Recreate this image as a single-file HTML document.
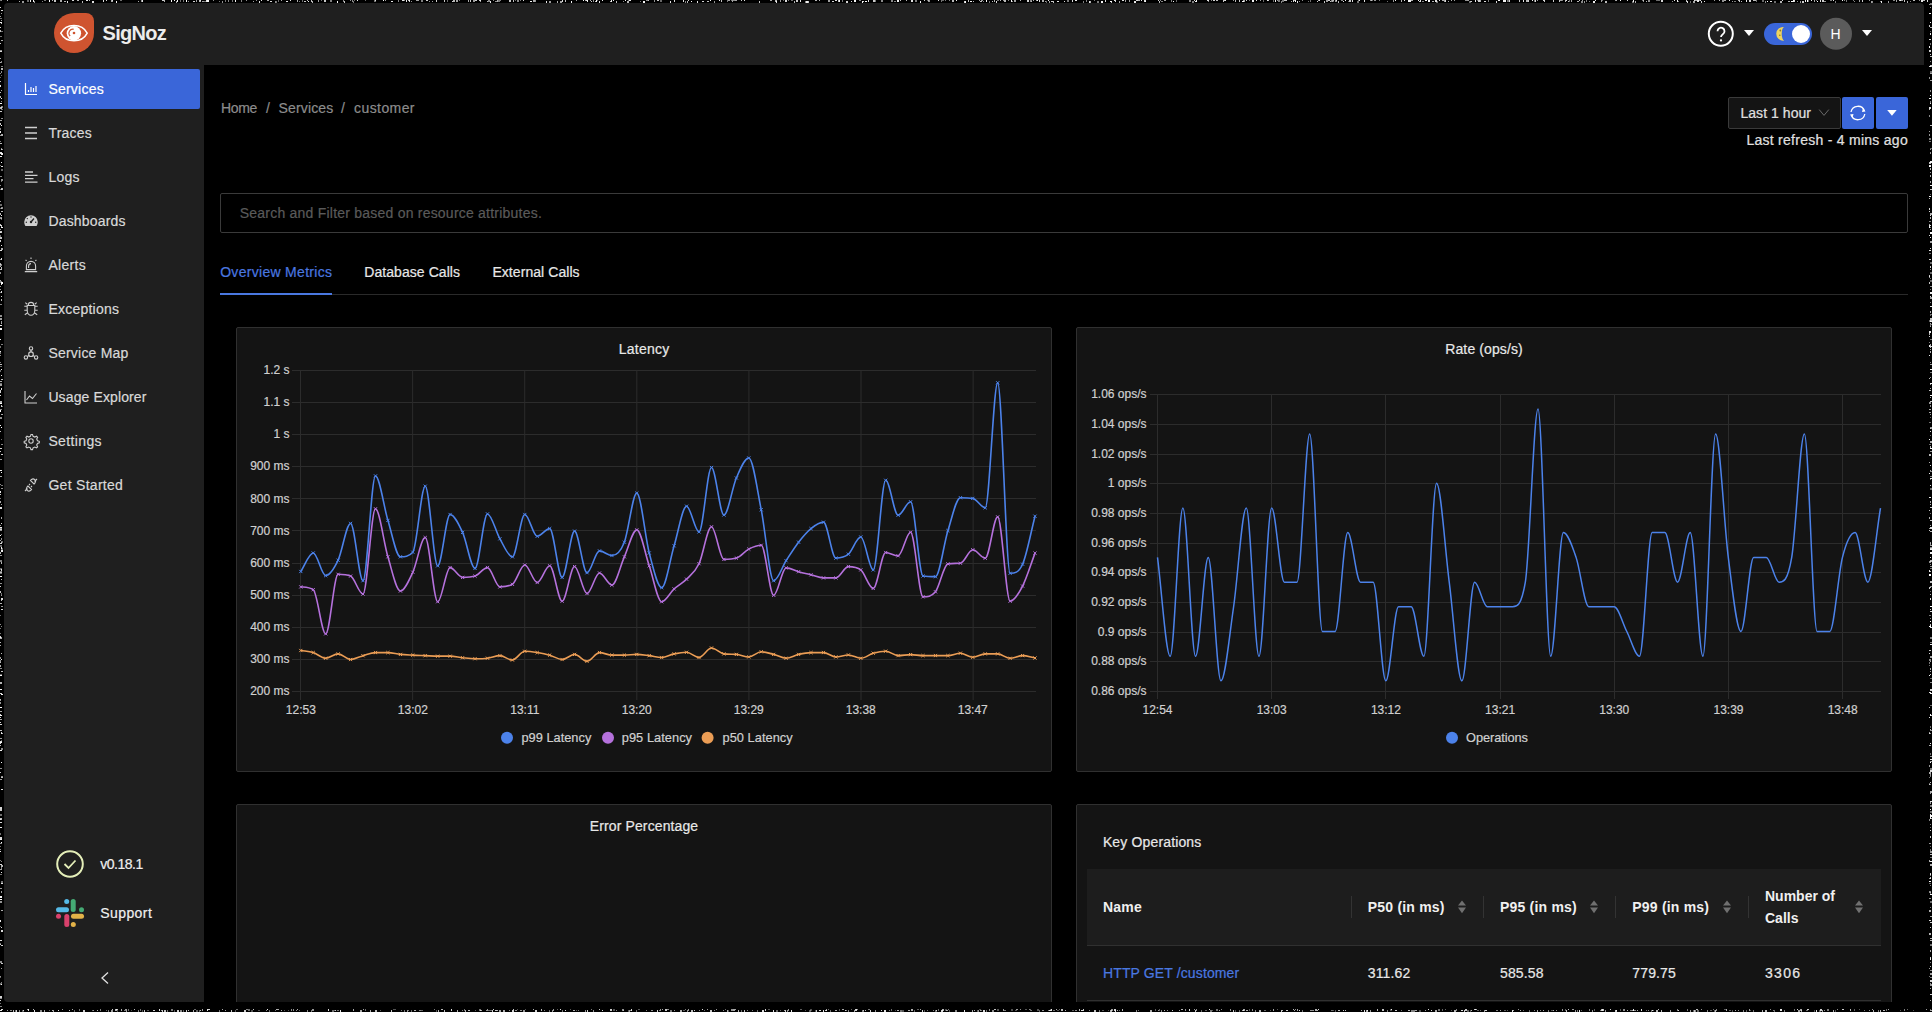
<!DOCTYPE html>
<html><head><meta charset="utf-8">
<style>
html,body{margin:0;padding:0;background:#000;width:1932px;height:1012px;overflow:hidden}
body{font-family:"Liberation Sans",sans-serif;position:relative}
.win{position:absolute;left:0;top:0;width:1932px;height:1012px;clip-path:inset(3px 8px 10px 4px round 4px);background:#000}
.a{position:absolute;box-sizing:border-box}
.t{position:absolute;white-space:nowrap;line-height:1;font-family:"Liberation Sans",sans-serif}
svg.full{position:absolute;left:0;top:0}
</style></head><body>
<div class="win">
  <!-- header -->
  <div class="a" style="left:0;top:0;width:1932px;height:65px;background:#1f1f1f"></div>
  <!-- sidebar -->
  <div class="a" style="left:0;top:65px;width:204px;height:947px;background:#1f1f1f"></div>
  <!-- services highlight -->
  <div class="a" style="left:8px;top:69px;width:192px;height:40px;background:#3a66d9;border-radius:2px"></div>

  <!-- logo -->
  <div class="a" style="left:54px;top:13px;width:40px;height:40px;background:#cf5430;border-radius:50% 20% 50% 50%"></div>
  <svg class="full" width="1932" height="1012">
    <path d="M60.8,33.2 C66,23 82,23 87.2,33.2 C82,43.4 66,43.4 60.8,33.2 z" fill="none" stroke="#fff" stroke-width="1.5"/>
    <circle cx="73.9" cy="33.3" r="7.2" fill="#fff"/>
    <path d="M70.2,36 A4,4 0 0 1 73.8,29.2" fill="none" stroke="#cf5430" stroke-width="1.1"/>
    <circle cx="74" cy="33" r="1.3" fill="#cf5430"/>
  </svg>

  <!-- search box -->
  <div class="a" style="left:220px;top:193px;width:1688px;height:40px;border:1px solid #3a3a3a;border-radius:2px;background:#000"></div>
  <!-- tabs -->
  <div class="a" style="left:220px;top:294px;width:1688px;height:1px;background:#2a2a2a"></div>
  <div class="a" style="left:220px;top:293px;width:112px;height:2px;background:#4a78e0"></div>

  <!-- date picker -->
  <div class="a" style="left:1728px;top:97px;width:113px;height:32px;border:1px solid #3a3a3a;border-radius:2px;background:#141414"></div>
  <div class="a" style="left:1842px;top:97px;width:32px;height:32px;background:#3a66d9;border-radius:2px"></div>
  <div class="a" style="left:1876px;top:97px;width:32px;height:32px;background:#3a66d9;border-radius:2px"></div>

  <!-- panels -->
  <div class="a" style="left:236px;top:327px;width:816px;height:445px;background:#141414;border:1px solid #303030;border-radius:2px"></div>
  <div class="a" style="left:1076px;top:327px;width:816px;height:445px;background:#141414;border:1px solid #303030;border-radius:2px"></div>
  <div class="a" style="left:236px;top:804px;width:816px;height:300px;background:#141414;border:1px solid #303030;border-radius:2px"></div>
  <div class="a" style="left:1076px;top:804px;width:816px;height:300px;background:#141414;border:1px solid #303030;border-radius:2px"></div>
  <!-- table header -->
  <div class="a" style="left:1087px;top:869px;width:794px;height:77px;background:#1d1d1d;border-bottom:1px solid #303030"></div>
  <div class="a" style="left:1351px;top:896px;width:1px;height:22px;background:#333"></div>
  <div class="a" style="left:1483px;top:896px;width:1px;height:22px;background:#333"></div>
  <div class="a" style="left:1615px;top:896px;width:1px;height:22px;background:#333"></div>
  <div class="a" style="left:1748px;top:896px;width:1px;height:22px;background:#333"></div>
  <div class="a" style="left:1087px;top:1000px;width:794px;height:1px;background:#303030"></div>

  <svg class="full" width="1932" height="1012">
<line x1="292" y1="370.5" x2="1036" y2="370.5" stroke="#2c2c2c" stroke-width="1"/>
<line x1="292" y1="402.5" x2="1036" y2="402.5" stroke="#2c2c2c" stroke-width="1"/>
<line x1="292" y1="434.5" x2="1036" y2="434.5" stroke="#2c2c2c" stroke-width="1"/>
<line x1="292" y1="466.5" x2="1036" y2="466.5" stroke="#2c2c2c" stroke-width="1"/>
<line x1="292" y1="498.5" x2="1036" y2="498.5" stroke="#2c2c2c" stroke-width="1"/>
<line x1="292" y1="530.5" x2="1036" y2="530.5" stroke="#2c2c2c" stroke-width="1"/>
<line x1="292" y1="563.5" x2="1036" y2="563.5" stroke="#2c2c2c" stroke-width="1"/>
<line x1="292" y1="595.5" x2="1036" y2="595.5" stroke="#2c2c2c" stroke-width="1"/>
<line x1="292" y1="627.5" x2="1036" y2="627.5" stroke="#2c2c2c" stroke-width="1"/>
<line x1="292" y1="659.5" x2="1036" y2="659.5" stroke="#2c2c2c" stroke-width="1"/>
<line x1="292" y1="691.5" x2="1036" y2="691.5" stroke="#2c2c2c" stroke-width="1"/>
<line x1="300.50" y1="370.0" x2="300.50" y2="700" stroke="#2c2c2c" stroke-width="1"/>
<line x1="412.60" y1="370.0" x2="412.60" y2="700" stroke="#2c2c2c" stroke-width="1"/>
<line x1="524.70" y1="370.0" x2="524.70" y2="700" stroke="#2c2c2c" stroke-width="1"/>
<line x1="636.80" y1="370.0" x2="636.80" y2="700" stroke="#2c2c2c" stroke-width="1"/>
<line x1="748.90" y1="370.0" x2="748.90" y2="700" stroke="#2c2c2c" stroke-width="1"/>
<line x1="861.00" y1="370.0" x2="861.00" y2="700" stroke="#2c2c2c" stroke-width="1"/>
<line x1="973.10" y1="370.0" x2="973.10" y2="700" stroke="#2c2c2c" stroke-width="1"/>
<line x1="1150" y1="394.5" x2="1881" y2="394.5" stroke="#2c2c2c" stroke-width="1"/>
<line x1="1150" y1="424.5" x2="1881" y2="424.5" stroke="#2c2c2c" stroke-width="1"/>
<line x1="1150" y1="454.5" x2="1881" y2="454.5" stroke="#2c2c2c" stroke-width="1"/>
<line x1="1150" y1="483.5" x2="1881" y2="483.5" stroke="#2c2c2c" stroke-width="1"/>
<line x1="1150" y1="513.5" x2="1881" y2="513.5" stroke="#2c2c2c" stroke-width="1"/>
<line x1="1150" y1="543.5" x2="1881" y2="543.5" stroke="#2c2c2c" stroke-width="1"/>
<line x1="1150" y1="572.5" x2="1881" y2="572.5" stroke="#2c2c2c" stroke-width="1"/>
<line x1="1150" y1="602.5" x2="1881" y2="602.5" stroke="#2c2c2c" stroke-width="1"/>
<line x1="1150" y1="632.5" x2="1881" y2="632.5" stroke="#2c2c2c" stroke-width="1"/>
<line x1="1150" y1="661.5" x2="1881" y2="661.5" stroke="#2c2c2c" stroke-width="1"/>
<line x1="1150" y1="691.5" x2="1881" y2="691.5" stroke="#2c2c2c" stroke-width="1"/>
<line x1="1157.5" y1="394.3" x2="1157.5" y2="699" stroke="#2c2c2c" stroke-width="1"/>
<line x1="1271.5" y1="394.3" x2="1271.5" y2="699" stroke="#2c2c2c" stroke-width="1"/>
<line x1="1385.5" y1="394.3" x2="1385.5" y2="699" stroke="#2c2c2c" stroke-width="1"/>
<line x1="1500.5" y1="394.3" x2="1500.5" y2="699" stroke="#2c2c2c" stroke-width="1"/>
<line x1="1614.5" y1="394.3" x2="1614.5" y2="699" stroke="#2c2c2c" stroke-width="1"/>
<line x1="1728.5" y1="394.3" x2="1728.5" y2="699" stroke="#2c2c2c" stroke-width="1"/>
<line x1="1842.5" y1="394.3" x2="1842.5" y2="699" stroke="#2c2c2c" stroke-width="1"/>
<path d="M300.80,650.53C304.95,651.21 309.10,651.30 313.24,652.58C317.39,653.86 321.54,658.23 325.69,658.23C329.84,658.23 333.99,653.86 338.13,653.86C342.28,653.86 346.43,659.51 350.58,659.51C354.73,659.51 358.87,656.82 363.02,655.66C367.17,654.51 371.32,652.58 375.47,652.58C379.61,652.58 383.76,652.58 387.91,652.58C392.06,652.58 396.21,653.95 400.36,654.38C404.50,654.81 408.65,654.93 412.80,655.15C416.95,655.36 421.10,655.49 425.24,655.66C429.39,655.83 433.54,656.17 437.69,656.17C441.84,656.17 445.99,656.17 450.13,656.17C454.28,656.17 458.43,657.29 462.58,657.72C466.73,658.14 470.87,658.74 475.02,658.74C479.17,658.74 483.32,658.74 487.47,658.23C491.61,657.72 495.76,655.66 499.91,655.66C504.06,655.66 508.21,660.03 512.36,660.03C516.50,660.03 520.65,651.30 524.80,651.30C528.95,651.30 533.10,651.94 537.24,652.58C541.39,653.22 545.54,653.99 549.69,655.15C553.84,656.30 557.99,659.51 562.13,659.51C566.28,659.51 570.43,654.38 574.58,654.38C578.73,654.38 582.87,661.31 587.02,661.31C591.17,661.31 595.32,652.58 599.47,652.58C603.61,652.58 607.76,655.15 611.91,655.15C616.06,655.15 620.21,655.15 624.36,655.15C628.50,655.15 632.65,654.38 636.80,654.38C640.95,654.38 645.10,655.15 649.24,655.66C653.39,656.17 657.54,657.46 661.69,657.46C665.84,657.46 669.99,654.72 674.13,653.86C678.28,653.01 682.43,652.32 686.58,652.32C690.73,652.32 694.87,657.46 699.02,657.46C703.17,657.46 707.32,647.96 711.47,647.96C715.61,647.96 719.76,653.40 723.91,653.86C728.06,654.33 732.21,654.16 736.36,654.38C740.50,654.60 744.65,656.94 748.80,656.94C752.95,656.94 757.10,651.81 761.24,651.81C765.39,651.81 769.54,653.31 773.69,654.38C777.84,655.45 781.99,658.23 786.13,658.23C790.28,658.23 794.43,655.32 798.58,654.38C802.73,653.44 806.87,652.58 811.02,652.58C815.17,652.58 819.32,652.58 823.47,652.58C827.61,652.58 831.76,656.94 835.91,656.94C840.06,656.94 844.21,654.93 848.36,654.93C852.50,654.93 856.65,658.29 860.80,658.29C864.95,658.29 869.10,654.42 873.24,653.25C877.39,652.07 881.54,651.23 885.69,651.23C889.84,651.23 893.99,655.60 898.13,655.60C902.28,655.60 906.43,654.59 910.58,654.59C914.73,654.59 918.87,655.60 923.02,655.60C927.17,655.60 931.32,655.60 935.47,655.60C939.61,655.60 943.76,655.60 947.91,655.60C952.06,655.60 956.21,653.25 960.36,653.25C964.50,653.25 968.65,657.28 972.80,657.28C976.95,657.28 981.10,653.92 985.24,653.92C989.39,653.92 993.54,653.92 997.69,653.92C1001.84,653.92 1005.99,658.29 1010.13,658.29C1014.28,658.29 1018.43,655.60 1022.58,655.60C1026.73,655.60 1030.87,657.17 1035.02,657.95" fill="none" stroke="#eb9d55" stroke-width="1.6"/>
<path d="M299.2,652.1l3.2,-3.2M299.2,648.9l3.2,3.2M311.6,654.2l3.2,-3.2M311.6,651.0l3.2,3.2M324.1,659.8l3.2,-3.2M324.1,656.6l3.2,3.2M336.5,655.5l3.2,-3.2M336.5,652.3l3.2,3.2M349.0,661.1l3.2,-3.2M349.0,657.9l3.2,3.2M361.4,657.3l3.2,-3.2M361.4,654.1l3.2,3.2M373.9,654.2l3.2,-3.2M373.9,651.0l3.2,3.2M386.3,654.2l3.2,-3.2M386.3,651.0l3.2,3.2M398.8,656.0l3.2,-3.2M398.8,652.8l3.2,3.2M411.2,656.7l3.2,-3.2M411.2,653.5l3.2,3.2M423.6,657.3l3.2,-3.2M423.6,654.1l3.2,3.2M436.1,657.8l3.2,-3.2M436.1,654.6l3.2,3.2M448.5,657.8l3.2,-3.2M448.5,654.6l3.2,3.2M461.0,659.3l3.2,-3.2M461.0,656.1l3.2,3.2M473.4,660.3l3.2,-3.2M473.4,657.1l3.2,3.2M485.9,659.8l3.2,-3.2M485.9,656.6l3.2,3.2M498.3,657.3l3.2,-3.2M498.3,654.1l3.2,3.2M510.8,661.6l3.2,-3.2M510.8,658.4l3.2,3.2M523.2,652.9l3.2,-3.2M523.2,649.7l3.2,3.2M535.6,654.2l3.2,-3.2M535.6,651.0l3.2,3.2M548.1,656.7l3.2,-3.2M548.1,653.5l3.2,3.2M560.5,661.1l3.2,-3.2M560.5,657.9l3.2,3.2M573.0,656.0l3.2,-3.2M573.0,652.8l3.2,3.2M585.4,662.9l3.2,-3.2M585.4,659.7l3.2,3.2M597.9,654.2l3.2,-3.2M597.9,651.0l3.2,3.2M610.3,656.7l3.2,-3.2M610.3,653.5l3.2,3.2M622.8,656.7l3.2,-3.2M622.8,653.5l3.2,3.2M635.2,656.0l3.2,-3.2M635.2,652.8l3.2,3.2M647.6,657.3l3.2,-3.2M647.6,654.1l3.2,3.2M660.1,659.1l3.2,-3.2M660.1,655.9l3.2,3.2M672.5,655.5l3.2,-3.2M672.5,652.3l3.2,3.2M685.0,653.9l3.2,-3.2M685.0,650.7l3.2,3.2M697.4,659.1l3.2,-3.2M697.4,655.9l3.2,3.2M709.9,649.6l3.2,-3.2M709.9,646.4l3.2,3.2M722.3,655.5l3.2,-3.2M722.3,652.3l3.2,3.2M734.8,656.0l3.2,-3.2M734.8,652.8l3.2,3.2M747.2,658.5l3.2,-3.2M747.2,655.3l3.2,3.2M759.6,653.4l3.2,-3.2M759.6,650.2l3.2,3.2M772.1,656.0l3.2,-3.2M772.1,652.8l3.2,3.2M784.5,659.8l3.2,-3.2M784.5,656.6l3.2,3.2M797.0,656.0l3.2,-3.2M797.0,652.8l3.2,3.2M809.4,654.2l3.2,-3.2M809.4,651.0l3.2,3.2M821.9,654.2l3.2,-3.2M821.9,651.0l3.2,3.2M834.3,658.5l3.2,-3.2M834.3,655.3l3.2,3.2M846.8,656.5l3.2,-3.2M846.8,653.3l3.2,3.2M859.2,659.9l3.2,-3.2M859.2,656.7l3.2,3.2M871.6,654.8l3.2,-3.2M871.6,651.6l3.2,3.2M884.1,652.8l3.2,-3.2M884.1,649.6l3.2,3.2M896.5,657.2l3.2,-3.2M896.5,654.0l3.2,3.2M909.0,656.2l3.2,-3.2M909.0,653.0l3.2,3.2M921.4,657.2l3.2,-3.2M921.4,654.0l3.2,3.2M933.9,657.2l3.2,-3.2M933.9,654.0l3.2,3.2M946.3,657.2l3.2,-3.2M946.3,654.0l3.2,3.2M958.8,654.8l3.2,-3.2M958.8,651.6l3.2,3.2M971.2,658.9l3.2,-3.2M971.2,655.7l3.2,3.2M983.6,655.5l3.2,-3.2M983.6,652.3l3.2,3.2M996.1,655.5l3.2,-3.2M996.1,652.3l3.2,3.2M1008.5,659.9l3.2,-3.2M1008.5,656.7l3.2,3.2M1021.0,657.2l3.2,-3.2M1021.0,654.0l3.2,3.2M1033.4,659.6l3.2,-3.2M1033.4,656.4l3.2,3.2" fill="none" stroke="#eb9d55" stroke-width="1"/>
<path d="M300.80,586.85C304.95,587.19 309.10,586.88 313.24,589.68C317.39,592.48 321.54,633.84 325.69,633.84C329.84,633.84 333.99,574.27 338.13,574.27C342.28,574.27 346.43,574.27 350.58,576.07C354.73,577.87 358.87,594.04 363.02,594.04C367.17,594.04 371.32,508.81 375.47,508.81C379.61,508.81 383.76,543.12 387.91,556.82C392.06,570.51 396.21,590.96 400.36,590.96C404.50,590.96 408.65,581.12 412.80,572.22C416.95,563.32 421.10,537.56 425.24,537.56C429.39,537.56 433.54,601.75 437.69,601.75C441.84,601.75 445.99,567.60 450.13,567.60C454.28,567.60 458.43,577.36 462.58,577.36C466.73,577.36 470.87,577.36 475.02,576.07C479.17,574.79 483.32,567.60 487.47,567.60C491.61,567.60 495.76,586.85 499.91,586.85C504.06,586.85 508.21,586.85 512.36,584.29C516.50,581.72 520.65,565.03 524.80,565.03C528.95,565.03 533.10,582.49 537.24,582.49C541.39,582.49 545.54,565.80 549.69,565.80C553.84,565.80 557.99,601.23 562.13,601.23C566.28,601.23 570.43,566.57 574.58,566.57C578.73,566.57 582.87,593.53 587.02,593.53C591.17,593.53 595.32,572.99 599.47,572.99C603.61,572.99 607.76,585.06 611.91,585.06C616.06,585.06 620.21,566.02 624.36,556.82C628.50,547.62 632.65,529.86 636.80,529.86C640.95,529.86 645.10,553.82 649.24,565.80C653.39,577.78 657.54,601.75 661.69,601.75C665.84,601.75 669.99,592.67 674.13,588.91C678.28,585.14 682.43,583.35 686.58,579.15C690.73,574.96 694.87,572.48 699.02,563.75C703.17,555.02 707.32,526.78 711.47,526.78C715.61,526.78 719.76,559.38 723.91,559.38C728.06,559.38 732.21,559.38 736.36,558.10C740.50,556.82 744.65,551.25 748.80,549.11C752.95,546.97 757.10,545.26 761.24,545.26C765.39,545.26 769.54,595.33 773.69,595.33C777.84,595.33 781.99,567.86 786.13,567.86C790.28,567.86 794.43,570.55 798.58,571.71C802.73,572.86 806.87,573.76 811.02,574.79C815.17,575.82 819.32,577.87 823.47,577.87C827.61,577.87 831.76,577.87 835.91,577.87C840.06,577.87 844.21,566.58 848.36,566.58C852.50,566.58 856.65,566.58 860.80,569.94C864.95,573.30 869.10,588.42 873.24,588.42C877.39,588.42 881.54,552.48 885.69,552.48C889.84,552.48 893.99,555.83 898.13,555.83C902.28,555.83 906.43,532.32 910.58,532.32C914.73,532.32 918.87,596.82 923.02,596.82C927.17,596.82 931.32,596.82 935.47,591.78C939.61,586.74 943.76,564.50 947.91,563.90C952.06,563.29 956.21,563.52 960.36,563.22C964.50,562.93 968.65,549.79 972.80,549.79C976.95,549.79 981.10,558.19 985.24,558.19C989.39,558.19 993.54,516.87 997.69,516.87C1001.84,516.87 1005.99,601.18 1010.13,601.18C1014.28,601.18 1018.43,594.07 1022.58,586.07C1026.73,578.06 1030.87,564.12 1035.02,553.15" fill="none" stroke="#b571dc" stroke-width="1.6"/>
<path d="M299.2,588.5l3.2,-3.2M299.2,585.3l3.2,3.2M311.6,591.3l3.2,-3.2M311.6,588.1l3.2,3.2M324.1,635.4l3.2,-3.2M324.1,632.2l3.2,3.2M336.5,575.9l3.2,-3.2M336.5,572.7l3.2,3.2M349.0,577.7l3.2,-3.2M349.0,574.5l3.2,3.2M361.4,595.6l3.2,-3.2M361.4,592.4l3.2,3.2M373.9,510.4l3.2,-3.2M373.9,507.2l3.2,3.2M386.3,558.4l3.2,-3.2M386.3,555.2l3.2,3.2M398.8,592.6l3.2,-3.2M398.8,589.4l3.2,3.2M411.2,573.8l3.2,-3.2M411.2,570.6l3.2,3.2M423.6,539.2l3.2,-3.2M423.6,536.0l3.2,3.2M436.1,603.3l3.2,-3.2M436.1,600.1l3.2,3.2M448.5,569.2l3.2,-3.2M448.5,566.0l3.2,3.2M461.0,579.0l3.2,-3.2M461.0,575.8l3.2,3.2M473.4,577.7l3.2,-3.2M473.4,574.5l3.2,3.2M485.9,569.2l3.2,-3.2M485.9,566.0l3.2,3.2M498.3,588.5l3.2,-3.2M498.3,585.3l3.2,3.2M510.8,585.9l3.2,-3.2M510.8,582.7l3.2,3.2M523.2,566.6l3.2,-3.2M523.2,563.4l3.2,3.2M535.6,584.1l3.2,-3.2M535.6,580.9l3.2,3.2M548.1,567.4l3.2,-3.2M548.1,564.2l3.2,3.2M560.5,602.8l3.2,-3.2M560.5,599.6l3.2,3.2M573.0,568.2l3.2,-3.2M573.0,565.0l3.2,3.2M585.4,595.1l3.2,-3.2M585.4,591.9l3.2,3.2M597.9,574.6l3.2,-3.2M597.9,571.4l3.2,3.2M610.3,586.7l3.2,-3.2M610.3,583.5l3.2,3.2M622.8,558.4l3.2,-3.2M622.8,555.2l3.2,3.2M635.2,531.5l3.2,-3.2M635.2,528.3l3.2,3.2M647.6,567.4l3.2,-3.2M647.6,564.2l3.2,3.2M660.1,603.3l3.2,-3.2M660.1,600.1l3.2,3.2M672.5,590.5l3.2,-3.2M672.5,587.3l3.2,3.2M685.0,580.8l3.2,-3.2M685.0,577.6l3.2,3.2M697.4,565.3l3.2,-3.2M697.4,562.1l3.2,3.2M709.9,528.4l3.2,-3.2M709.9,525.2l3.2,3.2M722.3,561.0l3.2,-3.2M722.3,557.8l3.2,3.2M734.8,559.7l3.2,-3.2M734.8,556.5l3.2,3.2M747.2,550.7l3.2,-3.2M747.2,547.5l3.2,3.2M759.6,546.9l3.2,-3.2M759.6,543.7l3.2,3.2M772.1,596.9l3.2,-3.2M772.1,593.7l3.2,3.2M784.5,569.5l3.2,-3.2M784.5,566.3l3.2,3.2M797.0,573.3l3.2,-3.2M797.0,570.1l3.2,3.2M809.4,576.4l3.2,-3.2M809.4,573.2l3.2,3.2M821.9,579.5l3.2,-3.2M821.9,576.3l3.2,3.2M834.3,579.5l3.2,-3.2M834.3,576.3l3.2,3.2M846.8,568.2l3.2,-3.2M846.8,565.0l3.2,3.2M859.2,571.5l3.2,-3.2M859.2,568.3l3.2,3.2M871.6,590.0l3.2,-3.2M871.6,586.8l3.2,3.2M884.1,554.1l3.2,-3.2M884.1,550.9l3.2,3.2M896.5,557.4l3.2,-3.2M896.5,554.2l3.2,3.2M909.0,533.9l3.2,-3.2M909.0,530.7l3.2,3.2M921.4,598.4l3.2,-3.2M921.4,595.2l3.2,3.2M933.9,593.4l3.2,-3.2M933.9,590.2l3.2,3.2M946.3,565.5l3.2,-3.2M946.3,562.3l3.2,3.2M958.8,564.8l3.2,-3.2M958.8,561.6l3.2,3.2M971.2,551.4l3.2,-3.2M971.2,548.2l3.2,3.2M983.6,559.8l3.2,-3.2M983.6,556.6l3.2,3.2M996.1,518.5l3.2,-3.2M996.1,515.3l3.2,3.2M1008.5,602.8l3.2,-3.2M1008.5,599.6l3.2,3.2M1021.0,587.7l3.2,-3.2M1021.0,584.5l3.2,3.2M1033.4,554.7l3.2,-3.2M1033.4,551.5l3.2,3.2" fill="none" stroke="#b571dc" stroke-width="1"/>
<path d="M300.80,571.45C304.95,565.29 309.10,552.97 313.24,552.97C317.39,552.97 321.54,575.56 325.69,575.56C329.84,575.56 333.99,568.84 338.13,560.15C342.28,551.47 346.43,523.44 350.58,523.44C354.73,523.44 358.87,580.69 363.02,580.69C367.17,580.69 371.32,475.94 375.47,475.94C379.61,475.94 383.76,506.88 387.91,520.36C392.06,533.84 396.21,556.82 400.36,556.82C404.50,556.82 408.65,556.82 412.80,552.20C416.95,547.57 421.10,486.21 425.24,486.21C429.39,486.21 433.54,565.80 437.69,565.80C441.84,565.80 445.99,514.45 450.13,514.45C454.28,514.45 458.43,523.44 462.58,532.43C466.73,541.41 470.87,568.37 475.02,568.37C479.17,568.37 483.32,513.94 487.47,513.94C491.61,513.94 495.76,531.70 499.91,538.84C504.06,545.99 508.21,556.82 512.36,556.82C516.50,556.82 520.65,514.45 524.80,514.45C528.95,514.45 533.10,536.28 537.24,536.28C541.39,536.28 545.54,528.58 549.69,528.58C553.84,528.58 557.99,577.36 562.13,577.36C566.28,577.36 570.43,531.14 574.58,531.14C578.73,531.14 582.87,572.73 587.02,572.73C591.17,572.73 595.32,550.91 599.47,550.91C603.61,550.91 607.76,555.53 611.91,555.53C616.06,555.53 620.21,552.58 624.36,542.18C628.50,531.78 632.65,493.15 636.80,493.15C640.95,493.15 645.10,537.22 649.24,552.97C653.39,568.71 657.54,587.63 661.69,587.63C665.84,587.63 669.99,559.34 674.13,545.78C678.28,532.21 682.43,506.24 686.58,506.24C690.73,506.24 694.87,531.91 699.02,531.91C703.17,531.91 707.32,467.47 711.47,467.47C715.61,467.47 719.76,514.97 723.91,514.97C728.06,514.97 732.21,487.50 736.36,478.00C740.50,468.50 744.65,457.97 748.80,457.97C752.95,457.97 757.10,489.38 761.24,509.83C765.39,530.29 769.54,580.69 773.69,580.69C777.84,580.69 781.99,567.09 786.13,560.67C790.28,554.25 794.43,547.53 798.58,542.18C802.73,536.83 806.87,531.91 811.02,528.58C815.17,525.24 819.32,522.16 823.47,522.16C827.61,522.16 831.76,558.10 835.91,558.10C840.06,558.10 844.21,557.67 848.36,554.16C852.50,550.64 856.65,537.02 860.80,537.02C864.95,537.02 869.10,569.94 873.24,569.94C877.39,569.94 881.54,480.26 885.69,480.26C889.84,480.26 893.99,515.19 898.13,515.19C902.28,515.19 906.43,501.75 910.58,501.75C914.73,501.75 918.87,575.32 923.02,575.99C927.17,576.66 931.32,576.66 935.47,576.66C939.61,576.66 943.76,543.80 947.91,530.64C952.06,517.49 956.21,497.72 960.36,497.72C964.50,497.72 968.65,497.72 972.80,498.39C976.95,499.07 981.10,507.80 985.24,507.80C989.39,507.80 993.54,382.84 997.69,382.84C1001.84,382.84 1005.99,573.30 1010.13,573.30C1014.28,573.30 1018.43,573.30 1022.58,564.23C1026.73,555.16 1030.87,532.21 1035.02,516.20" fill="none" stroke="#4c82ea" stroke-width="1.6"/>
<path d="M299.2,573.1l3.2,-3.2M299.2,569.9l3.2,3.2M311.6,554.6l3.2,-3.2M311.6,551.4l3.2,3.2M324.1,577.2l3.2,-3.2M324.1,574.0l3.2,3.2M336.5,561.8l3.2,-3.2M336.5,558.6l3.2,3.2M349.0,525.0l3.2,-3.2M349.0,521.8l3.2,3.2M361.4,582.3l3.2,-3.2M361.4,579.1l3.2,3.2M373.9,477.5l3.2,-3.2M373.9,474.3l3.2,3.2M386.3,522.0l3.2,-3.2M386.3,518.8l3.2,3.2M398.8,558.4l3.2,-3.2M398.8,555.2l3.2,3.2M411.2,553.8l3.2,-3.2M411.2,550.6l3.2,3.2M423.6,487.8l3.2,-3.2M423.6,484.6l3.2,3.2M436.1,567.4l3.2,-3.2M436.1,564.2l3.2,3.2M448.5,516.1l3.2,-3.2M448.5,512.9l3.2,3.2M461.0,534.0l3.2,-3.2M461.0,530.8l3.2,3.2M473.4,570.0l3.2,-3.2M473.4,566.8l3.2,3.2M485.9,515.5l3.2,-3.2M485.9,512.3l3.2,3.2M498.3,540.4l3.2,-3.2M498.3,537.2l3.2,3.2M510.8,558.4l3.2,-3.2M510.8,555.2l3.2,3.2M523.2,516.1l3.2,-3.2M523.2,512.9l3.2,3.2M535.6,537.9l3.2,-3.2M535.6,534.7l3.2,3.2M548.1,530.2l3.2,-3.2M548.1,527.0l3.2,3.2M560.5,579.0l3.2,-3.2M560.5,575.8l3.2,3.2M573.0,532.7l3.2,-3.2M573.0,529.5l3.2,3.2M585.4,574.3l3.2,-3.2M585.4,571.1l3.2,3.2M597.9,552.5l3.2,-3.2M597.9,549.3l3.2,3.2M610.3,557.1l3.2,-3.2M610.3,553.9l3.2,3.2M622.8,543.8l3.2,-3.2M622.8,540.6l3.2,3.2M635.2,494.7l3.2,-3.2M635.2,491.5l3.2,3.2M647.6,554.6l3.2,-3.2M647.6,551.4l3.2,3.2M660.1,589.2l3.2,-3.2M660.1,586.0l3.2,3.2M672.5,547.4l3.2,-3.2M672.5,544.2l3.2,3.2M685.0,507.8l3.2,-3.2M685.0,504.6l3.2,3.2M697.4,533.5l3.2,-3.2M697.4,530.3l3.2,3.2M709.9,469.1l3.2,-3.2M709.9,465.9l3.2,3.2M722.3,516.6l3.2,-3.2M722.3,513.4l3.2,3.2M734.8,479.6l3.2,-3.2M734.8,476.4l3.2,3.2M747.2,459.6l3.2,-3.2M747.2,456.4l3.2,3.2M759.6,511.4l3.2,-3.2M759.6,508.2l3.2,3.2M772.1,582.3l3.2,-3.2M772.1,579.1l3.2,3.2M784.5,562.3l3.2,-3.2M784.5,559.1l3.2,3.2M797.0,543.8l3.2,-3.2M797.0,540.6l3.2,3.2M809.4,530.2l3.2,-3.2M809.4,527.0l3.2,3.2M821.9,523.8l3.2,-3.2M821.9,520.6l3.2,3.2M834.3,559.7l3.2,-3.2M834.3,556.5l3.2,3.2M846.8,555.8l3.2,-3.2M846.8,552.6l3.2,3.2M859.2,538.6l3.2,-3.2M859.2,535.4l3.2,3.2M871.6,571.5l3.2,-3.2M871.6,568.3l3.2,3.2M884.1,481.9l3.2,-3.2M884.1,478.7l3.2,3.2M896.5,516.8l3.2,-3.2M896.5,513.6l3.2,3.2M909.0,503.4l3.2,-3.2M909.0,500.2l3.2,3.2M921.4,577.6l3.2,-3.2M921.4,574.4l3.2,3.2M933.9,578.3l3.2,-3.2M933.9,575.1l3.2,3.2M946.3,532.2l3.2,-3.2M946.3,529.0l3.2,3.2M958.8,499.3l3.2,-3.2M958.8,496.1l3.2,3.2M971.2,500.0l3.2,-3.2M971.2,496.8l3.2,3.2M983.6,509.4l3.2,-3.2M983.6,506.2l3.2,3.2M996.1,384.4l3.2,-3.2M996.1,381.2l3.2,3.2M1008.5,574.9l3.2,-3.2M1008.5,571.7l3.2,3.2M1021.0,565.8l3.2,-3.2M1021.0,562.6l3.2,3.2M1033.4,517.8l3.2,-3.2M1033.4,514.6l3.2,3.2" fill="none" stroke="#4c82ea" stroke-width="1"/>
<path d="M1157.50,557.38C1161.73,590.34 1165.96,656.26 1170.18,656.26C1174.41,656.26 1178.64,508.01 1182.87,508.01C1187.10,508.01 1191.32,656.26 1195.55,656.26C1199.78,656.26 1204.01,557.38 1208.24,557.38C1212.46,557.38 1216.69,680.87 1220.92,680.87C1225.15,680.87 1229.38,635.55 1233.61,606.74C1237.83,577.93 1242.06,508.01 1246.29,508.01C1250.52,508.01 1254.75,656.26 1258.97,656.26C1263.20,656.26 1267.43,508.01 1271.66,508.01C1275.89,508.01 1280.11,582.13 1284.34,582.13C1288.57,582.13 1292.80,582.13 1297.03,582.13C1301.25,582.13 1305.48,433.88 1309.71,433.88C1313.94,433.88 1318.17,631.50 1322.39,631.50C1326.62,631.50 1330.85,631.50 1335.08,631.50C1339.31,631.50 1343.54,532.62 1347.76,532.62C1351.99,532.62 1356.22,582.13 1360.45,582.13C1364.68,582.13 1368.90,582.13 1373.13,582.13C1377.36,582.13 1381.59,680.87 1385.82,680.87C1390.04,680.87 1394.27,606.74 1398.50,606.74C1402.73,606.74 1406.96,606.74 1411.18,606.74C1415.41,606.74 1419.64,656.26 1423.87,656.26C1428.10,656.26 1432.32,483.25 1436.55,483.25C1440.78,483.25 1445.01,549.20 1449.24,582.13C1453.46,615.07 1457.69,680.87 1461.92,680.87C1466.15,680.87 1470.38,582.13 1474.61,582.13C1478.83,582.13 1483.06,606.74 1487.29,606.74C1491.52,606.74 1495.75,606.74 1499.97,606.74C1504.20,606.74 1508.43,606.74 1512.66,606.74C1516.89,606.74 1521.11,606.74 1525.34,582.13C1529.57,557.52 1533.80,409.12 1538.03,409.12C1542.25,409.12 1546.48,656.26 1550.71,656.26C1554.94,656.26 1559.17,532.62 1563.39,532.62C1567.62,532.62 1571.85,545.02 1576.08,557.38C1580.31,569.73 1584.54,606.74 1588.76,606.74C1592.99,606.74 1597.22,606.74 1601.45,606.74C1605.68,606.74 1609.90,606.74 1614.13,606.74C1618.36,606.74 1622.59,623.25 1626.82,631.50C1631.04,639.75 1635.27,656.26 1639.50,656.26C1643.73,656.26 1647.96,532.62 1652.18,532.62C1656.41,532.62 1660.64,532.62 1664.87,532.62C1669.10,532.62 1673.32,582.13 1677.55,582.13C1681.78,582.13 1686.01,532.62 1690.24,532.62C1694.46,532.62 1698.69,656.26 1702.92,656.26C1707.15,656.26 1711.38,433.88 1715.61,433.88C1719.83,433.88 1724.06,524.44 1728.29,557.38C1732.52,590.31 1736.75,631.50 1740.97,631.50C1745.20,631.50 1749.43,557.38 1753.66,557.38C1757.89,557.38 1762.11,557.38 1766.34,557.38C1770.57,557.38 1774.80,582.13 1779.03,582.13C1783.25,582.13 1787.48,582.08 1791.71,557.38C1795.94,532.67 1800.17,433.88 1804.39,433.88C1808.62,433.88 1812.85,631.50 1817.08,631.50C1821.31,631.50 1825.54,631.50 1829.76,631.50C1833.99,631.50 1838.22,573.86 1842.45,557.38C1846.68,540.89 1850.90,532.62 1855.13,532.62C1859.36,532.62 1863.59,582.13 1867.82,582.13C1872.04,582.13 1876.27,532.72 1880.50,508.01" fill="none" stroke="#4c82ea" stroke-width="1.5"/>
<circle cx="507" cy="737.8" r="6" fill="#4c82ea"/>
<circle cx="608" cy="737.8" r="6" fill="#b571dc"/>
<circle cx="707.6" cy="737.8" r="6" fill="#eb9d55"/>
<circle cx="1452" cy="737.8" r="6" fill="#4c82ea"/>
  </svg>
<div class="t" style="left:263.48px;top:364.14px;font-size:12px;color:#d0d0d0;font-weight:400;letter-spacing:0.000px;-webkit-text-stroke:0.2px #d0d0d0;">1.2 s</div>
<div class="t" style="left:263.48px;top:396.24px;font-size:12px;color:#d0d0d0;font-weight:400;letter-spacing:0.000px;-webkit-text-stroke:0.2px #d0d0d0;">1.1 s</div>
<div class="t" style="left:273.49px;top:428.34px;font-size:12px;color:#d0d0d0;font-weight:400;letter-spacing:0.000px;-webkit-text-stroke:0.2px #d0d0d0;">1 s</div>
<div class="t" style="left:250.15px;top:460.44px;font-size:12px;color:#d0d0d0;font-weight:400;letter-spacing:0.000px;-webkit-text-stroke:0.2px #d0d0d0;">900 ms</div>
<div class="t" style="left:250.15px;top:492.54px;font-size:12px;color:#d0d0d0;font-weight:400;letter-spacing:0.000px;-webkit-text-stroke:0.2px #d0d0d0;">800 ms</div>
<div class="t" style="left:250.15px;top:524.64px;font-size:12px;color:#d0d0d0;font-weight:400;letter-spacing:0.000px;-webkit-text-stroke:0.2px #d0d0d0;">700 ms</div>
<div class="t" style="left:250.15px;top:556.74px;font-size:12px;color:#d0d0d0;font-weight:400;letter-spacing:0.000px;-webkit-text-stroke:0.2px #d0d0d0;">600 ms</div>
<div class="t" style="left:250.15px;top:588.84px;font-size:12px;color:#d0d0d0;font-weight:400;letter-spacing:0.000px;-webkit-text-stroke:0.2px #d0d0d0;">500 ms</div>
<div class="t" style="left:250.15px;top:620.94px;font-size:12px;color:#d0d0d0;font-weight:400;letter-spacing:0.000px;-webkit-text-stroke:0.2px #d0d0d0;">400 ms</div>
<div class="t" style="left:250.15px;top:653.04px;font-size:12px;color:#d0d0d0;font-weight:400;letter-spacing:0.000px;-webkit-text-stroke:0.2px #d0d0d0;">300 ms</div>
<div class="t" style="left:250.15px;top:685.14px;font-size:12px;color:#d0d0d0;font-weight:400;letter-spacing:0.000px;-webkit-text-stroke:0.2px #d0d0d0;">200 ms</div>
<div class="t" style="left:285.79px;top:703.84px;font-size:12px;color:#d0d0d0;font-weight:400;letter-spacing:0.000px;-webkit-text-stroke:0.2px #d0d0d0;">12:53</div>
<div class="t" style="left:397.79px;top:703.84px;font-size:12px;color:#d0d0d0;font-weight:400;letter-spacing:0.000px;-webkit-text-stroke:0.2px #d0d0d0;">13:02</div>
<div class="t" style="left:510.23px;top:703.84px;font-size:12px;color:#d0d0d0;font-weight:400;letter-spacing:0.000px;-webkit-text-stroke:0.2px #d0d0d0;">13:11</div>
<div class="t" style="left:621.78px;top:703.84px;font-size:12px;color:#d0d0d0;font-weight:400;letter-spacing:0.000px;-webkit-text-stroke:0.2px #d0d0d0;">13:20</div>
<div class="t" style="left:733.78px;top:703.84px;font-size:12px;color:#d0d0d0;font-weight:400;letter-spacing:0.000px;-webkit-text-stroke:0.2px #d0d0d0;">13:29</div>
<div class="t" style="left:845.78px;top:703.84px;font-size:12px;color:#d0d0d0;font-weight:400;letter-spacing:0.000px;-webkit-text-stroke:0.2px #d0d0d0;">13:38</div>
<div class="t" style="left:957.78px;top:703.84px;font-size:12px;color:#d0d0d0;font-weight:400;letter-spacing:0.000px;-webkit-text-stroke:0.2px #d0d0d0;">13:47</div>
<div class="t" style="left:1091.13px;top:388.44px;font-size:12px;color:#d0d0d0;font-weight:400;letter-spacing:0.000px;-webkit-text-stroke:0.2px #d0d0d0;">1.06 ops/s</div>
<div class="t" style="left:1091.13px;top:418.09px;font-size:12px;color:#d0d0d0;font-weight:400;letter-spacing:0.000px;-webkit-text-stroke:0.2px #d0d0d0;">1.04 ops/s</div>
<div class="t" style="left:1091.13px;top:447.74px;font-size:12px;color:#d0d0d0;font-weight:400;letter-spacing:0.000px;-webkit-text-stroke:0.2px #d0d0d0;">1.02 ops/s</div>
<div class="t" style="left:1107.81px;top:477.39px;font-size:12px;color:#d0d0d0;font-weight:400;letter-spacing:0.000px;-webkit-text-stroke:0.2px #d0d0d0;">1 ops/s</div>
<div class="t" style="left:1091.13px;top:507.04px;font-size:12px;color:#d0d0d0;font-weight:400;letter-spacing:0.000px;-webkit-text-stroke:0.2px #d0d0d0;">0.98 ops/s</div>
<div class="t" style="left:1091.13px;top:536.69px;font-size:12px;color:#d0d0d0;font-weight:400;letter-spacing:0.000px;-webkit-text-stroke:0.2px #d0d0d0;">0.96 ops/s</div>
<div class="t" style="left:1091.13px;top:566.34px;font-size:12px;color:#d0d0d0;font-weight:400;letter-spacing:0.000px;-webkit-text-stroke:0.2px #d0d0d0;">0.94 ops/s</div>
<div class="t" style="left:1091.13px;top:595.99px;font-size:12px;color:#d0d0d0;font-weight:400;letter-spacing:0.000px;-webkit-text-stroke:0.2px #d0d0d0;">0.92 ops/s</div>
<div class="t" style="left:1097.80px;top:625.64px;font-size:12px;color:#d0d0d0;font-weight:400;letter-spacing:0.000px;-webkit-text-stroke:0.2px #d0d0d0;">0.9 ops/s</div>
<div class="t" style="left:1091.13px;top:655.29px;font-size:12px;color:#d0d0d0;font-weight:400;letter-spacing:0.000px;-webkit-text-stroke:0.2px #d0d0d0;">0.88 ops/s</div>
<div class="t" style="left:1091.13px;top:684.94px;font-size:12px;color:#d0d0d0;font-weight:400;letter-spacing:0.000px;-webkit-text-stroke:0.2px #d0d0d0;">0.86 ops/s</div>
<div class="t" style="left:1142.48px;top:703.84px;font-size:12px;color:#d0d0d0;font-weight:400;letter-spacing:0.000px;-webkit-text-stroke:0.2px #d0d0d0;">12:54</div>
<div class="t" style="left:1256.68px;top:703.84px;font-size:12px;color:#d0d0d0;font-weight:400;letter-spacing:0.000px;-webkit-text-stroke:0.2px #d0d0d0;">13:03</div>
<div class="t" style="left:1370.88px;top:703.84px;font-size:12px;color:#d0d0d0;font-weight:400;letter-spacing:0.000px;-webkit-text-stroke:0.2px #d0d0d0;">13:12</div>
<div class="t" style="left:1485.09px;top:703.84px;font-size:12px;color:#d0d0d0;font-weight:400;letter-spacing:0.000px;-webkit-text-stroke:0.2px #d0d0d0;">13:21</div>
<div class="t" style="left:1599.28px;top:703.84px;font-size:12px;color:#d0d0d0;font-weight:400;letter-spacing:0.000px;-webkit-text-stroke:0.2px #d0d0d0;">13:30</div>
<div class="t" style="left:1713.48px;top:703.84px;font-size:12px;color:#d0d0d0;font-weight:400;letter-spacing:0.000px;-webkit-text-stroke:0.2px #d0d0d0;">13:39</div>
<div class="t" style="left:1827.69px;top:703.84px;font-size:12px;color:#d0d0d0;font-weight:400;letter-spacing:0.000px;-webkit-text-stroke:0.2px #d0d0d0;">13:48</div>
<div class="t" style="left:521.50px;top:731.55px;font-size:12.8px;color:#d0d0d0;font-weight:400;letter-spacing:0.005px;-webkit-text-stroke:0.2px #d0d0d0;">p99 Latency</div>
<div class="t" style="left:621.80px;top:731.55px;font-size:12.8px;color:#d0d0d0;font-weight:400;letter-spacing:0.045px;-webkit-text-stroke:0.2px #d0d0d0;">p95 Latency</div>
<div class="t" style="left:722.50px;top:731.55px;font-size:12.8px;color:#d0d0d0;font-weight:400;letter-spacing:0.045px;-webkit-text-stroke:0.2px #d0d0d0;">p50 Latency</div>
<div class="t" style="left:102.50px;top:22.98px;font-size:20px;color:#ececec;font-weight:700;letter-spacing:-0.695px;">SigNoz</div>
<div class="t" style="left:48.40px;top:82.36px;font-size:14px;color:#ffffff;font-weight:400;letter-spacing:0.231px;-webkit-text-stroke:0.2px #ffffff;">Services</div>
<div class="t" style="left:48.40px;top:126.36px;font-size:14px;color:#d9d9d9;font-weight:400;letter-spacing:0.206px;-webkit-text-stroke:0.2px #d9d9d9;">Traces</div>
<div class="t" style="left:48.40px;top:170.36px;font-size:14px;color:#d9d9d9;font-weight:400;letter-spacing:0.280px;-webkit-text-stroke:0.2px #d9d9d9;">Logs</div>
<div class="t" style="left:48.40px;top:214.36px;font-size:14px;color:#d9d9d9;font-weight:400;letter-spacing:0.179px;-webkit-text-stroke:0.2px #d9d9d9;">Dashboards</div>
<div class="t" style="left:48.40px;top:258.36px;font-size:14px;color:#d9d9d9;font-weight:400;letter-spacing:0.322px;-webkit-text-stroke:0.2px #d9d9d9;">Alerts</div>
<div class="t" style="left:48.40px;top:302.36px;font-size:14px;color:#d9d9d9;font-weight:400;letter-spacing:0.235px;-webkit-text-stroke:0.2px #d9d9d9;">Exceptions</div>
<div class="t" style="left:48.40px;top:346.36px;font-size:14px;color:#d9d9d9;font-weight:400;letter-spacing:0.219px;-webkit-text-stroke:0.2px #d9d9d9;">Service Map</div>
<div class="t" style="left:48.40px;top:390.36px;font-size:14px;color:#d9d9d9;font-weight:400;letter-spacing:0.116px;-webkit-text-stroke:0.2px #d9d9d9;">Usage Explorer</div>
<div class="t" style="left:48.40px;top:434.36px;font-size:14px;color:#d9d9d9;font-weight:400;letter-spacing:0.373px;-webkit-text-stroke:0.2px #d9d9d9;">Settings</div>
<div class="t" style="left:48.40px;top:478.36px;font-size:14px;color:#d9d9d9;font-weight:400;letter-spacing:0.291px;-webkit-text-stroke:0.2px #d9d9d9;">Get Started</div>
<div class="t" style="left:100.20px;top:857.16px;font-size:14px;color:#f0f0f0;font-weight:400;letter-spacing:-0.471px;-webkit-text-stroke:0.2px #f0f0f0;">v0.18.1</div>
<div class="t" style="left:100.20px;top:906.16px;font-size:14px;color:#f0f0f0;font-weight:400;letter-spacing:0.427px;-webkit-text-stroke:0.2px #f0f0f0;">Support</div>
<div class="t" style="left:221.00px;top:101.16px;font-size:14px;color:#8c8c8c;font-weight:400;letter-spacing:-0.315px;-webkit-text-stroke:0.2px #8c8c8c;">Home</div>
<div class="t" style="left:266.00px;top:101.16px;font-size:14px;color:#8c8c8c;font-weight:400;letter-spacing:0.000px;-webkit-text-stroke:0.2px #8c8c8c;">/</div>
<div class="t" style="left:278.60px;top:101.16px;font-size:14px;color:#8c8c8c;font-weight:400;letter-spacing:0.145px;-webkit-text-stroke:0.2px #8c8c8c;">Services</div>
<div class="t" style="left:341.00px;top:101.16px;font-size:14px;color:#8c8c8c;font-weight:400;letter-spacing:0.000px;-webkit-text-stroke:0.2px #8c8c8c;">/</div>
<div class="t" style="left:354.10px;top:101.16px;font-size:14px;color:#8c8c8c;font-weight:400;letter-spacing:0.404px;-webkit-text-stroke:0.2px #8c8c8c;">customer</div>
<div class="t" style="left:1740.40px;top:106.16px;font-size:14px;color:#e0e0e0;font-weight:400;letter-spacing:0.055px;-webkit-text-stroke:0.2px #e0e0e0;">Last 1 hour</div>
<div class="t" style="left:1746.40px;top:133.16px;font-size:14px;color:#e0e0e0;font-weight:400;letter-spacing:0.269px;-webkit-text-stroke:0.2px #e0e0e0;">Last refresh - 4 mins ago</div>
<div class="t" style="left:239.80px;top:206.16px;font-size:14px;color:#5a5a5a;font-weight:400;letter-spacing:0.221px;-webkit-text-stroke:0.2px #5a5a5a;">Search and Filter based on resource attributes.</div>
<div class="t" style="left:220.20px;top:265.16px;font-size:14px;color:#4a78e0;font-weight:400;letter-spacing:0.297px;-webkit-text-stroke:0.2px #4a78e0;">Overview Metrics</div>
<div class="t" style="left:364.30px;top:265.16px;font-size:14px;color:#e8e8e8;font-weight:400;letter-spacing:0.058px;-webkit-text-stroke:0.2px #e8e8e8;">Database Calls</div>
<div class="t" style="left:492.40px;top:265.16px;font-size:14px;color:#e8e8e8;font-weight:400;letter-spacing:0.064px;-webkit-text-stroke:0.2px #e8e8e8;">External Calls</div>
<div class="t" style="left:618.75px;top:342.16px;font-size:14px;color:#e8e8e8;font-weight:400;letter-spacing:0.244px;-webkit-text-stroke:0.2px #e8e8e8;">Latency</div>
<div class="t" style="left:1445.25px;top:342.16px;font-size:14px;color:#e8e8e8;font-weight:400;letter-spacing:0.114px;-webkit-text-stroke:0.2px #e8e8e8;">Rate (ops/s)</div>
<div class="t" style="left:589.85px;top:819.16px;font-size:14px;color:#e8e8e8;font-weight:400;letter-spacing:0.113px;-webkit-text-stroke:0.2px #e8e8e8;">Error Percentage</div>
<div class="t" style="left:1466.00px;top:731.55px;font-size:12.8px;color:#d0d0d0;font-weight:400;letter-spacing:-0.068px;-webkit-text-stroke:0.2px #d0d0d0;">Operations</div>
<div class="t" style="left:1102.90px;top:835.16px;font-size:14px;color:#e8e8e8;font-weight:400;letter-spacing:0.146px;-webkit-text-stroke:0.2px #e8e8e8;">Key Operations</div>
<div class="t" style="left:1102.90px;top:900.16px;font-size:14px;color:#f0f0f0;font-weight:700;letter-spacing:0.290px;">Name</div>
<div class="t" style="left:1367.80px;top:900.16px;font-size:14px;color:#f0f0f0;font-weight:700;letter-spacing:0.201px;">P50 (in ms)</div>
<div class="t" style="left:1500.00px;top:900.16px;font-size:14px;color:#f0f0f0;font-weight:700;letter-spacing:0.201px;">P95 (in ms)</div>
<div class="t" style="left:1632.30px;top:900.16px;font-size:14px;color:#f0f0f0;font-weight:700;letter-spacing:0.201px;">P99 (in ms)</div>
<div class="t" style="left:1765.00px;top:889.16px;font-size:14px;color:#f0f0f0;font-weight:700;letter-spacing:0.000px;">Number of</div>
<div class="t" style="left:1765.00px;top:911.16px;font-size:14px;color:#f0f0f0;font-weight:700;letter-spacing:0.000px;">Calls</div>
<div class="t" style="left:1103.00px;top:965.96px;font-size:14px;color:#4a78e0;font-weight:400;letter-spacing:0.125px;-webkit-text-stroke:0.2px #4a78e0;">HTTP GET /customer</div>
<div class="t" style="left:1367.80px;top:965.96px;font-size:14px;color:#e8e8e8;font-weight:400;letter-spacing:0.144px;-webkit-text-stroke:0.2px #e8e8e8;">311.62</div>
<div class="t" style="left:1500.00px;top:965.96px;font-size:14px;color:#e8e8e8;font-weight:400;letter-spacing:0.136px;-webkit-text-stroke:0.2px #e8e8e8;">585.58</div>
<div class="t" style="left:1632.30px;top:965.96px;font-size:14px;color:#e8e8e8;font-weight:400;letter-spacing:0.136px;-webkit-text-stroke:0.2px #e8e8e8;">779.75</div>
<div class="t" style="left:1765.00px;top:965.96px;font-size:14px;color:#e8e8e8;font-weight:400;letter-spacing:1.285px;-webkit-text-stroke:0.2px #e8e8e8;">3306</div>

  <!-- header right icons -->
  <svg class="full" width="1932" height="1012">
    <circle cx="1720.8" cy="33.7" r="12" fill="none" stroke="#fff" stroke-width="2"/>
    <path d="M1717.5,31.2 a3.5,3.5 0 1 1 5.3,3 c-1,0.7 -1.8,1.3 -1.8,2.9" fill="none" stroke="#fff" stroke-width="1.8"/>
    <circle cx="1721" cy="40.4" r="1.15" fill="#fff"/>
    <path d="M1744,30 h10 l-5,6 z" fill="#fff"/>
    <rect x="1764" y="23" width="48" height="22" rx="11" fill="#3a66d9"/>
    <circle cx="1801" cy="34" r="9" fill="#fff"/>
    <path d="M1784.3,27 A6.9,6.9 0 1 0 1784.3,40.6 A2.6,6.8 0 0 1 1784.3,27 z" fill="#efd45e"/><circle cx="1780.3" cy="30.5" r="0.9" fill="#8a7a30"/><circle cx="1779.8" cy="35.2" r="0.8" fill="#8a7a30"/>
    <circle cx="1836" cy="33.7" r="16" fill="#5b5b5b"/>
    <path d="M1862,30 h10 l-5,6 z" fill="#fff"/>
    <!-- refresh icon -->
    <path d="M1864.5,111 A7,7 0 0 0 1851,112" fill="none" stroke="#fff" stroke-width="1.3"/>
    <path d="M1851.3,115 A7,7 0 0 0 1864.8,114" fill="none" stroke="#fff" stroke-width="1.3"/>
    <path d="M1863,108 l2.5,3.5 l-3.5,0.5 z" fill="#fff"/>
    <path d="M1852.5,118 l-2.5,-3.5 l3.5,-0.5 z" fill="#fff"/>
    <path d="M1887.2,110 h9.5 l-4.75,5.8 z" fill="#fff"/>
    <!-- date chevron -->
    <path d="M1819.2,109.6 l4.8,5.8 l4.8,-5.8" fill="none" stroke="#6a6a6a" stroke-width="1"/>
  </svg>
  <div class="t" style="left:1830.5px;top:26.8px;font-size:14px;color:#fff">H</div>

  <!-- sidebar icons -->
  <svg class="full" width="1932" height="1012">
    <g stroke="#fff" fill="none" stroke-width="1.2">
      <path d="M25.5,83 V94.5 H37"/>
      <path d="M28.5,92 v-2 M31,92 v-5 M33.5,92 v-4 M36,92 v-6"/>
    </g>
    <g stroke="#cfcfcf" fill="none" stroke-width="1.3">
      <path d="M25,127.5 h12 M25,133 h12 M25,138.5 h12"/>
      <path d="M25,172 h8 M25,175.4 h12.5 M25,178.7 h8.5 M25,182.2 h12.5"/>
    </g>
    <g fill="#cfcfcf">
      <path d="M24.2,222 a6.8,6.8 0 1 1 13.6,0 a6.8,6.8 0 0 1 -1.2,3.9 h-11.2 a6.8,6.8 0 0 1 -1.2,-3.9z"/>
    </g>
    <g stroke="#1f1f1f" fill="none" stroke-width="1.2">
      <path d="M31,222 l3,-3.5"/>
    </g>
    <g fill="#1f1f1f">
      <circle cx="31" cy="217" r="0.7"/><circle cx="27.3" cy="218.6" r="0.7"/><circle cx="26.3" cy="222.3" r="0.7"/><circle cx="35.7" cy="222.3" r="0.7"/><circle cx="31" cy="222" r="1.2"/>
    </g>
    <g stroke="#cfcfcf" fill="none" stroke-width="1.1">
      <path d="M26.4,269.6 v-3.6 a4.6,4.6 0 0 1 9.2,0 v3.6 z M24.8,271.6 h12.4 M31,257.6 v1.4 M25.6,259.8 l1,1 M36.4,259.8 l-1,1 M28.6,268 v-2 a2.4,2.4 0 0 1 2.4,-2.4"/>
      <path d="M28.3,305.3 a2.7,2.9 0 0 1 5.4,0 M27.2,305.5 h7.6 v4.8 a3.8,5 0 0 1 -7.6,0 z M24.3,306.2 h2.9 M34.8,306.2 h2.9 M24.3,310.2 h2.9 M34.8,310.2 h2.9 M24.8,314.8 l2.5,-1.8 M37.2,314.8 l-2.5,-1.8 M25.3,302.6 l2,1.6 M36.7,302.6 l-2,1.6"/>
      <circle cx="31" cy="348.4" r="1.7"/>
      <circle cx="25.9" cy="357.4" r="1.7"/>
      <circle cx="36.1" cy="357.4" r="1.7"/>
      <circle cx="31" cy="354.2" r="2.3"/>
      <path d="M31,350.1 v1.8 M29.2,355.6 l-1.9,1 M32.8,355.6 l1.9,1"/>
      <path d="M25,391 v12 h12 M26.5,400 l3,-4 l3,2.5 l4,-5"/>
      <circle cx="31" cy="441" r="2.2"/>
      <path d="M31,434.5 l1.5,0 l0.6,1.8 l1.7,0.8 l1.7,-0.9 l1.1,1.1 l-0.9,1.7 l0.8,1.7 l1.8,0.6 v1.5 l-1.8,0.6 l-0.8,1.7 l0.9,1.7 l-1.1,1.1 l-1.7,-0.9 l-1.7,0.8 l-0.6,1.8 h-1.5 l-0.6,-1.8 l-1.7,-0.8 l-1.7,0.9 l-1.1,-1.1 l0.9,-1.7 l-0.8,-1.7 l-1.8,-0.6 v-1.5 l1.8,-0.6 l0.8,-1.7 l-0.9,-1.7 l1.1,-1.1 l1.7,0.9 l1.7,-0.8 z"/>
      <path d="M25,491 l2.5,-2.5 M37,479 l-2.5,2.5 M28,486 l-1,1 a2.5,2.5 0 0 0 3.5,3.5 l1,-1 z M34,484 l1,-1 a2.5,2.5 0 0 0 -3.5,-3.5 l-1,1 z M30,484 l-1,1 M32,486 l-1,1"/>
    </g>
    <!-- version check -->
    <circle cx="70" cy="864" r="12.8" fill="none" stroke="#e3edb8" stroke-width="2"/>
    <path d="M64.5,864 l4,4 l7,-7.5" fill="none" stroke="#e3edb8" stroke-width="1.8"/>
    <!-- slack -->
    <g stroke-linecap="round" stroke-width="5" transform="translate(70,913)">
      <path d="M-11.5,-3.2 H-3.5" stroke="#55b9e6"/>
      <path d="M-3.3,-11.5 v0.01" stroke="#55b9e6"/>
      <path d="M3.2,-11.5 V-3.5" stroke="#45aa74"/>
      <path d="M11.5,-3.3 h0.01" stroke="#45aa74"/>
      <path d="M11.5,3.2 H3.5" stroke="#e3b248"/>
      <path d="M3.3,11.5 v0.01" stroke="#e3b248"/>
      <path d="M-3.2,11.5 V3.5" stroke="#d9416c"/>
      <path d="M-11.5,3.3 h0.01" stroke="#d9416c"/>
    </g>
    <!-- collapse chevron -->
    <path d="M108,972.5 l-6,5.5 l6,5.5" fill="none" stroke="#e0e0e0" stroke-width="1.3"/>
    <!-- sort icons -->
    <g fill="#707070"><path d="M1458,905.6 l4,-5 l4,5 z M1458,907.6 l4,5.6 l4,-5.6 z"/><path d="M1590,905.6 l4,-5 l4,5 z M1590,907.6 l4,5.6 l4,-5.6 z"/><path d="M1723,905.6 l4,-5 l4,5 z M1723,907.6 l4,5.6 l4,-5.6 z"/><path d="M1855,905.6 l4,-5 l4,5 z M1855,907.6 l4,5.6 l4,-5.6 z"/></g>
  </svg>
</div>
<svg class="full" width="1932" height="1012"><rect x="0" y="0" width="1" height="1" fill="#fff" fill-opacity="0.44"/><rect x="0" y="1010" width="2" height="1" fill="#fff" fill-opacity="0.85"/><rect x="1" y="0" width="1" height="1" fill="#fff" fill-opacity="0.54"/><rect x="1" y="1009" width="2" height="1" fill="#fff" fill-opacity="0.87"/><rect x="7" y="0" width="1" height="1" fill="#fff" fill-opacity="0.73"/><rect x="7" y="1010" width="1" height="1" fill="#fff" fill-opacity="0.64"/><rect x="10" y="1010" width="2" height="1" fill="#fff" fill-opacity="0.52"/><rect x="13" y="1010" width="1" height="2" fill="#fff" fill-opacity="0.71"/><rect x="15" y="1010" width="1" height="2" fill="#fff" fill-opacity="0.45"/><rect x="16" y="1010" width="1" height="2" fill="#fff" fill-opacity="0.83"/><rect x="19" y="1" width="1" height="1" fill="#fff" fill-opacity="0.71"/><rect x="19" y="1010" width="1" height="2" fill="#fff" fill-opacity="0.55"/><rect x="22" y="1" width="2" height="2" fill="#fff" fill-opacity="0.60"/><rect x="22" y="1010" width="2" height="2" fill="#fff" fill-opacity="0.34"/><rect x="23" y="1010" width="1" height="1" fill="#fff" fill-opacity="0.74"/><rect x="27" y="0" width="2" height="2" fill="#fff" fill-opacity="0.41"/><rect x="27" y="1009" width="2" height="1" fill="#fff" fill-opacity="0.60"/><rect x="28" y="1009" width="1" height="2" fill="#fff" fill-opacity="0.85"/><rect x="30" y="0" width="1" height="2" fill="#fff" fill-opacity="0.93"/><rect x="33" y="0" width="1" height="2" fill="#fff" fill-opacity="0.97"/><rect x="33" y="1009" width="1" height="1" fill="#fff" fill-opacity="0.70"/><rect x="34" y="1" width="1" height="2" fill="#fff" fill-opacity="0.57"/><rect x="34" y="1010" width="1" height="2" fill="#fff" fill-opacity="0.87"/><rect x="40" y="1010" width="2" height="2" fill="#fff" fill-opacity="0.54"/><rect x="42" y="1" width="1" height="1" fill="#fff" fill-opacity="0.51"/><rect x="44" y="0" width="2" height="1" fill="#fff" fill-opacity="0.46"/><rect x="44" y="1010" width="1" height="2" fill="#fff" fill-opacity="0.67"/><rect x="49" y="0" width="1" height="2" fill="#fff" fill-opacity="1.00"/><rect x="49" y="1010" width="1" height="1" fill="#fff" fill-opacity="0.39"/><rect x="52" y="0" width="1" height="1" fill="#fff" fill-opacity="0.71"/><rect x="52" y="1010" width="1" height="1" fill="#fff" fill-opacity="0.71"/><rect x="53" y="1010" width="1" height="2" fill="#fff" fill-opacity="0.61"/><rect x="54" y="0" width="2" height="2" fill="#fff" fill-opacity="0.78"/><rect x="58" y="1010" width="1" height="1" fill="#fff" fill-opacity="0.89"/><rect x="60" y="0" width="2" height="2" fill="#fff" fill-opacity="0.67"/><rect x="62" y="1009" width="1" height="1" fill="#fff" fill-opacity="0.58"/><rect x="64" y="1" width="2" height="1" fill="#fff" fill-opacity="0.69"/><rect x="67" y="1" width="1" height="2" fill="#fff" fill-opacity="0.87"/><rect x="69" y="1010" width="1" height="1" fill="#fff" fill-opacity="0.78"/><rect x="72" y="0" width="2" height="1" fill="#fff" fill-opacity="0.83"/><rect x="72" y="1009" width="1" height="1" fill="#fff" fill-opacity="0.65"/><rect x="74" y="1010" width="1" height="2" fill="#fff" fill-opacity="0.39"/><rect x="77" y="0" width="2" height="1" fill="#fff" fill-opacity="0.72"/><rect x="79" y="1009" width="1" height="2" fill="#fff" fill-opacity="0.43"/><rect x="82" y="1" width="1" height="2" fill="#fff" fill-opacity="0.73"/><rect x="83" y="1010" width="2" height="2" fill="#fff" fill-opacity="0.80"/><rect x="86" y="0" width="2" height="1" fill="#fff" fill-opacity="0.92"/><rect x="89" y="0" width="1" height="1" fill="#fff" fill-opacity="0.68"/><rect x="92" y="1" width="2" height="2" fill="#fff" fill-opacity="0.87"/><rect x="92" y="1010" width="1" height="1" fill="#fff" fill-opacity="0.41"/><rect x="93" y="1010" width="1" height="1" fill="#fff" fill-opacity="0.57"/><rect x="97" y="1010" width="1" height="1" fill="#fff" fill-opacity="0.72"/><rect x="100" y="1009" width="1" height="2" fill="#fff" fill-opacity="0.49"/><rect x="103" y="0" width="1" height="2" fill="#fff" fill-opacity="0.87"/><rect x="106" y="0" width="1" height="1" fill="#fff" fill-opacity="0.85"/><rect x="106" y="1010" width="1" height="1" fill="#fff" fill-opacity="0.40"/><rect x="108" y="1010" width="1" height="2" fill="#fff" fill-opacity="0.49"/><rect x="111" y="0" width="2" height="2" fill="#fff" fill-opacity="0.66"/><rect x="111" y="1010" width="2" height="2" fill="#fff" fill-opacity="0.61"/><rect x="112" y="0" width="1" height="1" fill="#fff" fill-opacity="0.56"/><rect x="112" y="1009" width="1" height="1" fill="#fff" fill-opacity="0.79"/><rect x="115" y="1009" width="2" height="2" fill="#fff" fill-opacity="0.72"/><rect x="116" y="1" width="1" height="2" fill="#fff" fill-opacity="0.94"/><rect x="116" y="1009" width="2" height="1" fill="#fff" fill-opacity="0.78"/><rect x="117" y="1010" width="1" height="2" fill="#fff" fill-opacity="0.31"/><rect x="120" y="0" width="2" height="1" fill="#fff" fill-opacity="0.43"/><rect x="121" y="1009" width="1" height="2" fill="#fff" fill-opacity="0.68"/><rect x="124" y="1010" width="2" height="1" fill="#fff" fill-opacity="0.46"/><rect x="125" y="1009" width="2" height="1" fill="#fff" fill-opacity="0.61"/><rect x="126" y="1010" width="1" height="2" fill="#fff" fill-opacity="0.63"/><rect x="128" y="1009" width="1" height="2" fill="#fff" fill-opacity="0.42"/><rect x="131" y="1010" width="1" height="1" fill="#fff" fill-opacity="0.31"/><rect x="134" y="1009" width="1" height="1" fill="#fff" fill-opacity="0.70"/><rect x="138" y="1" width="1" height="1" fill="#fff" fill-opacity="0.68"/><rect x="138" y="1010" width="1" height="2" fill="#fff" fill-opacity="0.52"/><rect x="140" y="1009" width="1" height="2" fill="#fff" fill-opacity="0.43"/><rect x="141" y="0" width="1" height="2" fill="#fff" fill-opacity="0.57"/><rect x="142" y="0" width="1" height="2" fill="#fff" fill-opacity="0.89"/><rect x="142" y="1010" width="1" height="2" fill="#fff" fill-opacity="0.31"/><rect x="144" y="1010" width="1" height="2" fill="#fff" fill-opacity="0.76"/><rect x="147" y="1010" width="2" height="1" fill="#fff" fill-opacity="0.33"/><rect x="153" y="1010" width="2" height="1" fill="#fff" fill-opacity="0.80"/><rect x="159" y="1009" width="1" height="2" fill="#fff" fill-opacity="0.88"/><rect x="161" y="1010" width="1" height="1" fill="#fff" fill-opacity="0.59"/><rect x="162" y="0" width="2" height="1" fill="#fff" fill-opacity="0.80"/><rect x="162" y="1010" width="1" height="2" fill="#fff" fill-opacity="0.79"/><rect x="164" y="0" width="1" height="2" fill="#fff" fill-opacity="0.70"/><rect x="164" y="1010" width="2" height="2" fill="#fff" fill-opacity="0.76"/><rect x="167" y="1010" width="1" height="2" fill="#fff" fill-opacity="0.45"/><rect x="171" y="0" width="1" height="2" fill="#fff" fill-opacity="0.98"/><rect x="171" y="1009" width="2" height="2" fill="#fff" fill-opacity="0.47"/><rect x="174" y="0" width="1" height="1" fill="#fff" fill-opacity="1.00"/><rect x="174" y="1010" width="1" height="2" fill="#fff" fill-opacity="0.31"/><rect x="176" y="1" width="1" height="2" fill="#fff" fill-opacity="0.63"/><rect x="177" y="0" width="1" height="2" fill="#fff" fill-opacity="0.97"/><rect x="177" y="1010" width="2" height="2" fill="#fff" fill-opacity="0.83"/><rect x="180" y="0" width="1" height="2" fill="#fff" fill-opacity="0.41"/><rect x="180" y="1010" width="2" height="2" fill="#fff" fill-opacity="0.54"/><rect x="183" y="0" width="1" height="2" fill="#fff" fill-opacity="0.47"/><rect x="183" y="1010" width="1" height="2" fill="#fff" fill-opacity="0.37"/><rect x="186" y="0" width="1" height="2" fill="#fff" fill-opacity="1.00"/><rect x="186" y="1010" width="1" height="2" fill="#fff" fill-opacity="0.81"/><rect x="188" y="1" width="1" height="1" fill="#fff" fill-opacity="0.55"/><rect x="188" y="1010" width="1" height="1" fill="#fff" fill-opacity="0.76"/><rect x="193" y="1" width="2" height="1" fill="#fff" fill-opacity="0.83"/><rect x="193" y="1010" width="1" height="2" fill="#fff" fill-opacity="0.67"/><rect x="194" y="1009" width="2" height="1" fill="#fff" fill-opacity="0.40"/><rect x="196" y="0" width="1" height="2" fill="#fff" fill-opacity="0.64"/><rect x="196" y="1010" width="2" height="2" fill="#fff" fill-opacity="0.37"/><rect x="199" y="0" width="2" height="2" fill="#fff" fill-opacity="0.73"/><rect x="199" y="1010" width="1" height="2" fill="#fff" fill-opacity="0.38"/><rect x="200" y="0" width="1" height="1" fill="#fff" fill-opacity="0.59"/><rect x="200" y="1010" width="1" height="1" fill="#fff" fill-opacity="0.75"/><rect x="202" y="1" width="2" height="1" fill="#fff" fill-opacity="0.63"/><rect x="202" y="1009" width="1" height="2" fill="#fff" fill-opacity="0.64"/><rect x="204" y="1" width="2" height="1" fill="#fff" fill-opacity="0.46"/><rect x="206" y="0" width="1" height="2" fill="#fff" fill-opacity="0.91"/><rect x="207" y="0" width="2" height="2" fill="#fff" fill-opacity="0.98"/><rect x="207" y="1009" width="1" height="2" fill="#fff" fill-opacity="0.88"/><rect x="208" y="1009" width="2" height="1" fill="#fff" fill-opacity="0.86"/><rect x="213" y="0" width="1" height="1" fill="#fff" fill-opacity="0.54"/><rect x="219" y="1" width="1" height="1" fill="#fff" fill-opacity="0.46"/><rect x="219" y="1010" width="1" height="2" fill="#fff" fill-opacity="0.46"/><rect x="222" y="1" width="1" height="2" fill="#fff" fill-opacity="0.57"/><rect x="222" y="1009" width="1" height="1" fill="#fff" fill-opacity="0.63"/><rect x="225" y="0" width="1" height="2" fill="#fff" fill-opacity="0.45"/><rect x="225" y="1010" width="1" height="1" fill="#fff" fill-opacity="0.60"/><rect x="228" y="0" width="1" height="2" fill="#fff" fill-opacity="0.52"/><rect x="231" y="1010" width="1" height="2" fill="#fff" fill-opacity="0.76"/><rect x="232" y="0" width="1" height="2" fill="#fff" fill-opacity="0.47"/><rect x="235" y="0" width="1" height="2" fill="#fff" fill-opacity="0.95"/><rect x="235" y="1010" width="1" height="2" fill="#fff" fill-opacity="0.33"/><rect x="236" y="1009" width="2" height="1" fill="#fff" fill-opacity="0.41"/><rect x="241" y="0" width="1" height="2" fill="#fff" fill-opacity="0.51"/><rect x="244" y="1010" width="2" height="2" fill="#fff" fill-opacity="0.80"/><rect x="246" y="0" width="1" height="1" fill="#fff" fill-opacity="0.57"/><rect x="246" y="1009" width="2" height="1" fill="#fff" fill-opacity="0.53"/><rect x="248" y="1009" width="2" height="2" fill="#fff" fill-opacity="0.42"/><rect x="251" y="1010" width="2" height="2" fill="#fff" fill-opacity="0.32"/><rect x="253" y="1" width="1" height="1" fill="#fff" fill-opacity="0.63"/><rect x="253" y="1009" width="1" height="1" fill="#fff" fill-opacity="0.75"/><rect x="256" y="0" width="1" height="1" fill="#fff" fill-opacity="0.56"/><rect x="258" y="1010" width="2" height="1" fill="#fff" fill-opacity="0.31"/><rect x="259" y="1" width="1" height="2" fill="#fff" fill-opacity="0.87"/><rect x="261" y="0" width="1" height="1" fill="#fff" fill-opacity="0.88"/><rect x="266" y="1010" width="1" height="1" fill="#fff" fill-opacity="0.54"/><rect x="267" y="0" width="2" height="1" fill="#fff" fill-opacity="0.69"/><rect x="267" y="1009" width="1" height="1" fill="#fff" fill-opacity="0.89"/><rect x="269" y="1010" width="1" height="2" fill="#fff" fill-opacity="0.40"/><rect x="270" y="1" width="2" height="1" fill="#fff" fill-opacity="0.85"/><rect x="275" y="1" width="1" height="2" fill="#fff" fill-opacity="0.55"/><rect x="275" y="1010" width="1" height="1" fill="#fff" fill-opacity="0.45"/><rect x="276" y="1" width="1" height="2" fill="#fff" fill-opacity="0.44"/><rect x="276" y="1009" width="2" height="1" fill="#fff" fill-opacity="0.69"/><rect x="278" y="0" width="1" height="2" fill="#fff" fill-opacity="0.42"/><rect x="278" y="1009" width="1" height="1" fill="#fff" fill-opacity="0.66"/><rect x="281" y="0" width="1" height="1" fill="#fff" fill-opacity="0.67"/><rect x="281" y="1010" width="1" height="1" fill="#fff" fill-opacity="0.68"/><rect x="284" y="1010" width="1" height="1" fill="#fff" fill-opacity="0.33"/><rect x="286" y="1" width="2" height="1" fill="#fff" fill-opacity="0.89"/><rect x="288" y="1010" width="1" height="1" fill="#fff" fill-opacity="0.32"/><rect x="290" y="0" width="1" height="1" fill="#fff" fill-opacity="0.88"/><rect x="291" y="1009" width="1" height="2" fill="#fff" fill-opacity="0.55"/><rect x="293" y="1009" width="1" height="2" fill="#fff" fill-opacity="0.55"/><rect x="296" y="1010" width="1" height="1" fill="#fff" fill-opacity="0.56"/><rect x="297" y="0" width="1" height="2" fill="#fff" fill-opacity="0.68"/><rect x="297" y="1009" width="1" height="1" fill="#fff" fill-opacity="0.68"/><rect x="299" y="1" width="1" height="1" fill="#fff" fill-opacity="0.49"/><rect x="299" y="1010" width="1" height="1" fill="#fff" fill-opacity="0.37"/><rect x="302" y="0" width="1" height="2" fill="#fff" fill-opacity="0.43"/><rect x="304" y="1" width="2" height="1" fill="#fff" fill-opacity="0.78"/><rect x="307" y="0" width="1" height="1" fill="#fff" fill-opacity="0.74"/><rect x="307" y="1010" width="1" height="2" fill="#fff" fill-opacity="0.52"/><rect x="308" y="1" width="1" height="1" fill="#fff" fill-opacity="0.93"/><rect x="311" y="0" width="1" height="2" fill="#fff" fill-opacity="0.76"/><rect x="311" y="1010" width="1" height="2" fill="#fff" fill-opacity="0.48"/><rect x="312" y="1" width="1" height="2" fill="#fff" fill-opacity="0.70"/><rect x="312" y="1009" width="2" height="2" fill="#fff" fill-opacity="0.58"/><rect x="318" y="0" width="1" height="2" fill="#fff" fill-opacity="0.62"/><rect x="321" y="0" width="1" height="1" fill="#fff" fill-opacity="0.45"/><rect x="324" y="0" width="2" height="2" fill="#fff" fill-opacity="0.79"/><rect x="328" y="1009" width="1" height="2" fill="#fff" fill-opacity="0.87"/><rect x="330" y="0" width="2" height="2" fill="#fff" fill-opacity="0.50"/><rect x="332" y="1010" width="2" height="2" fill="#fff" fill-opacity="0.42"/><rect x="334" y="1010" width="1" height="1" fill="#fff" fill-opacity="0.41"/><rect x="335" y="1010" width="1" height="1" fill="#fff" fill-opacity="0.78"/><rect x="337" y="1" width="1" height="2" fill="#fff" fill-opacity="0.98"/><rect x="337" y="1010" width="2" height="1" fill="#fff" fill-opacity="0.45"/><rect x="340" y="1010" width="1" height="2" fill="#fff" fill-opacity="0.89"/><rect x="343" y="0" width="1" height="2" fill="#fff" fill-opacity="0.54"/><rect x="344" y="1" width="1" height="2" fill="#fff" fill-opacity="0.78"/><rect x="350" y="0" width="1" height="1" fill="#fff" fill-opacity="0.57"/><rect x="352" y="0" width="1" height="2" fill="#fff" fill-opacity="0.54"/><rect x="353" y="1" width="1" height="2" fill="#fff" fill-opacity="0.46"/><rect x="353" y="1009" width="1" height="2" fill="#fff" fill-opacity="0.65"/><rect x="354" y="0" width="1" height="1" fill="#fff" fill-opacity="0.41"/><rect x="357" y="0" width="1" height="1" fill="#fff" fill-opacity="0.92"/><rect x="360" y="1010" width="2" height="2" fill="#fff" fill-opacity="0.66"/><rect x="363" y="1009" width="1" height="1" fill="#fff" fill-opacity="0.62"/><rect x="365" y="0" width="1" height="1" fill="#fff" fill-opacity="0.41"/><rect x="365" y="1009" width="1" height="2" fill="#fff" fill-opacity="0.42"/><rect x="370" y="1010" width="1" height="2" fill="#fff" fill-opacity="0.68"/><rect x="374" y="0" width="2" height="2" fill="#fff" fill-opacity="0.45"/><rect x="375" y="0" width="1" height="1" fill="#fff" fill-opacity="0.79"/><rect x="375" y="1010" width="2" height="2" fill="#fff" fill-opacity="0.73"/><rect x="380" y="1010" width="1" height="1" fill="#fff" fill-opacity="0.35"/><rect x="383" y="0" width="1" height="1" fill="#fff" fill-opacity="0.97"/><rect x="385" y="0" width="1" height="1" fill="#fff" fill-opacity="0.63"/><rect x="391" y="1" width="2" height="1" fill="#fff" fill-opacity="0.91"/><rect x="391" y="1010" width="1" height="2" fill="#fff" fill-opacity="0.77"/><rect x="393" y="1009" width="1" height="1" fill="#fff" fill-opacity="0.32"/><rect x="394" y="1009" width="2" height="1" fill="#fff" fill-opacity="0.32"/><rect x="398" y="0" width="1" height="2" fill="#fff" fill-opacity="0.52"/><rect x="401" y="1010" width="1" height="1" fill="#fff" fill-opacity="0.45"/><rect x="402" y="0" width="2" height="1" fill="#fff" fill-opacity="0.90"/><rect x="404" y="0" width="1" height="1" fill="#fff" fill-opacity="0.58"/><rect x="404" y="1010" width="1" height="2" fill="#fff" fill-opacity="0.45"/><rect x="406" y="0" width="1" height="2" fill="#fff" fill-opacity="0.91"/><rect x="407" y="1010" width="1" height="2" fill="#fff" fill-opacity="0.58"/><rect x="408" y="0" width="2" height="1" fill="#fff" fill-opacity="0.74"/><rect x="408" y="1010" width="1" height="1" fill="#fff" fill-opacity="0.47"/><rect x="409" y="0" width="1" height="2" fill="#fff" fill-opacity="0.82"/><rect x="411" y="1" width="1" height="1" fill="#fff" fill-opacity="0.57"/><rect x="411" y="1010" width="1" height="2" fill="#fff" fill-opacity="0.40"/><rect x="414" y="1010" width="2" height="1" fill="#fff" fill-opacity="0.68"/><rect x="416" y="0" width="2" height="1" fill="#fff" fill-opacity="0.65"/><rect x="418" y="0" width="1" height="1" fill="#fff" fill-opacity="0.63"/><rect x="419" y="1010" width="2" height="1" fill="#fff" fill-opacity="0.51"/><rect x="421" y="0" width="2" height="2" fill="#fff" fill-opacity="0.50"/><rect x="421" y="1010" width="2" height="1" fill="#fff" fill-opacity="0.38"/><rect x="426" y="0" width="2" height="1" fill="#fff" fill-opacity="0.83"/><rect x="429" y="1" width="1" height="1" fill="#fff" fill-opacity="0.54"/><rect x="432" y="1" width="1" height="1" fill="#fff" fill-opacity="0.63"/><rect x="434" y="1009" width="1" height="1" fill="#fff" fill-opacity="0.47"/><rect x="436" y="0" width="1" height="2" fill="#fff" fill-opacity="0.82"/><rect x="436" y="1010" width="1" height="2" fill="#fff" fill-opacity="0.31"/><rect x="438" y="1010" width="1" height="2" fill="#fff" fill-opacity="0.72"/><rect x="441" y="1009" width="2" height="1" fill="#fff" fill-opacity="0.71"/><rect x="444" y="0" width="1" height="2" fill="#fff" fill-opacity="0.78"/><rect x="444" y="1010" width="1" height="2" fill="#fff" fill-opacity="0.73"/><rect x="447" y="0" width="1" height="2" fill="#fff" fill-opacity="0.41"/><rect x="451" y="1009" width="1" height="2" fill="#fff" fill-opacity="0.84"/><rect x="452" y="1" width="1" height="1" fill="#fff" fill-opacity="0.83"/><rect x="453" y="0" width="2" height="2" fill="#fff" fill-opacity="0.72"/><rect x="456" y="0" width="2" height="2" fill="#fff" fill-opacity="0.65"/><rect x="457" y="1010" width="1" height="2" fill="#fff" fill-opacity="0.68"/><rect x="459" y="0" width="1" height="1" fill="#fff" fill-opacity="0.45"/><rect x="462" y="1010" width="1" height="1" fill="#fff" fill-opacity="0.48"/><rect x="464" y="1009" width="1" height="2" fill="#fff" fill-opacity="0.43"/><rect x="465" y="1010" width="1" height="2" fill="#fff" fill-opacity="0.69"/><rect x="468" y="0" width="1" height="2" fill="#fff" fill-opacity="0.68"/><rect x="468" y="1010" width="2" height="1" fill="#fff" fill-opacity="0.77"/><rect x="470" y="0" width="1" height="2" fill="#fff" fill-opacity="0.81"/><rect x="473" y="0" width="2" height="2" fill="#fff" fill-opacity="0.61"/><rect x="475" y="0" width="2" height="1" fill="#fff" fill-opacity="0.80"/><rect x="475" y="1010" width="1" height="1" fill="#fff" fill-opacity="0.35"/><rect x="479" y="0" width="2" height="1" fill="#fff" fill-opacity="0.79"/><rect x="479" y="1009" width="2" height="2" fill="#fff" fill-opacity="0.45"/><rect x="480" y="0" width="1" height="2" fill="#fff" fill-opacity="0.61"/><rect x="480" y="1010" width="2" height="1" fill="#fff" fill-opacity="0.67"/><rect x="486" y="1010" width="1" height="1" fill="#fff" fill-opacity="0.60"/><rect x="487" y="1" width="1" height="1" fill="#fff" fill-opacity="0.73"/><rect x="487" y="1009" width="1" height="2" fill="#fff" fill-opacity="0.60"/><rect x="488" y="0" width="2" height="2" fill="#fff" fill-opacity="0.55"/><rect x="488" y="1010" width="2" height="1" fill="#fff" fill-opacity="0.40"/><rect x="490" y="1" width="1" height="2" fill="#fff" fill-opacity="0.90"/><rect x="490" y="1010" width="2" height="1" fill="#fff" fill-opacity="0.41"/><rect x="492" y="1010" width="1" height="2" fill="#fff" fill-opacity="0.79"/><rect x="493" y="0" width="1" height="1" fill="#fff" fill-opacity="0.53"/><rect x="493" y="1009" width="1" height="1" fill="#fff" fill-opacity="0.82"/><rect x="495" y="1" width="2" height="1" fill="#fff" fill-opacity="0.57"/><rect x="495" y="1010" width="2" height="1" fill="#fff" fill-opacity="0.80"/><rect x="497" y="0" width="1" height="2" fill="#fff" fill-opacity="0.70"/><rect x="497" y="1010" width="1" height="1" fill="#fff" fill-opacity="0.69"/><rect x="498" y="0" width="2" height="2" fill="#fff" fill-opacity="0.48"/><rect x="499" y="1010" width="2" height="2" fill="#fff" fill-opacity="0.63"/><rect x="500" y="0" width="1" height="1" fill="#fff" fill-opacity="0.51"/><rect x="503" y="1010" width="2" height="2" fill="#fff" fill-opacity="0.67"/><rect x="509" y="0" width="2" height="2" fill="#fff" fill-opacity="0.78"/><rect x="509" y="1010" width="1" height="1" fill="#fff" fill-opacity="0.55"/><rect x="512" y="1010" width="2" height="2" fill="#fff" fill-opacity="0.82"/><rect x="513" y="0" width="1" height="2" fill="#fff" fill-opacity="0.74"/><rect x="513" y="1009" width="1" height="1" fill="#fff" fill-opacity="0.79"/><rect x="515" y="0" width="1" height="1" fill="#fff" fill-opacity="0.41"/><rect x="515" y="1010" width="2" height="1" fill="#fff" fill-opacity="0.59"/><rect x="517" y="0" width="2" height="2" fill="#fff" fill-opacity="0.53"/><rect x="517" y="1009" width="1" height="1" fill="#fff" fill-opacity="0.31"/><rect x="520" y="0" width="1" height="1" fill="#fff" fill-opacity="0.48"/><rect x="520" y="1010" width="2" height="1" fill="#fff" fill-opacity="0.57"/><rect x="523" y="0" width="1" height="1" fill="#fff" fill-opacity="0.84"/><rect x="523" y="1010" width="2" height="2" fill="#fff" fill-opacity="0.58"/><rect x="525" y="1009" width="1" height="1" fill="#fff" fill-opacity="0.31"/><rect x="530" y="1" width="2" height="1" fill="#fff" fill-opacity="0.97"/><rect x="533" y="0" width="2" height="2" fill="#fff" fill-opacity="0.68"/><rect x="533" y="1009" width="1" height="1" fill="#fff" fill-opacity="0.68"/><rect x="535" y="0" width="1" height="2" fill="#fff" fill-opacity="0.58"/><rect x="535" y="1010" width="2" height="2" fill="#fff" fill-opacity="0.82"/><rect x="541" y="1009" width="1" height="2" fill="#fff" fill-opacity="0.71"/><rect x="544" y="1010" width="1" height="1" fill="#fff" fill-opacity="0.49"/><rect x="546" y="1" width="1" height="2" fill="#fff" fill-opacity="0.90"/><rect x="549" y="1" width="2" height="2" fill="#fff" fill-opacity="0.61"/><rect x="549" y="1010" width="1" height="2" fill="#fff" fill-opacity="0.42"/><rect x="552" y="1010" width="1" height="2" fill="#fff" fill-opacity="0.58"/><rect x="553" y="1009" width="1" height="2" fill="#fff" fill-opacity="0.62"/><rect x="557" y="1" width="1" height="2" fill="#fff" fill-opacity="0.69"/><rect x="557" y="1009" width="1" height="1" fill="#fff" fill-opacity="0.36"/><rect x="560" y="1" width="2" height="2" fill="#fff" fill-opacity="0.64"/><rect x="560" y="1009" width="1" height="1" fill="#fff" fill-opacity="0.85"/><rect x="562" y="0" width="1" height="2" fill="#fff" fill-opacity="0.87"/><rect x="562" y="1010" width="1" height="2" fill="#fff" fill-opacity="0.47"/><rect x="565" y="0" width="1" height="2" fill="#fff" fill-opacity="0.75"/><rect x="565" y="1010" width="1" height="1" fill="#fff" fill-opacity="0.87"/><rect x="570" y="1009" width="1" height="1" fill="#fff" fill-opacity="0.32"/><rect x="571" y="1" width="1" height="2" fill="#fff" fill-opacity="0.97"/><rect x="573" y="1010" width="2" height="1" fill="#fff" fill-opacity="0.68"/><rect x="576" y="0" width="1" height="1" fill="#fff" fill-opacity="0.62"/><rect x="576" y="1010" width="1" height="1" fill="#fff" fill-opacity="0.32"/><rect x="578" y="1010" width="1" height="1" fill="#fff" fill-opacity="0.45"/><rect x="583" y="0" width="1" height="1" fill="#fff" fill-opacity="0.96"/><rect x="585" y="0" width="2" height="1" fill="#fff" fill-opacity="0.68"/><rect x="585" y="1010" width="1" height="2" fill="#fff" fill-opacity="0.59"/><rect x="586" y="0" width="2" height="1" fill="#fff" fill-opacity="0.68"/><rect x="587" y="0" width="1" height="2" fill="#fff" fill-opacity="0.93"/><rect x="587" y="1010" width="1" height="2" fill="#fff" fill-opacity="0.81"/><rect x="590" y="0" width="1" height="1" fill="#fff" fill-opacity="0.69"/><rect x="591" y="1" width="1" height="1" fill="#fff" fill-opacity="0.83"/><rect x="591" y="1009" width="1" height="1" fill="#fff" fill-opacity="0.46"/><rect x="593" y="0" width="1" height="2" fill="#fff" fill-opacity="0.60"/><rect x="593" y="1010" width="1" height="2" fill="#fff" fill-opacity="0.57"/><rect x="595" y="1" width="1" height="1" fill="#fff" fill-opacity="0.74"/><rect x="596" y="0" width="1" height="2" fill="#fff" fill-opacity="0.99"/><rect x="597" y="0" width="1" height="1" fill="#fff" fill-opacity="0.43"/><rect x="599" y="1" width="1" height="2" fill="#fff" fill-opacity="0.88"/><rect x="599" y="1009" width="1" height="1" fill="#fff" fill-opacity="0.77"/><rect x="602" y="0" width="1" height="1" fill="#fff" fill-opacity="0.95"/><rect x="602" y="1010" width="1" height="1" fill="#fff" fill-opacity="0.81"/><rect x="610" y="1" width="2" height="1" fill="#fff" fill-opacity="0.75"/><rect x="610" y="1009" width="2" height="2" fill="#fff" fill-opacity="0.80"/><rect x="611" y="0" width="1" height="2" fill="#fff" fill-opacity="0.91"/><rect x="613" y="0" width="1" height="1" fill="#fff" fill-opacity="0.92"/><rect x="613" y="1009" width="2" height="2" fill="#fff" fill-opacity="0.32"/><rect x="616" y="1" width="1" height="2" fill="#fff" fill-opacity="0.71"/><rect x="616" y="1010" width="1" height="1" fill="#fff" fill-opacity="0.51"/><rect x="622" y="1009" width="2" height="2" fill="#fff" fill-opacity="0.57"/><rect x="623" y="1" width="1" height="1" fill="#fff" fill-opacity="0.55"/><rect x="623" y="1010" width="1" height="1" fill="#fff" fill-opacity="0.36"/><rect x="625" y="0" width="1" height="1" fill="#fff" fill-opacity="0.96"/><rect x="627" y="1" width="2" height="2" fill="#fff" fill-opacity="0.71"/><rect x="628" y="0" width="2" height="1" fill="#fff" fill-opacity="0.43"/><rect x="628" y="1010" width="2" height="2" fill="#fff" fill-opacity="0.37"/><rect x="629" y="0" width="2" height="1" fill="#fff" fill-opacity="0.92"/><rect x="629" y="1010" width="1" height="2" fill="#fff" fill-opacity="0.40"/><rect x="630" y="1010" width="2" height="1" fill="#fff" fill-opacity="0.54"/><rect x="631" y="1009" width="1" height="2" fill="#fff" fill-opacity="0.81"/><rect x="636" y="1010" width="1" height="2" fill="#fff" fill-opacity="0.45"/><rect x="638" y="1009" width="2" height="1" fill="#fff" fill-opacity="0.34"/><rect x="640" y="1" width="1" height="1" fill="#fff" fill-opacity="0.48"/><rect x="643" y="1" width="2" height="2" fill="#fff" fill-opacity="0.95"/><rect x="646" y="0" width="2" height="1" fill="#fff" fill-opacity="0.55"/><rect x="646" y="1010" width="1" height="1" fill="#fff" fill-opacity="0.47"/><rect x="648" y="0" width="1" height="1" fill="#fff" fill-opacity="0.76"/><rect x="651" y="1010" width="2" height="1" fill="#fff" fill-opacity="0.56"/><rect x="654" y="0" width="1" height="2" fill="#fff" fill-opacity="0.56"/><rect x="657" y="0" width="2" height="1" fill="#fff" fill-opacity="0.79"/><rect x="657" y="1010" width="1" height="2" fill="#fff" fill-opacity="0.84"/><rect x="659" y="1010" width="1" height="1" fill="#fff" fill-opacity="0.50"/><rect x="660" y="0" width="2" height="2" fill="#fff" fill-opacity="0.41"/><rect x="660" y="1009" width="1" height="2" fill="#fff" fill-opacity="0.59"/><rect x="662" y="1009" width="1" height="1" fill="#fff" fill-opacity="0.63"/><rect x="665" y="1009" width="2" height="2" fill="#fff" fill-opacity="0.80"/><rect x="667" y="1009" width="2" height="1" fill="#fff" fill-opacity="0.55"/><rect x="670" y="1" width="1" height="2" fill="#fff" fill-opacity="0.89"/><rect x="670" y="1010" width="2" height="2" fill="#fff" fill-opacity="0.46"/><rect x="674" y="0" width="1" height="2" fill="#fff" fill-opacity="0.86"/><rect x="674" y="1010" width="1" height="1" fill="#fff" fill-opacity="0.55"/><rect x="680" y="1010" width="2" height="2" fill="#fff" fill-opacity="0.69"/><rect x="683" y="0" width="1" height="2" fill="#fff" fill-opacity="0.88"/><rect x="683" y="1010" width="2" height="1" fill="#fff" fill-opacity="0.35"/><rect x="685" y="1" width="1" height="2" fill="#fff" fill-opacity="0.52"/><rect x="685" y="1009" width="1" height="1" fill="#fff" fill-opacity="0.45"/><rect x="687" y="1" width="1" height="2" fill="#fff" fill-opacity="0.71"/><rect x="687" y="1010" width="1" height="2" fill="#fff" fill-opacity="0.58"/><rect x="688" y="0" width="1" height="1" fill="#fff" fill-opacity="0.81"/><rect x="688" y="1009" width="1" height="2" fill="#fff" fill-opacity="0.60"/><rect x="691" y="1" width="1" height="1" fill="#fff" fill-opacity="0.98"/><rect x="691" y="1010" width="2" height="2" fill="#fff" fill-opacity="0.71"/><rect x="694" y="1010" width="1" height="1" fill="#fff" fill-opacity="0.80"/><rect x="697" y="1" width="1" height="2" fill="#fff" fill-opacity="0.89"/><rect x="699" y="1010" width="1" height="1" fill="#fff" fill-opacity="0.55"/><rect x="702" y="1" width="2" height="1" fill="#fff" fill-opacity="0.82"/><rect x="702" y="1009" width="1" height="1" fill="#fff" fill-opacity="0.85"/><rect x="704" y="1010" width="1" height="1" fill="#fff" fill-opacity="0.41"/><rect x="707" y="1" width="2" height="1" fill="#fff" fill-opacity="0.74"/><rect x="707" y="1009" width="1" height="1" fill="#fff" fill-opacity="0.61"/><rect x="710" y="0" width="1" height="1" fill="#fff" fill-opacity="0.97"/><rect x="710" y="1010" width="2" height="2" fill="#fff" fill-opacity="0.78"/><rect x="714" y="1" width="1" height="2" fill="#fff" fill-opacity="0.57"/><rect x="714" y="1010" width="1" height="1" fill="#fff" fill-opacity="0.51"/><rect x="716" y="1009" width="1" height="1" fill="#fff" fill-opacity="0.56"/><rect x="719" y="0" width="1" height="1" fill="#fff" fill-opacity="0.96"/><rect x="721" y="0" width="1" height="2" fill="#fff" fill-opacity="0.76"/><rect x="723" y="1010" width="1" height="1" fill="#fff" fill-opacity="0.55"/><rect x="725" y="1009" width="1" height="1" fill="#fff" fill-opacity="0.40"/><rect x="727" y="0" width="1" height="2" fill="#fff" fill-opacity="0.47"/><rect x="727" y="1010" width="1" height="2" fill="#fff" fill-opacity="0.69"/><rect x="728" y="0" width="2" height="1" fill="#fff" fill-opacity="0.63"/><rect x="728" y="1010" width="1" height="2" fill="#fff" fill-opacity="0.32"/><rect x="731" y="0" width="1" height="1" fill="#fff" fill-opacity="0.46"/><rect x="731" y="1009" width="2" height="2" fill="#fff" fill-opacity="0.58"/><rect x="732" y="0" width="1" height="2" fill="#fff" fill-opacity="0.63"/><rect x="733" y="0" width="2" height="1" fill="#fff" fill-opacity="0.54"/><rect x="733" y="1009" width="2" height="2" fill="#fff" fill-opacity="0.66"/><rect x="735" y="0" width="2" height="1" fill="#fff" fill-opacity="0.64"/><rect x="735" y="1009" width="1" height="1" fill="#fff" fill-opacity="0.63"/><rect x="738" y="1010" width="1" height="2" fill="#fff" fill-opacity="0.73"/><rect x="741" y="0" width="1" height="1" fill="#fff" fill-opacity="0.80"/><rect x="741" y="1010" width="1" height="2" fill="#fff" fill-opacity="0.42"/><rect x="744" y="0" width="1" height="1" fill="#fff" fill-opacity="0.89"/><rect x="744" y="1010" width="1" height="2" fill="#fff" fill-opacity="0.76"/><rect x="747" y="1010" width="1" height="1" fill="#fff" fill-opacity="0.52"/><rect x="752" y="1010" width="1" height="1" fill="#fff" fill-opacity="0.47"/><rect x="757" y="1010" width="1" height="2" fill="#fff" fill-opacity="0.42"/><rect x="759" y="1" width="1" height="2" fill="#fff" fill-opacity="0.78"/><rect x="762" y="1010" width="2" height="2" fill="#fff" fill-opacity="0.86"/><rect x="765" y="1009" width="1" height="2" fill="#fff" fill-opacity="0.84"/><rect x="768" y="1009" width="2" height="1" fill="#fff" fill-opacity="0.32"/><rect x="770" y="0" width="2" height="1" fill="#fff" fill-opacity="0.65"/><rect x="773" y="1010" width="1" height="2" fill="#fff" fill-opacity="0.87"/><rect x="775" y="0" width="2" height="2" fill="#fff" fill-opacity="0.71"/><rect x="776" y="1" width="1" height="2" fill="#fff" fill-opacity="0.86"/><rect x="776" y="1010" width="2" height="2" fill="#fff" fill-opacity="0.40"/><rect x="780" y="0" width="1" height="2" fill="#fff" fill-opacity="0.61"/><rect x="780" y="1010" width="1" height="1" fill="#fff" fill-opacity="0.38"/><rect x="783" y="0" width="1" height="1" fill="#fff" fill-opacity="0.40"/><rect x="784" y="1010" width="1" height="1" fill="#fff" fill-opacity="0.65"/><rect x="785" y="0" width="2" height="2" fill="#fff" fill-opacity="0.86"/><rect x="785" y="1010" width="1" height="2" fill="#fff" fill-opacity="0.80"/><rect x="787" y="1010" width="1" height="2" fill="#fff" fill-opacity="0.59"/><rect x="788" y="0" width="1" height="1" fill="#fff" fill-opacity="0.47"/><rect x="788" y="1009" width="1" height="2" fill="#fff" fill-opacity="0.57"/><rect x="791" y="0" width="2" height="1" fill="#fff" fill-opacity="0.43"/><rect x="791" y="1010" width="1" height="2" fill="#fff" fill-opacity="0.89"/><rect x="794" y="1" width="1" height="2" fill="#fff" fill-opacity="0.69"/><rect x="796" y="0" width="2" height="2" fill="#fff" fill-opacity="0.78"/><rect x="800" y="0" width="1" height="2" fill="#fff" fill-opacity="0.90"/><rect x="800" y="1009" width="2" height="1" fill="#fff" fill-opacity="0.36"/><rect x="805" y="1" width="1" height="2" fill="#fff" fill-opacity="0.54"/><rect x="805" y="1010" width="1" height="1" fill="#fff" fill-opacity="0.33"/><rect x="806" y="1" width="2" height="2" fill="#fff" fill-opacity="0.94"/><rect x="808" y="1" width="1" height="2" fill="#fff" fill-opacity="0.76"/><rect x="809" y="1010" width="2" height="2" fill="#fff" fill-opacity="0.35"/><rect x="810" y="1009" width="2" height="2" fill="#fff" fill-opacity="0.30"/><rect x="815" y="0" width="2" height="1" fill="#fff" fill-opacity="0.71"/><rect x="815" y="1010" width="1" height="2" fill="#fff" fill-opacity="0.31"/><rect x="816" y="1010" width="1" height="2" fill="#fff" fill-opacity="0.78"/><rect x="819" y="0" width="1" height="1" fill="#fff" fill-opacity="0.73"/><rect x="819" y="1010" width="2" height="1" fill="#fff" fill-opacity="0.88"/><rect x="823" y="1010" width="1" height="2" fill="#fff" fill-opacity="0.87"/><rect x="825" y="1010" width="2" height="1" fill="#fff" fill-opacity="0.81"/><rect x="826" y="1009" width="1" height="2" fill="#fff" fill-opacity="0.63"/><rect x="828" y="0" width="2" height="2" fill="#fff" fill-opacity="0.64"/><rect x="828" y="1009" width="1" height="1" fill="#fff" fill-opacity="0.43"/><rect x="830" y="1010" width="1" height="2" fill="#fff" fill-opacity="0.44"/><rect x="832" y="1" width="2" height="1" fill="#fff" fill-opacity="0.84"/><rect x="835" y="0" width="2" height="1" fill="#fff" fill-opacity="0.88"/><rect x="835" y="1010" width="2" height="1" fill="#fff" fill-opacity="0.68"/><rect x="838" y="0" width="2" height="2" fill="#fff" fill-opacity="0.73"/><rect x="839" y="0" width="1" height="2" fill="#fff" fill-opacity="0.87"/><rect x="839" y="1009" width="1" height="2" fill="#fff" fill-opacity="0.33"/><rect x="842" y="0" width="1" height="2" fill="#fff" fill-opacity="0.47"/><rect x="842" y="1009" width="2" height="1" fill="#fff" fill-opacity="0.64"/><rect x="845" y="1010" width="1" height="1" fill="#fff" fill-opacity="0.80"/><rect x="846" y="1" width="2" height="2" fill="#fff" fill-opacity="0.83"/><rect x="846" y="1010" width="1" height="1" fill="#fff" fill-opacity="0.51"/><rect x="848" y="1010" width="1" height="2" fill="#fff" fill-opacity="0.51"/><rect x="851" y="1" width="1" height="1" fill="#fff" fill-opacity="0.87"/><rect x="851" y="1009" width="1" height="1" fill="#fff" fill-opacity="0.39"/><rect x="854" y="0" width="2" height="2" fill="#fff" fill-opacity="0.97"/><rect x="854" y="1010" width="1" height="2" fill="#fff" fill-opacity="0.60"/><rect x="855" y="1009" width="2" height="2" fill="#fff" fill-opacity="0.81"/><rect x="856" y="1009" width="2" height="1" fill="#fff" fill-opacity="0.52"/><rect x="859" y="0" width="2" height="1" fill="#fff" fill-opacity="0.53"/><rect x="862" y="1" width="1" height="2" fill="#fff" fill-opacity="0.96"/><rect x="862" y="1010" width="2" height="2" fill="#fff" fill-opacity="0.50"/><rect x="863" y="1" width="1" height="1" fill="#fff" fill-opacity="0.84"/><rect x="863" y="1010" width="1" height="1" fill="#fff" fill-opacity="0.60"/><rect x="865" y="1" width="2" height="1" fill="#fff" fill-opacity="1.00"/><rect x="865" y="1010" width="1" height="1" fill="#fff" fill-opacity="0.76"/><rect x="868" y="0" width="1" height="2" fill="#fff" fill-opacity="0.88"/><rect x="868" y="1009" width="2" height="1" fill="#fff" fill-opacity="0.48"/><rect x="870" y="1010" width="1" height="2" fill="#fff" fill-opacity="0.82"/><rect x="873" y="0" width="2" height="2" fill="#fff" fill-opacity="0.80"/><rect x="875" y="0" width="1" height="2" fill="#fff" fill-opacity="0.49"/><rect x="875" y="1010" width="1" height="2" fill="#fff" fill-opacity="0.57"/><rect x="881" y="0" width="2" height="2" fill="#fff" fill-opacity="0.55"/><rect x="881" y="1010" width="1" height="1" fill="#fff" fill-opacity="0.85"/><rect x="884" y="1010" width="2" height="2" fill="#fff" fill-opacity="0.89"/><rect x="889" y="1010" width="1" height="1" fill="#fff" fill-opacity="0.47"/><rect x="891" y="0" width="2" height="2" fill="#fff" fill-opacity="0.54"/><rect x="891" y="1009" width="1" height="2" fill="#fff" fill-opacity="0.42"/><rect x="894" y="1" width="2" height="1" fill="#fff" fill-opacity="0.52"/><rect x="895" y="1010" width="1" height="1" fill="#fff" fill-opacity="0.30"/><rect x="897" y="0" width="2" height="2" fill="#fff" fill-opacity="0.95"/><rect x="897" y="1010" width="2" height="1" fill="#fff" fill-opacity="0.69"/><rect x="900" y="0" width="1" height="1" fill="#fff" fill-opacity="0.78"/><rect x="900" y="1010" width="2" height="2" fill="#fff" fill-opacity="0.45"/><rect x="902" y="1010" width="2" height="2" fill="#fff" fill-opacity="0.33"/><rect x="906" y="0" width="1" height="1" fill="#fff" fill-opacity="0.72"/><rect x="908" y="1010" width="2" height="1" fill="#fff" fill-opacity="0.69"/><rect x="911" y="0" width="2" height="2" fill="#fff" fill-opacity="0.89"/><rect x="911" y="1009" width="2" height="2" fill="#fff" fill-opacity="0.69"/><rect x="914" y="1010" width="1" height="2" fill="#fff" fill-opacity="0.38"/><rect x="915" y="0" width="2" height="2" fill="#fff" fill-opacity="0.49"/><rect x="917" y="1009" width="2" height="1" fill="#fff" fill-opacity="0.37"/><rect x="920" y="1" width="1" height="2" fill="#fff" fill-opacity="0.96"/><rect x="920" y="1009" width="1" height="1" fill="#fff" fill-opacity="0.62"/><rect x="922" y="1010" width="1" height="2" fill="#fff" fill-opacity="0.84"/><rect x="924" y="0" width="1" height="1" fill="#fff" fill-opacity="0.80"/><rect x="924" y="1010" width="1" height="2" fill="#fff" fill-opacity="0.34"/><rect x="927" y="0" width="2" height="1" fill="#fff" fill-opacity="0.42"/><rect x="927" y="1010" width="1" height="1" fill="#fff" fill-opacity="0.44"/><rect x="928" y="0" width="2" height="2" fill="#fff" fill-opacity="0.58"/><rect x="933" y="1010" width="1" height="1" fill="#fff" fill-opacity="0.50"/><rect x="935" y="1010" width="2" height="2" fill="#fff" fill-opacity="0.43"/><rect x="936" y="1010" width="1" height="1" fill="#fff" fill-opacity="0.77"/><rect x="938" y="0" width="1" height="1" fill="#fff" fill-opacity="0.88"/><rect x="938" y="1009" width="1" height="2" fill="#fff" fill-opacity="0.39"/><rect x="941" y="0" width="1" height="2" fill="#fff" fill-opacity="0.45"/><rect x="941" y="1010" width="2" height="2" fill="#fff" fill-opacity="0.83"/><rect x="942" y="0" width="2" height="1" fill="#fff" fill-opacity="0.42"/><rect x="942" y="1009" width="2" height="2" fill="#fff" fill-opacity="0.72"/><rect x="945" y="0" width="1" height="1" fill="#fff" fill-opacity="0.47"/><rect x="945" y="1009" width="2" height="2" fill="#fff" fill-opacity="0.30"/><rect x="946" y="1010" width="2" height="1" fill="#fff" fill-opacity="0.62"/><rect x="948" y="1009" width="1" height="1" fill="#fff" fill-opacity="0.46"/><rect x="949" y="0" width="1" height="1" fill="#fff" fill-opacity="0.52"/><rect x="949" y="1010" width="1" height="2" fill="#fff" fill-opacity="0.31"/><rect x="952" y="0" width="2" height="2" fill="#fff" fill-opacity="0.73"/><rect x="955" y="1010" width="2" height="2" fill="#fff" fill-opacity="0.53"/><rect x="956" y="0" width="1" height="1" fill="#fff" fill-opacity="0.94"/><rect x="964" y="1" width="2" height="2" fill="#fff" fill-opacity="0.81"/><rect x="964" y="1010" width="1" height="2" fill="#fff" fill-opacity="0.88"/><rect x="965" y="1" width="1" height="2" fill="#fff" fill-opacity="0.76"/><rect x="968" y="0" width="1" height="2" fill="#fff" fill-opacity="0.77"/><rect x="970" y="1" width="2" height="1" fill="#fff" fill-opacity="0.95"/><rect x="972" y="1010" width="1" height="2" fill="#fff" fill-opacity="0.64"/><rect x="973" y="1" width="1" height="1" fill="#fff" fill-opacity="0.72"/><rect x="974" y="1010" width="1" height="1" fill="#fff" fill-opacity="0.68"/><rect x="977" y="1010" width="1" height="2" fill="#fff" fill-opacity="0.37"/><rect x="978" y="1010" width="1" height="2" fill="#fff" fill-opacity="0.57"/><rect x="979" y="0" width="1" height="1" fill="#fff" fill-opacity="0.67"/><rect x="979" y="1009" width="2" height="1" fill="#fff" fill-opacity="0.30"/><rect x="980" y="1" width="2" height="1" fill="#fff" fill-opacity="0.77"/><rect x="980" y="1010" width="1" height="1" fill="#fff" fill-opacity="0.63"/><rect x="981" y="0" width="2" height="1" fill="#fff" fill-opacity="0.58"/><rect x="981" y="1010" width="1" height="1" fill="#fff" fill-opacity="0.46"/><rect x="983" y="1" width="1" height="1" fill="#fff" fill-opacity="0.52"/><rect x="983" y="1010" width="2" height="2" fill="#fff" fill-opacity="0.85"/><rect x="986" y="0" width="1" height="2" fill="#fff" fill-opacity="0.98"/><rect x="986" y="1010" width="1" height="2" fill="#fff" fill-opacity="0.44"/><rect x="989" y="1" width="1" height="2" fill="#fff" fill-opacity="0.44"/><rect x="989" y="1009" width="1" height="2" fill="#fff" fill-opacity="0.53"/><rect x="992" y="1" width="1" height="1" fill="#fff" fill-opacity="0.76"/><rect x="992" y="1010" width="2" height="2" fill="#fff" fill-opacity="0.55"/><rect x="994" y="0" width="1" height="2" fill="#fff" fill-opacity="0.69"/><rect x="994" y="1009" width="2" height="1" fill="#fff" fill-opacity="0.74"/><rect x="996" y="1" width="1" height="2" fill="#fff" fill-opacity="0.86"/><rect x="997" y="0" width="2" height="1" fill="#fff" fill-opacity="0.46"/><rect x="997" y="1009" width="2" height="2" fill="#fff" fill-opacity="0.33"/><rect x="1000" y="0" width="1" height="1" fill="#fff" fill-opacity="0.73"/><rect x="1003" y="0" width="1" height="1" fill="#fff" fill-opacity="0.59"/><rect x="1003" y="1009" width="1" height="2" fill="#fff" fill-opacity="0.61"/><rect x="1004" y="0" width="2" height="2" fill="#fff" fill-opacity="0.73"/><rect x="1004" y="1010" width="2" height="1" fill="#fff" fill-opacity="0.48"/><rect x="1008" y="0" width="1" height="1" fill="#fff" fill-opacity="0.52"/><rect x="1011" y="0" width="1" height="2" fill="#fff" fill-opacity="0.95"/><rect x="1011" y="1009" width="2" height="2" fill="#fff" fill-opacity="0.31"/><rect x="1012" y="1" width="1" height="1" fill="#fff" fill-opacity="0.56"/><rect x="1014" y="0" width="2" height="2" fill="#fff" fill-opacity="0.64"/><rect x="1015" y="1010" width="2" height="1" fill="#fff" fill-opacity="0.33"/><rect x="1016" y="1009" width="2" height="1" fill="#fff" fill-opacity="0.60"/><rect x="1020" y="0" width="1" height="1" fill="#fff" fill-opacity="0.71"/><rect x="1020" y="1009" width="1" height="1" fill="#fff" fill-opacity="0.55"/><rect x="1025" y="1009" width="2" height="1" fill="#fff" fill-opacity="0.33"/><rect x="1027" y="0" width="2" height="2" fill="#fff" fill-opacity="0.82"/><rect x="1029" y="1009" width="1" height="1" fill="#fff" fill-opacity="0.53"/><rect x="1030" y="0" width="2" height="2" fill="#fff" fill-opacity="0.53"/><rect x="1030" y="1009" width="1" height="2" fill="#fff" fill-opacity="0.39"/><rect x="1031" y="1" width="1" height="1" fill="#fff" fill-opacity="0.42"/><rect x="1031" y="1010" width="1" height="1" fill="#fff" fill-opacity="0.47"/><rect x="1033" y="0" width="1" height="1" fill="#fff" fill-opacity="0.69"/><rect x="1036" y="0" width="1" height="1" fill="#fff" fill-opacity="0.68"/><rect x="1037" y="0" width="1" height="1" fill="#fff" fill-opacity="0.98"/><rect x="1037" y="1009" width="2" height="2" fill="#fff" fill-opacity="0.33"/><rect x="1039" y="0" width="1" height="2" fill="#fff" fill-opacity="0.85"/><rect x="1039" y="1010" width="1" height="2" fill="#fff" fill-opacity="0.36"/><rect x="1042" y="0" width="2" height="2" fill="#fff" fill-opacity="0.68"/><rect x="1042" y="1010" width="2" height="1" fill="#fff" fill-opacity="0.55"/><rect x="1045" y="1" width="1" height="1" fill="#fff" fill-opacity="0.62"/><rect x="1046" y="1" width="1" height="2" fill="#fff" fill-opacity="0.40"/><rect x="1048" y="0" width="1" height="1" fill="#fff" fill-opacity="0.93"/><rect x="1048" y="1010" width="1" height="1" fill="#fff" fill-opacity="0.49"/><rect x="1049" y="1" width="1" height="2" fill="#fff" fill-opacity="0.62"/><rect x="1049" y="1010" width="2" height="1" fill="#fff" fill-opacity="0.89"/><rect x="1050" y="1009" width="1" height="1" fill="#fff" fill-opacity="0.36"/><rect x="1051" y="1" width="2" height="1" fill="#fff" fill-opacity="0.81"/><rect x="1051" y="1009" width="1" height="2" fill="#fff" fill-opacity="0.90"/><rect x="1053" y="1" width="1" height="2" fill="#fff" fill-opacity="0.74"/><rect x="1053" y="1010" width="2" height="1" fill="#fff" fill-opacity="0.44"/><rect x="1056" y="1009" width="1" height="1" fill="#fff" fill-opacity="0.66"/><rect x="1057" y="1" width="2" height="1" fill="#fff" fill-opacity="0.89"/><rect x="1057" y="1010" width="2" height="1" fill="#fff" fill-opacity="0.31"/><rect x="1059" y="1009" width="1" height="1" fill="#fff" fill-opacity="0.39"/><rect x="1061" y="1009" width="2" height="2" fill="#fff" fill-opacity="0.73"/><rect x="1064" y="1" width="1" height="1" fill="#fff" fill-opacity="0.85"/><rect x="1065" y="1010" width="1" height="1" fill="#fff" fill-opacity="0.69"/><rect x="1067" y="0" width="2" height="2" fill="#fff" fill-opacity="0.48"/><rect x="1072" y="0" width="1" height="2" fill="#fff" fill-opacity="0.85"/><rect x="1072" y="1010" width="2" height="1" fill="#fff" fill-opacity="0.34"/><rect x="1075" y="0" width="2" height="1" fill="#fff" fill-opacity="0.93"/><rect x="1075" y="1010" width="2" height="1" fill="#fff" fill-opacity="0.54"/><rect x="1079" y="1009" width="1" height="2" fill="#fff" fill-opacity="0.70"/><rect x="1081" y="1010" width="2" height="1" fill="#fff" fill-opacity="0.87"/><rect x="1083" y="1" width="1" height="2" fill="#fff" fill-opacity="0.49"/><rect x="1083" y="1009" width="1" height="2" fill="#fff" fill-opacity="0.81"/><rect x="1086" y="0" width="1" height="2" fill="#fff" fill-opacity="0.51"/><rect x="1089" y="1" width="1" height="2" fill="#fff" fill-opacity="0.89"/><rect x="1089" y="1010" width="1" height="1" fill="#fff" fill-opacity="0.52"/><rect x="1090" y="1" width="1" height="2" fill="#fff" fill-opacity="0.70"/><rect x="1094" y="0" width="1" height="1" fill="#fff" fill-opacity="0.46"/><rect x="1094" y="1010" width="2" height="2" fill="#fff" fill-opacity="0.74"/><rect x="1097" y="1" width="2" height="2" fill="#fff" fill-opacity="0.48"/><rect x="1099" y="1010" width="1" height="2" fill="#fff" fill-opacity="0.46"/><rect x="1101" y="1" width="2" height="2" fill="#fff" fill-opacity="0.96"/><rect x="1102" y="1010" width="2" height="1" fill="#fff" fill-opacity="0.33"/><rect x="1105" y="0" width="1" height="2" fill="#fff" fill-opacity="0.85"/><rect x="1108" y="1010" width="1" height="1" fill="#fff" fill-opacity="0.30"/><rect x="1110" y="1" width="2" height="1" fill="#fff" fill-opacity="1.00"/><rect x="1110" y="1010" width="2" height="2" fill="#fff" fill-opacity="0.68"/><rect x="1111" y="1" width="1" height="2" fill="#fff" fill-opacity="0.73"/><rect x="1111" y="1009" width="2" height="2" fill="#fff" fill-opacity="0.60"/><rect x="1114" y="0" width="1" height="1" fill="#fff" fill-opacity="0.90"/><rect x="1114" y="1009" width="2" height="2" fill="#fff" fill-opacity="0.84"/><rect x="1115" y="0" width="1" height="2" fill="#fff" fill-opacity="0.84"/><rect x="1115" y="1010" width="1" height="2" fill="#fff" fill-opacity="0.88"/><rect x="1117" y="1010" width="1" height="1" fill="#fff" fill-opacity="0.67"/><rect x="1119" y="1" width="1" height="2" fill="#fff" fill-opacity="0.64"/><rect x="1119" y="1010" width="1" height="1" fill="#fff" fill-opacity="0.42"/><rect x="1122" y="0" width="2" height="1" fill="#fff" fill-opacity="0.87"/><rect x="1122" y="1009" width="1" height="2" fill="#fff" fill-opacity="0.70"/><rect x="1125" y="0" width="1" height="2" fill="#fff" fill-opacity="0.62"/><rect x="1129" y="0" width="1" height="2" fill="#fff" fill-opacity="0.61"/><rect x="1134" y="1" width="2" height="2" fill="#fff" fill-opacity="0.90"/><rect x="1136" y="0" width="2" height="1" fill="#fff" fill-opacity="0.86"/><rect x="1136" y="1010" width="1" height="2" fill="#fff" fill-opacity="0.54"/><rect x="1138" y="0" width="2" height="1" fill="#fff" fill-opacity="0.72"/><rect x="1138" y="1010" width="1" height="1" fill="#fff" fill-opacity="0.43"/><rect x="1141" y="0" width="1" height="1" fill="#fff" fill-opacity="0.91"/><rect x="1144" y="0" width="2" height="2" fill="#fff" fill-opacity="0.87"/><rect x="1145" y="1" width="1" height="1" fill="#fff" fill-opacity="0.94"/><rect x="1150" y="1010" width="2" height="2" fill="#fff" fill-opacity="0.67"/><rect x="1155" y="1009" width="1" height="2" fill="#fff" fill-opacity="0.36"/><rect x="1158" y="0" width="1" height="1" fill="#fff" fill-opacity="0.82"/><rect x="1158" y="1010" width="1" height="1" fill="#fff" fill-opacity="0.57"/><rect x="1159" y="1" width="1" height="2" fill="#fff" fill-opacity="0.75"/><rect x="1159" y="1009" width="1" height="2" fill="#fff" fill-opacity="0.37"/><rect x="1160" y="0" width="1" height="1" fill="#fff" fill-opacity="0.53"/><rect x="1161" y="1" width="2" height="1" fill="#fff" fill-opacity="0.53"/><rect x="1161" y="1010" width="1" height="2" fill="#fff" fill-opacity="0.52"/><rect x="1164" y="0" width="2" height="1" fill="#fff" fill-opacity="0.64"/><rect x="1164" y="1010" width="1" height="1" fill="#fff" fill-opacity="0.70"/><rect x="1167" y="1010" width="1" height="1" fill="#fff" fill-opacity="0.56"/><rect x="1171" y="0" width="1" height="2" fill="#fff" fill-opacity="0.50"/><rect x="1172" y="1010" width="1" height="1" fill="#fff" fill-opacity="0.76"/><rect x="1173" y="1" width="1" height="1" fill="#fff" fill-opacity="0.95"/><rect x="1176" y="0" width="1" height="2" fill="#fff" fill-opacity="0.41"/><rect x="1179" y="1010" width="1" height="1" fill="#fff" fill-opacity="0.64"/><rect x="1181" y="1009" width="2" height="1" fill="#fff" fill-opacity="0.71"/><rect x="1185" y="1009" width="1" height="2" fill="#fff" fill-opacity="0.59"/><rect x="1189" y="0" width="2" height="2" fill="#fff" fill-opacity="0.53"/><rect x="1189" y="1009" width="1" height="2" fill="#fff" fill-opacity="0.87"/><rect x="1192" y="1" width="2" height="2" fill="#fff" fill-opacity="0.50"/><rect x="1194" y="0" width="1" height="1" fill="#fff" fill-opacity="0.84"/><rect x="1194" y="1009" width="1" height="1" fill="#fff" fill-opacity="0.58"/><rect x="1195" y="1" width="2" height="1" fill="#fff" fill-opacity="0.92"/><rect x="1195" y="1010" width="1" height="2" fill="#fff" fill-opacity="0.76"/><rect x="1196" y="0" width="1" height="2" fill="#fff" fill-opacity="0.93"/><rect x="1196" y="1009" width="1" height="2" fill="#fff" fill-opacity="0.57"/><rect x="1201" y="1010" width="1" height="2" fill="#fff" fill-opacity="0.40"/><rect x="1205" y="1010" width="2" height="1" fill="#fff" fill-opacity="0.37"/><rect x="1207" y="0" width="2" height="1" fill="#fff" fill-opacity="0.88"/><rect x="1208" y="1" width="1" height="1" fill="#fff" fill-opacity="0.55"/><rect x="1209" y="1009" width="1" height="1" fill="#fff" fill-opacity="0.86"/><rect x="1210" y="1010" width="2" height="2" fill="#fff" fill-opacity="0.46"/><rect x="1211" y="0" width="1" height="1" fill="#fff" fill-opacity="0.51"/><rect x="1212" y="1010" width="1" height="1" fill="#fff" fill-opacity="0.34"/><rect x="1213" y="0" width="2" height="1" fill="#fff" fill-opacity="0.82"/><rect x="1216" y="0" width="2" height="1" fill="#fff" fill-opacity="0.74"/><rect x="1216" y="1009" width="2" height="2" fill="#fff" fill-opacity="0.43"/><rect x="1219" y="1010" width="1" height="1" fill="#fff" fill-opacity="0.63"/><rect x="1221" y="1009" width="1" height="1" fill="#fff" fill-opacity="0.52"/><rect x="1223" y="0" width="1" height="2" fill="#fff" fill-opacity="0.76"/><rect x="1224" y="0" width="1" height="1" fill="#fff" fill-opacity="0.81"/><rect x="1225" y="0" width="1" height="1" fill="#fff" fill-opacity="0.95"/><rect x="1230" y="1009" width="1" height="2" fill="#fff" fill-opacity="0.57"/><rect x="1233" y="0" width="1" height="1" fill="#fff" fill-opacity="0.59"/><rect x="1233" y="1010" width="1" height="2" fill="#fff" fill-opacity="0.76"/><rect x="1235" y="0" width="1" height="2" fill="#fff" fill-opacity="0.72"/><rect x="1235" y="1010" width="1" height="2" fill="#fff" fill-opacity="0.30"/><rect x="1239" y="0" width="1" height="2" fill="#fff" fill-opacity="0.78"/><rect x="1239" y="1010" width="1" height="2" fill="#fff" fill-opacity="0.40"/><rect x="1242" y="1" width="2" height="1" fill="#fff" fill-opacity="0.96"/><rect x="1242" y="1010" width="2" height="1" fill="#fff" fill-opacity="0.69"/><rect x="1243" y="0" width="2" height="2" fill="#fff" fill-opacity="0.66"/><rect x="1243" y="1009" width="2" height="2" fill="#fff" fill-opacity="0.67"/><rect x="1246" y="0" width="1" height="1" fill="#fff" fill-opacity="0.81"/><rect x="1246" y="1010" width="2" height="1" fill="#fff" fill-opacity="0.69"/><rect x="1249" y="0" width="1" height="1" fill="#fff" fill-opacity="0.44"/><rect x="1249" y="1009" width="1" height="2" fill="#fff" fill-opacity="0.34"/><rect x="1252" y="0" width="2" height="2" fill="#fff" fill-opacity="0.95"/><rect x="1252" y="1009" width="1" height="2" fill="#fff" fill-opacity="0.54"/><rect x="1255" y="1010" width="1" height="2" fill="#fff" fill-opacity="0.51"/><rect x="1256" y="0" width="1" height="1" fill="#fff" fill-opacity="0.88"/><rect x="1259" y="1010" width="2" height="2" fill="#fff" fill-opacity="0.70"/><rect x="1260" y="0" width="1" height="1" fill="#fff" fill-opacity="0.63"/><rect x="1263" y="0" width="1" height="2" fill="#fff" fill-opacity="0.41"/><rect x="1264" y="1010" width="2" height="1" fill="#fff" fill-opacity="0.38"/><rect x="1267" y="0" width="1" height="1" fill="#fff" fill-opacity="0.92"/><rect x="1268" y="0" width="1" height="1" fill="#fff" fill-opacity="0.79"/><rect x="1270" y="1010" width="1" height="1" fill="#fff" fill-opacity="0.33"/><rect x="1273" y="0" width="1" height="2" fill="#fff" fill-opacity="0.42"/><rect x="1273" y="1009" width="1" height="2" fill="#fff" fill-opacity="0.63"/><rect x="1275" y="0" width="1" height="2" fill="#fff" fill-opacity="0.95"/><rect x="1277" y="0" width="1" height="1" fill="#fff" fill-opacity="0.56"/><rect x="1277" y="1009" width="1" height="1" fill="#fff" fill-opacity="0.34"/><rect x="1278" y="0" width="2" height="2" fill="#fff" fill-opacity="0.47"/><rect x="1281" y="1" width="1" height="2" fill="#fff" fill-opacity="0.53"/><rect x="1281" y="1010" width="1" height="2" fill="#fff" fill-opacity="0.77"/><rect x="1282" y="0" width="2" height="2" fill="#fff" fill-opacity="0.46"/><rect x="1282" y="1010" width="1" height="1" fill="#fff" fill-opacity="0.72"/><rect x="1284" y="0" width="2" height="1" fill="#fff" fill-opacity="0.78"/><rect x="1286" y="0" width="1" height="1" fill="#fff" fill-opacity="0.79"/><rect x="1286" y="1010" width="2" height="1" fill="#fff" fill-opacity="0.81"/><rect x="1291" y="1" width="1" height="1" fill="#fff" fill-opacity="0.67"/><rect x="1293" y="0" width="1" height="2" fill="#fff" fill-opacity="0.85"/><rect x="1293" y="1009" width="1" height="1" fill="#fff" fill-opacity="0.71"/><rect x="1294" y="0" width="1" height="1" fill="#fff" fill-opacity="0.69"/><rect x="1294" y="1010" width="1" height="1" fill="#fff" fill-opacity="0.67"/><rect x="1295" y="0" width="1" height="2" fill="#fff" fill-opacity="1.00"/><rect x="1295" y="1009" width="1" height="1" fill="#fff" fill-opacity="0.54"/><rect x="1297" y="1" width="1" height="2" fill="#fff" fill-opacity="0.86"/><rect x="1297" y="1009" width="1" height="2" fill="#fff" fill-opacity="0.66"/><rect x="1299" y="1" width="1" height="1" fill="#fff" fill-opacity="0.56"/><rect x="1299" y="1010" width="1" height="1" fill="#fff" fill-opacity="0.85"/><rect x="1302" y="0" width="1" height="1" fill="#fff" fill-opacity="0.54"/><rect x="1302" y="1010" width="1" height="2" fill="#fff" fill-opacity="0.45"/><rect x="1308" y="1" width="1" height="1" fill="#fff" fill-opacity="0.43"/><rect x="1310" y="0" width="1" height="2" fill="#fff" fill-opacity="0.44"/><rect x="1310" y="1010" width="2" height="1" fill="#fff" fill-opacity="0.57"/><rect x="1312" y="1010" width="2" height="1" fill="#fff" fill-opacity="0.56"/><rect x="1315" y="1009" width="2" height="2" fill="#fff" fill-opacity="0.69"/><rect x="1317" y="1" width="1" height="1" fill="#fff" fill-opacity="0.82"/><rect x="1317" y="1010" width="1" height="1" fill="#fff" fill-opacity="0.70"/><rect x="1318" y="0" width="2" height="1" fill="#fff" fill-opacity="0.68"/><rect x="1318" y="1009" width="1" height="1" fill="#fff" fill-opacity="0.87"/><rect x="1319" y="0" width="1" height="1" fill="#fff" fill-opacity="0.62"/><rect x="1324" y="1" width="1" height="2" fill="#fff" fill-opacity="0.77"/><rect x="1326" y="0" width="2" height="2" fill="#fff" fill-opacity="0.61"/><rect x="1328" y="0" width="2" height="1" fill="#fff" fill-opacity="0.81"/><rect x="1330" y="1" width="1" height="1" fill="#fff" fill-opacity="0.78"/><rect x="1331" y="0" width="2" height="2" fill="#fff" fill-opacity="0.50"/><rect x="1331" y="1010" width="2" height="1" fill="#fff" fill-opacity="0.42"/><rect x="1332" y="0" width="2" height="2" fill="#fff" fill-opacity="0.42"/><rect x="1333" y="0" width="1" height="1" fill="#fff" fill-opacity="0.54"/><rect x="1333" y="1010" width="1" height="1" fill="#fff" fill-opacity="0.31"/><rect x="1335" y="0" width="2" height="2" fill="#fff" fill-opacity="0.59"/><rect x="1335" y="1010" width="1" height="2" fill="#fff" fill-opacity="0.33"/><rect x="1336" y="0" width="1" height="1" fill="#fff" fill-opacity="0.77"/><rect x="1338" y="1" width="1" height="2" fill="#fff" fill-opacity="0.70"/><rect x="1338" y="1010" width="2" height="1" fill="#fff" fill-opacity="0.75"/><rect x="1341" y="0" width="2" height="1" fill="#fff" fill-opacity="0.54"/><rect x="1343" y="1" width="1" height="1" fill="#fff" fill-opacity="0.88"/><rect x="1343" y="1010" width="1" height="1" fill="#fff" fill-opacity="0.79"/><rect x="1345" y="0" width="1" height="1" fill="#fff" fill-opacity="0.96"/><rect x="1345" y="1010" width="1" height="1" fill="#fff" fill-opacity="0.75"/><rect x="1348" y="1" width="1" height="1" fill="#fff" fill-opacity="0.42"/><rect x="1349" y="0" width="2" height="2" fill="#fff" fill-opacity="0.77"/><rect x="1352" y="0" width="1" height="2" fill="#fff" fill-opacity="0.86"/><rect x="1357" y="1" width="2" height="2" fill="#fff" fill-opacity="0.43"/><rect x="1358" y="0" width="2" height="1" fill="#fff" fill-opacity="0.49"/><rect x="1359" y="0" width="1" height="1" fill="#fff" fill-opacity="0.87"/><rect x="1361" y="1010" width="1" height="1" fill="#fff" fill-opacity="0.70"/><rect x="1364" y="0" width="1" height="2" fill="#fff" fill-opacity="0.88"/><rect x="1364" y="1010" width="1" height="2" fill="#fff" fill-opacity="0.86"/><rect x="1366" y="1010" width="2" height="2" fill="#fff" fill-opacity="0.67"/><rect x="1367" y="1010" width="1" height="1" fill="#fff" fill-opacity="0.81"/><rect x="1370" y="0" width="2" height="1" fill="#fff" fill-opacity="0.58"/><rect x="1370" y="1010" width="1" height="2" fill="#fff" fill-opacity="0.61"/><rect x="1371" y="0" width="2" height="1" fill="#fff" fill-opacity="0.42"/><rect x="1374" y="0" width="2" height="1" fill="#fff" fill-opacity="0.59"/><rect x="1377" y="1009" width="1" height="2" fill="#fff" fill-opacity="0.72"/><rect x="1379" y="0" width="1" height="1" fill="#fff" fill-opacity="0.46"/><rect x="1382" y="1009" width="2" height="2" fill="#fff" fill-opacity="0.76"/><rect x="1387" y="1" width="1" height="1" fill="#fff" fill-opacity="0.42"/><rect x="1387" y="1010" width="1" height="2" fill="#fff" fill-opacity="0.49"/><rect x="1390" y="1009" width="2" height="2" fill="#fff" fill-opacity="0.33"/><rect x="1391" y="1009" width="1" height="1" fill="#fff" fill-opacity="0.84"/><rect x="1393" y="0" width="1" height="2" fill="#fff" fill-opacity="0.58"/><rect x="1395" y="0" width="1" height="1" fill="#fff" fill-opacity="0.95"/><rect x="1395" y="1010" width="2" height="1" fill="#fff" fill-opacity="0.79"/><rect x="1401" y="0" width="1" height="2" fill="#fff" fill-opacity="0.70"/><rect x="1401" y="1010" width="1" height="1" fill="#fff" fill-opacity="0.44"/><rect x="1404" y="0" width="1" height="1" fill="#fff" fill-opacity="0.91"/><rect x="1408" y="0" width="2" height="2" fill="#fff" fill-opacity="0.97"/><rect x="1408" y="1010" width="2" height="1" fill="#fff" fill-opacity="0.74"/><rect x="1410" y="0" width="1" height="2" fill="#fff" fill-opacity="0.93"/><rect x="1411" y="0" width="2" height="1" fill="#fff" fill-opacity="0.70"/><rect x="1411" y="1010" width="2" height="2" fill="#fff" fill-opacity="0.49"/><rect x="1413" y="1010" width="2" height="2" fill="#fff" fill-opacity="0.49"/><rect x="1415" y="1010" width="2" height="1" fill="#fff" fill-opacity="0.66"/><rect x="1418" y="0" width="1" height="1" fill="#fff" fill-opacity="0.93"/><rect x="1419" y="1" width="1" height="1" fill="#fff" fill-opacity="0.79"/><rect x="1419" y="1010" width="2" height="2" fill="#fff" fill-opacity="0.31"/><rect x="1420" y="0" width="1" height="2" fill="#fff" fill-opacity="0.89"/><rect x="1422" y="1" width="2" height="1" fill="#fff" fill-opacity="0.53"/><rect x="1425" y="0" width="2" height="1" fill="#fff" fill-opacity="0.96"/><rect x="1425" y="1010" width="1" height="1" fill="#fff" fill-opacity="0.59"/><rect x="1428" y="0" width="2" height="2" fill="#fff" fill-opacity="1.00"/><rect x="1428" y="1009" width="1" height="1" fill="#fff" fill-opacity="0.85"/><rect x="1431" y="1010" width="1" height="1" fill="#fff" fill-opacity="0.85"/><rect x="1432" y="1" width="2" height="1" fill="#fff" fill-opacity="0.71"/><rect x="1435" y="0" width="2" height="2" fill="#fff" fill-opacity="0.88"/><rect x="1435" y="1010" width="2" height="2" fill="#fff" fill-opacity="0.66"/><rect x="1436" y="1" width="2" height="2" fill="#fff" fill-opacity="0.43"/><rect x="1438" y="1009" width="2" height="2" fill="#fff" fill-opacity="0.44"/><rect x="1439" y="0" width="1" height="1" fill="#fff" fill-opacity="0.85"/><rect x="1442" y="0" width="2" height="1" fill="#fff" fill-opacity="0.69"/><rect x="1442" y="1009" width="1" height="2" fill="#fff" fill-opacity="0.39"/><rect x="1444" y="0" width="2" height="2" fill="#fff" fill-opacity="0.64"/><rect x="1445" y="0" width="1" height="2" fill="#fff" fill-opacity="0.58"/><rect x="1445" y="1009" width="1" height="1" fill="#fff" fill-opacity="0.39"/><rect x="1448" y="1" width="1" height="1" fill="#fff" fill-opacity="0.65"/><rect x="1451" y="0" width="1" height="1" fill="#fff" fill-opacity="0.68"/><rect x="1451" y="1010" width="1" height="1" fill="#fff" fill-opacity="0.34"/><rect x="1454" y="0" width="1" height="1" fill="#fff" fill-opacity="0.61"/><rect x="1454" y="1010" width="2" height="2" fill="#fff" fill-opacity="0.69"/><rect x="1456" y="1009" width="1" height="2" fill="#fff" fill-opacity="0.51"/><rect x="1461" y="1010" width="2" height="1" fill="#fff" fill-opacity="0.87"/><rect x="1464" y="1010" width="1" height="2" fill="#fff" fill-opacity="0.78"/><rect x="1465" y="0" width="2" height="1" fill="#fff" fill-opacity="0.57"/><rect x="1465" y="1009" width="2" height="2" fill="#fff" fill-opacity="0.78"/><rect x="1467" y="0" width="2" height="1" fill="#fff" fill-opacity="0.61"/><rect x="1467" y="1010" width="2" height="2" fill="#fff" fill-opacity="0.37"/><rect x="1469" y="1" width="2" height="2" fill="#fff" fill-opacity="0.41"/><rect x="1470" y="1" width="2" height="1" fill="#fff" fill-opacity="0.57"/><rect x="1470" y="1010" width="1" height="2" fill="#fff" fill-opacity="0.31"/><rect x="1471" y="1" width="1" height="1" fill="#fff" fill-opacity="0.59"/><rect x="1471" y="1010" width="1" height="1" fill="#fff" fill-opacity="0.74"/><rect x="1474" y="1009" width="2" height="1" fill="#fff" fill-opacity="0.76"/><rect x="1475" y="0" width="1" height="2" fill="#fff" fill-opacity="0.92"/><rect x="1475" y="1009" width="2" height="1" fill="#fff" fill-opacity="0.66"/><rect x="1477" y="0" width="1" height="1" fill="#fff" fill-opacity="0.42"/><rect x="1477" y="1010" width="2" height="1" fill="#fff" fill-opacity="0.37"/><rect x="1478" y="0" width="2" height="2" fill="#fff" fill-opacity="0.80"/><rect x="1480" y="0" width="1" height="2" fill="#fff" fill-opacity="0.65"/><rect x="1480" y="1010" width="1" height="1" fill="#fff" fill-opacity="0.40"/><rect x="1484" y="1" width="2" height="1" fill="#fff" fill-opacity="0.87"/><rect x="1484" y="1010" width="1" height="2" fill="#fff" fill-opacity="0.56"/><rect x="1485" y="1010" width="2" height="1" fill="#fff" fill-opacity="0.82"/><rect x="1488" y="0" width="1" height="2" fill="#fff" fill-opacity="0.49"/><rect x="1496" y="1" width="1" height="2" fill="#fff" fill-opacity="0.84"/><rect x="1496" y="1010" width="2" height="1" fill="#fff" fill-opacity="0.49"/><rect x="1498" y="0" width="2" height="1" fill="#fff" fill-opacity="0.99"/><rect x="1500" y="1010" width="1" height="1" fill="#fff" fill-opacity="0.64"/><rect x="1503" y="0" width="1" height="2" fill="#fff" fill-opacity="0.96"/><rect x="1504" y="0" width="2" height="2" fill="#fff" fill-opacity="0.94"/><rect x="1504" y="1010" width="2" height="1" fill="#fff" fill-opacity="0.35"/><rect x="1505" y="0" width="1" height="2" fill="#fff" fill-opacity="0.67"/><rect x="1507" y="0" width="2" height="2" fill="#fff" fill-opacity="0.46"/><rect x="1507" y="1010" width="1" height="1" fill="#fff" fill-opacity="0.34"/><rect x="1509" y="0" width="1" height="2" fill="#fff" fill-opacity="0.86"/><rect x="1512" y="1010" width="1" height="2" fill="#fff" fill-opacity="0.87"/><rect x="1513" y="1010" width="1" height="1" fill="#fff" fill-opacity="0.66"/><rect x="1518" y="1009" width="1" height="1" fill="#fff" fill-opacity="0.57"/><rect x="1519" y="0" width="1" height="2" fill="#fff" fill-opacity="0.76"/><rect x="1520" y="1010" width="1" height="1" fill="#fff" fill-opacity="0.69"/><rect x="1523" y="0" width="1" height="2" fill="#fff" fill-opacity="0.91"/><rect x="1523" y="1010" width="1" height="1" fill="#fff" fill-opacity="0.40"/><rect x="1526" y="0" width="2" height="2" fill="#fff" fill-opacity="0.72"/><rect x="1528" y="0" width="1" height="2" fill="#fff" fill-opacity="0.81"/><rect x="1529" y="1010" width="1" height="2" fill="#fff" fill-opacity="0.40"/><rect x="1532" y="0" width="1" height="1" fill="#fff" fill-opacity="0.95"/><rect x="1534" y="0" width="2" height="2" fill="#fff" fill-opacity="0.46"/><rect x="1534" y="1010" width="1" height="1" fill="#fff" fill-opacity="0.51"/><rect x="1535" y="0" width="1" height="2" fill="#fff" fill-opacity="0.75"/><rect x="1537" y="0" width="1" height="1" fill="#fff" fill-opacity="0.59"/><rect x="1537" y="1010" width="1" height="2" fill="#fff" fill-opacity="0.64"/><rect x="1540" y="1010" width="1" height="1" fill="#fff" fill-opacity="0.52"/><rect x="1543" y="0" width="2" height="1" fill="#fff" fill-opacity="0.83"/><rect x="1543" y="1010" width="1" height="1" fill="#fff" fill-opacity="0.63"/><rect x="1544" y="1" width="1" height="1" fill="#fff" fill-opacity="0.80"/><rect x="1548" y="1010" width="1" height="2" fill="#fff" fill-opacity="0.49"/><rect x="1551" y="1010" width="2" height="1" fill="#fff" fill-opacity="0.31"/><rect x="1553" y="0" width="1" height="2" fill="#fff" fill-opacity="0.80"/><rect x="1553" y="1010" width="1" height="1" fill="#fff" fill-opacity="0.66"/><rect x="1556" y="1010" width="1" height="1" fill="#fff" fill-opacity="0.56"/><rect x="1559" y="0" width="1" height="2" fill="#fff" fill-opacity="0.77"/><rect x="1560" y="0" width="2" height="1" fill="#fff" fill-opacity="0.62"/><rect x="1562" y="0" width="1" height="1" fill="#fff" fill-opacity="0.49"/><rect x="1562" y="1009" width="1" height="2" fill="#fff" fill-opacity="0.60"/><rect x="1565" y="0" width="1" height="2" fill="#fff" fill-opacity="0.73"/><rect x="1565" y="1009" width="1" height="2" fill="#fff" fill-opacity="0.38"/><rect x="1566" y="0" width="1" height="1" fill="#fff" fill-opacity="0.90"/><rect x="1566" y="1010" width="1" height="2" fill="#fff" fill-opacity="0.76"/><rect x="1568" y="1" width="1" height="1" fill="#fff" fill-opacity="0.76"/><rect x="1568" y="1009" width="1" height="1" fill="#fff" fill-opacity="0.76"/><rect x="1569" y="0" width="1" height="2" fill="#fff" fill-opacity="0.44"/><rect x="1571" y="0" width="1" height="2" fill="#fff" fill-opacity="0.66"/><rect x="1572" y="1009" width="2" height="1" fill="#fff" fill-opacity="0.60"/><rect x="1575" y="1010" width="1" height="2" fill="#fff" fill-opacity="0.60"/><rect x="1577" y="1" width="2" height="1" fill="#fff" fill-opacity="0.71"/><rect x="1577" y="1010" width="1" height="2" fill="#fff" fill-opacity="0.46"/><rect x="1579" y="0" width="1" height="1" fill="#fff" fill-opacity="0.80"/><rect x="1579" y="1010" width="1" height="2" fill="#fff" fill-opacity="0.90"/><rect x="1581" y="1" width="2" height="2" fill="#fff" fill-opacity="0.53"/><rect x="1581" y="1010" width="1" height="1" fill="#fff" fill-opacity="0.39"/><rect x="1582" y="0" width="1" height="1" fill="#fff" fill-opacity="0.63"/><rect x="1584" y="1" width="1" height="2" fill="#fff" fill-opacity="0.58"/><rect x="1586" y="0" width="1" height="2" fill="#fff" fill-opacity="0.48"/><rect x="1589" y="1" width="1" height="1" fill="#fff" fill-opacity="0.47"/><rect x="1589" y="1009" width="1" height="2" fill="#fff" fill-opacity="0.51"/><rect x="1592" y="1010" width="1" height="2" fill="#fff" fill-opacity="0.56"/><rect x="1593" y="1" width="2" height="2" fill="#fff" fill-opacity="0.92"/><rect x="1594" y="1009" width="1" height="2" fill="#fff" fill-opacity="0.36"/><rect x="1595" y="0" width="1" height="1" fill="#fff" fill-opacity="0.92"/><rect x="1600" y="1010" width="2" height="1" fill="#fff" fill-opacity="0.49"/><rect x="1601" y="0" width="1" height="2" fill="#fff" fill-opacity="0.61"/><rect x="1601" y="1009" width="2" height="2" fill="#fff" fill-opacity="0.70"/><rect x="1602" y="0" width="1" height="1" fill="#fff" fill-opacity="0.43"/><rect x="1602" y="1009" width="2" height="2" fill="#fff" fill-opacity="0.77"/><rect x="1605" y="1" width="2" height="2" fill="#fff" fill-opacity="0.73"/><rect x="1605" y="1010" width="1" height="2" fill="#fff" fill-opacity="0.59"/><rect x="1610" y="1009" width="1" height="1" fill="#fff" fill-opacity="0.80"/><rect x="1615" y="0" width="1" height="1" fill="#fff" fill-opacity="0.61"/><rect x="1615" y="1010" width="2" height="2" fill="#fff" fill-opacity="0.78"/><rect x="1616" y="0" width="1" height="1" fill="#fff" fill-opacity="0.69"/><rect x="1616" y="1010" width="1" height="1" fill="#fff" fill-opacity="0.73"/><rect x="1620" y="0" width="1" height="1" fill="#fff" fill-opacity="0.98"/><rect x="1620" y="1009" width="1" height="2" fill="#fff" fill-opacity="0.34"/><rect x="1623" y="1009" width="1" height="2" fill="#fff" fill-opacity="0.55"/><rect x="1624" y="1009" width="1" height="2" fill="#fff" fill-opacity="0.56"/><rect x="1627" y="0" width="1" height="1" fill="#fff" fill-opacity="0.84"/><rect x="1627" y="1010" width="1" height="1" fill="#fff" fill-opacity="0.71"/><rect x="1630" y="1010" width="2" height="1" fill="#fff" fill-opacity="0.48"/><rect x="1632" y="1" width="2" height="2" fill="#fff" fill-opacity="0.47"/><rect x="1632" y="1010" width="2" height="1" fill="#fff" fill-opacity="0.61"/><rect x="1633" y="0" width="1" height="2" fill="#fff" fill-opacity="0.95"/><rect x="1633" y="1009" width="1" height="2" fill="#fff" fill-opacity="0.89"/><rect x="1634" y="1010" width="2" height="1" fill="#fff" fill-opacity="0.53"/><rect x="1635" y="1" width="1" height="2" fill="#fff" fill-opacity="0.68"/><rect x="1637" y="1010" width="1" height="1" fill="#fff" fill-opacity="0.66"/><rect x="1641" y="1009" width="1" height="2" fill="#fff" fill-opacity="0.86"/><rect x="1642" y="0" width="2" height="1" fill="#fff" fill-opacity="0.44"/><rect x="1643" y="0" width="1" height="2" fill="#fff" fill-opacity="0.57"/><rect x="1646" y="1" width="1" height="1" fill="#fff" fill-opacity="0.71"/><rect x="1646" y="1010" width="1" height="1" fill="#fff" fill-opacity="0.43"/><rect x="1648" y="0" width="2" height="2" fill="#fff" fill-opacity="0.57"/><rect x="1648" y="1010" width="1" height="1" fill="#fff" fill-opacity="0.52"/><rect x="1651" y="1010" width="1" height="2" fill="#fff" fill-opacity="0.40"/><rect x="1652" y="1010" width="1" height="1" fill="#fff" fill-opacity="0.90"/><rect x="1653" y="1010" width="1" height="1" fill="#fff" fill-opacity="0.40"/><rect x="1656" y="0" width="2" height="1" fill="#fff" fill-opacity="0.42"/><rect x="1656" y="1010" width="2" height="2" fill="#fff" fill-opacity="0.71"/><rect x="1658" y="0" width="2" height="1" fill="#fff" fill-opacity="0.44"/><rect x="1658" y="1009" width="1" height="1" fill="#fff" fill-opacity="0.72"/><rect x="1661" y="0" width="2" height="2" fill="#fff" fill-opacity="0.84"/><rect x="1661" y="1010" width="1" height="2" fill="#fff" fill-opacity="0.71"/><rect x="1670" y="1010" width="1" height="2" fill="#fff" fill-opacity="0.63"/><rect x="1672" y="1" width="1" height="1" fill="#fff" fill-opacity="0.56"/><rect x="1674" y="0" width="1" height="1" fill="#fff" fill-opacity="0.90"/><rect x="1677" y="0" width="1" height="2" fill="#fff" fill-opacity="0.94"/><rect x="1677" y="1009" width="1" height="2" fill="#fff" fill-opacity="0.52"/><rect x="1678" y="1" width="1" height="1" fill="#fff" fill-opacity="0.50"/><rect x="1678" y="1010" width="1" height="1" fill="#fff" fill-opacity="0.82"/><rect x="1686" y="0" width="1" height="2" fill="#fff" fill-opacity="0.77"/><rect x="1687" y="1" width="1" height="2" fill="#fff" fill-opacity="0.87"/><rect x="1687" y="1009" width="1" height="2" fill="#fff" fill-opacity="0.46"/><rect x="1690" y="1" width="1" height="2" fill="#fff" fill-opacity="0.43"/><rect x="1690" y="1010" width="1" height="2" fill="#fff" fill-opacity="0.61"/><rect x="1693" y="1" width="2" height="2" fill="#fff" fill-opacity="0.64"/><rect x="1693" y="1010" width="2" height="2" fill="#fff" fill-opacity="0.39"/><rect x="1694" y="0" width="1" height="1" fill="#fff" fill-opacity="0.87"/><rect x="1694" y="1010" width="1" height="2" fill="#fff" fill-opacity="0.64"/><rect x="1695" y="0" width="2" height="1" fill="#fff" fill-opacity="0.69"/><rect x="1695" y="1010" width="1" height="2" fill="#fff" fill-opacity="0.56"/><rect x="1696" y="1009" width="2" height="1" fill="#fff" fill-opacity="0.72"/><rect x="1697" y="0" width="2" height="2" fill="#fff" fill-opacity="0.89"/><rect x="1697" y="1010" width="2" height="2" fill="#fff" fill-opacity="0.41"/><rect x="1698" y="0" width="2" height="1" fill="#fff" fill-opacity="0.59"/><rect x="1700" y="0" width="1" height="1" fill="#fff" fill-opacity="0.83"/><rect x="1701" y="1" width="1" height="2" fill="#fff" fill-opacity="0.79"/><rect x="1701" y="1009" width="1" height="1" fill="#fff" fill-opacity="0.57"/><rect x="1704" y="1" width="1" height="1" fill="#fff" fill-opacity="0.91"/><rect x="1707" y="1010" width="1" height="2" fill="#fff" fill-opacity="0.52"/><rect x="1710" y="1010" width="2" height="1" fill="#fff" fill-opacity="0.34"/><rect x="1713" y="1009" width="1" height="1" fill="#fff" fill-opacity="0.45"/><rect x="1714" y="0" width="1" height="1" fill="#fff" fill-opacity="0.58"/><rect x="1714" y="1010" width="1" height="2" fill="#fff" fill-opacity="0.37"/><rect x="1715" y="1010" width="1" height="2" fill="#fff" fill-opacity="0.72"/><rect x="1716" y="1009" width="1" height="2" fill="#fff" fill-opacity="0.55"/><rect x="1719" y="0" width="1" height="1" fill="#fff" fill-opacity="0.77"/><rect x="1722" y="0" width="2" height="2" fill="#fff" fill-opacity="0.56"/><rect x="1724" y="0" width="2" height="1" fill="#fff" fill-opacity="0.68"/><rect x="1724" y="1009" width="2" height="1" fill="#fff" fill-opacity="0.35"/><rect x="1726" y="1009" width="1" height="2" fill="#fff" fill-opacity="0.68"/><rect x="1729" y="0" width="1" height="1" fill="#fff" fill-opacity="0.92"/><rect x="1729" y="1010" width="2" height="1" fill="#fff" fill-opacity="0.39"/><rect x="1732" y="1" width="1" height="1" fill="#fff" fill-opacity="0.60"/><rect x="1732" y="1010" width="1" height="2" fill="#fff" fill-opacity="0.33"/><rect x="1734" y="1" width="2" height="1" fill="#fff" fill-opacity="0.47"/><rect x="1735" y="1010" width="1" height="1" fill="#fff" fill-opacity="0.67"/><rect x="1738" y="0" width="1" height="1" fill="#fff" fill-opacity="0.71"/><rect x="1738" y="1010" width="1" height="1" fill="#fff" fill-opacity="0.56"/><rect x="1739" y="0" width="1" height="2" fill="#fff" fill-opacity="0.79"/><rect x="1741" y="1" width="1" height="1" fill="#fff" fill-opacity="0.75"/><rect x="1743" y="1010" width="1" height="2" fill="#fff" fill-opacity="0.52"/><rect x="1746" y="0" width="1" height="2" fill="#fff" fill-opacity="0.94"/><rect x="1746" y="1010" width="1" height="2" fill="#fff" fill-opacity="0.35"/><rect x="1749" y="0" width="2" height="2" fill="#fff" fill-opacity="0.83"/><rect x="1749" y="1009" width="1" height="2" fill="#fff" fill-opacity="0.60"/><rect x="1750" y="1010" width="1" height="1" fill="#fff" fill-opacity="0.32"/><rect x="1753" y="0" width="1" height="1" fill="#fff" fill-opacity="0.76"/><rect x="1753" y="1010" width="1" height="2" fill="#fff" fill-opacity="0.45"/><rect x="1754" y="0" width="2" height="1" fill="#fff" fill-opacity="0.73"/><rect x="1756" y="0" width="1" height="2" fill="#fff" fill-opacity="0.44"/><rect x="1762" y="0" width="2" height="2" fill="#fff" fill-opacity="0.41"/><rect x="1762" y="1010" width="1" height="2" fill="#fff" fill-opacity="0.68"/><rect x="1765" y="1" width="1" height="2" fill="#fff" fill-opacity="0.54"/><rect x="1765" y="1010" width="2" height="2" fill="#fff" fill-opacity="0.73"/><rect x="1767" y="1" width="1" height="1" fill="#fff" fill-opacity="0.99"/><rect x="1770" y="1" width="2" height="1" fill="#fff" fill-opacity="0.89"/><rect x="1770" y="1009" width="1" height="1" fill="#fff" fill-opacity="0.52"/><rect x="1773" y="1010" width="1" height="1" fill="#fff" fill-opacity="0.48"/><rect x="1774" y="1" width="2" height="2" fill="#fff" fill-opacity="0.43"/><rect x="1774" y="1010" width="1" height="2" fill="#fff" fill-opacity="0.42"/><rect x="1780" y="1" width="2" height="2" fill="#fff" fill-opacity="0.71"/><rect x="1780" y="1009" width="2" height="2" fill="#fff" fill-opacity="0.90"/><rect x="1782" y="0" width="1" height="1" fill="#fff" fill-opacity="0.83"/><rect x="1784" y="1010" width="1" height="2" fill="#fff" fill-opacity="0.49"/><rect x="1788" y="1" width="2" height="1" fill="#fff" fill-opacity="0.69"/><rect x="1791" y="1" width="2" height="1" fill="#fff" fill-opacity="0.99"/><rect x="1793" y="0" width="1" height="2" fill="#fff" fill-opacity="0.95"/><rect x="1794" y="0" width="1" height="2" fill="#fff" fill-opacity="0.87"/><rect x="1794" y="1009" width="1" height="2" fill="#fff" fill-opacity="0.44"/><rect x="1797" y="1" width="1" height="1" fill="#fff" fill-opacity="0.55"/><rect x="1797" y="1009" width="1" height="1" fill="#fff" fill-opacity="0.83"/><rect x="1798" y="1010" width="2" height="2" fill="#fff" fill-opacity="0.63"/><rect x="1800" y="1" width="1" height="2" fill="#fff" fill-opacity="0.61"/><rect x="1800" y="1009" width="2" height="2" fill="#fff" fill-opacity="0.66"/><rect x="1801" y="1010" width="1" height="2" fill="#fff" fill-opacity="0.60"/><rect x="1802" y="1" width="2" height="2" fill="#fff" fill-opacity="0.80"/><rect x="1805" y="0" width="1" height="2" fill="#fff" fill-opacity="0.95"/><rect x="1806" y="1010" width="2" height="1" fill="#fff" fill-opacity="0.43"/><rect x="1807" y="0" width="1" height="2" fill="#fff" fill-opacity="1.00"/><rect x="1807" y="1009" width="2" height="1" fill="#fff" fill-opacity="0.79"/><rect x="1808" y="0" width="1" height="2" fill="#fff" fill-opacity="0.42"/><rect x="1811" y="0" width="1" height="1" fill="#fff" fill-opacity="0.91"/><rect x="1814" y="0" width="1" height="2" fill="#fff" fill-opacity="0.65"/><rect x="1814" y="1010" width="1" height="2" fill="#fff" fill-opacity="0.32"/><rect x="1816" y="0" width="1" height="1" fill="#fff" fill-opacity="0.46"/><rect x="1816" y="1010" width="1" height="2" fill="#fff" fill-opacity="0.88"/><rect x="1817" y="1" width="1" height="1" fill="#fff" fill-opacity="0.98"/><rect x="1819" y="1010" width="2" height="2" fill="#fff" fill-opacity="0.36"/><rect x="1820" y="0" width="1" height="2" fill="#fff" fill-opacity="0.88"/><rect x="1820" y="1009" width="2" height="2" fill="#fff" fill-opacity="0.82"/><rect x="1822" y="0" width="2" height="2" fill="#fff" fill-opacity="0.80"/><rect x="1822" y="1010" width="1" height="2" fill="#fff" fill-opacity="0.65"/><rect x="1824" y="1" width="2" height="1" fill="#fff" fill-opacity="0.60"/><rect x="1824" y="1010" width="1" height="1" fill="#fff" fill-opacity="0.56"/><rect x="1827" y="1009" width="2" height="2" fill="#fff" fill-opacity="0.48"/><rect x="1830" y="0" width="2" height="1" fill="#fff" fill-opacity="0.49"/><rect x="1833" y="0" width="1" height="1" fill="#fff" fill-opacity="0.88"/><rect x="1833" y="1010" width="1" height="2" fill="#fff" fill-opacity="0.67"/><rect x="1835" y="1" width="1" height="2" fill="#fff" fill-opacity="0.49"/><rect x="1835" y="1010" width="1" height="2" fill="#fff" fill-opacity="0.31"/><rect x="1837" y="1009" width="1" height="1" fill="#fff" fill-opacity="0.54"/><rect x="1842" y="0" width="1" height="1" fill="#fff" fill-opacity="0.96"/><rect x="1842" y="1009" width="2" height="1" fill="#fff" fill-opacity="0.81"/><rect x="1844" y="0" width="1" height="1" fill="#fff" fill-opacity="0.53"/><rect x="1846" y="0" width="1" height="2" fill="#fff" fill-opacity="0.46"/><rect x="1850" y="1009" width="1" height="2" fill="#fff" fill-opacity="0.71"/><rect x="1853" y="0" width="1" height="1" fill="#fff" fill-opacity="0.48"/><rect x="1854" y="1" width="1" height="1" fill="#fff" fill-opacity="0.52"/><rect x="1854" y="1009" width="1" height="2" fill="#fff" fill-opacity="0.36"/><rect x="1859" y="0" width="1" height="2" fill="#fff" fill-opacity="0.64"/><rect x="1859" y="1009" width="1" height="1" fill="#fff" fill-opacity="0.35"/><rect x="1862" y="0" width="1" height="2" fill="#fff" fill-opacity="0.80"/><rect x="1864" y="1010" width="1" height="1" fill="#fff" fill-opacity="0.45"/><rect x="1869" y="0" width="1" height="1" fill="#fff" fill-opacity="0.58"/><rect x="1869" y="1010" width="1" height="1" fill="#fff" fill-opacity="0.56"/><rect x="1871" y="1" width="1" height="2" fill="#fff" fill-opacity="0.63"/><rect x="1872" y="1" width="1" height="2" fill="#fff" fill-opacity="0.55"/><rect x="1872" y="1009" width="1" height="1" fill="#fff" fill-opacity="0.61"/><rect x="1873" y="1010" width="1" height="2" fill="#fff" fill-opacity="0.68"/><rect x="1878" y="1010" width="1" height="2" fill="#fff" fill-opacity="0.49"/><rect x="1880" y="1" width="1" height="1" fill="#fff" fill-opacity="0.50"/><rect x="1880" y="1010" width="1" height="2" fill="#fff" fill-opacity="0.73"/><rect x="1881" y="1" width="1" height="2" fill="#fff" fill-opacity="0.93"/><rect x="1883" y="1010" width="2" height="1" fill="#fff" fill-opacity="0.72"/><rect x="1886" y="1009" width="1" height="2" fill="#fff" fill-opacity="0.42"/><rect x="1888" y="1" width="1" height="2" fill="#fff" fill-opacity="0.62"/><rect x="1888" y="1009" width="1" height="1" fill="#fff" fill-opacity="0.65"/><rect x="1893" y="0" width="2" height="1" fill="#fff" fill-opacity="0.54"/><rect x="1896" y="0" width="1" height="2" fill="#fff" fill-opacity="0.63"/><rect x="1899" y="0" width="2" height="1" fill="#fff" fill-opacity="0.80"/><rect x="1900" y="0" width="1" height="1" fill="#fff" fill-opacity="0.70"/><rect x="1900" y="1010" width="1" height="1" fill="#fff" fill-opacity="0.33"/><rect x="1901" y="0" width="2" height="1" fill="#fff" fill-opacity="0.63"/><rect x="1904" y="0" width="1" height="2" fill="#fff" fill-opacity="0.79"/><rect x="1904" y="1009" width="1" height="2" fill="#fff" fill-opacity="0.49"/><rect x="1907" y="1" width="1" height="2" fill="#fff" fill-opacity="0.67"/><rect x="1907" y="1009" width="1" height="1" fill="#fff" fill-opacity="0.40"/><rect x="1910" y="1" width="1" height="1" fill="#fff" fill-opacity="0.51"/><rect x="1913" y="0" width="2" height="1" fill="#fff" fill-opacity="0.73"/><rect x="1913" y="1010" width="1" height="1" fill="#fff" fill-opacity="0.31"/><rect x="1919" y="0" width="1" height="1" fill="#fff" fill-opacity="0.58"/><rect x="1921" y="0" width="2" height="2" fill="#fff" fill-opacity="0.89"/><rect x="1923" y="0" width="2" height="1" fill="#fff" fill-opacity="0.75"/><rect x="1926" y="1009" width="1" height="1" fill="#fff" fill-opacity="0.59"/><rect x="1927" y="0" width="1" height="2" fill="#fff" fill-opacity="0.87"/><rect x="1930" y="3" width="2" height="2" fill="#fff" fill-opacity="0.51"/><rect x="1929" y="4" width="1" height="1" fill="#fff" fill-opacity="0.61"/><rect x="0" y="7" width="1" height="1" fill="#fff" fill-opacity="0.84"/><rect x="1930" y="7" width="1" height="1" fill="#fff" fill-opacity="0.58"/><rect x="1" y="10" width="2" height="1" fill="#fff" fill-opacity="0.86"/><rect x="1" y="13" width="1" height="1" fill="#fff" fill-opacity="0.60"/><rect x="1929" y="13" width="2" height="1" fill="#fff" fill-opacity="0.94"/><rect x="0" y="16" width="1" height="1" fill="#fff" fill-opacity="0.62"/><rect x="0" y="18" width="2" height="1" fill="#fff" fill-opacity="0.45"/><rect x="1" y="20" width="1" height="1" fill="#fff" fill-opacity="0.65"/><rect x="0" y="22" width="2" height="1" fill="#fff" fill-opacity="0.95"/><rect x="1930" y="22" width="1" height="1" fill="#fff" fill-opacity="0.96"/><rect x="1" y="23" width="1" height="1" fill="#fff" fill-opacity="0.72"/><rect x="1929" y="25" width="1" height="2" fill="#fff" fill-opacity="0.78"/><rect x="0" y="27" width="1" height="1" fill="#fff" fill-opacity="0.83"/><rect x="1930" y="27" width="2" height="1" fill="#fff" fill-opacity="0.69"/><rect x="0" y="30" width="1" height="2" fill="#fff" fill-opacity="0.77"/><rect x="1" y="31" width="2" height="1" fill="#fff" fill-opacity="0.45"/><rect x="1930" y="31" width="1" height="1" fill="#fff" fill-opacity="0.41"/><rect x="1930" y="33" width="1" height="2" fill="#fff" fill-opacity="0.91"/><rect x="0" y="36" width="2" height="1" fill="#fff" fill-opacity="0.46"/><rect x="1929" y="39" width="2" height="1" fill="#fff" fill-opacity="0.85"/><rect x="1" y="40" width="2" height="1" fill="#fff" fill-opacity="0.68"/><rect x="0" y="43" width="1" height="1" fill="#fff" fill-opacity="0.81"/><rect x="1930" y="43" width="1" height="2" fill="#fff" fill-opacity="0.45"/><rect x="1929" y="46" width="1" height="2" fill="#fff" fill-opacity="0.95"/><rect x="0" y="50" width="2" height="2" fill="#fff" fill-opacity="0.56"/><rect x="1929" y="50" width="2" height="1" fill="#fff" fill-opacity="0.84"/><rect x="0" y="51" width="2" height="1" fill="#fff" fill-opacity="0.69"/><rect x="1929" y="51" width="2" height="1" fill="#fff" fill-opacity="0.82"/><rect x="1930" y="54" width="1" height="1" fill="#fff" fill-opacity="0.82"/><rect x="1930" y="56" width="2" height="1" fill="#fff" fill-opacity="0.70"/><rect x="0" y="58" width="1" height="1" fill="#fff" fill-opacity="0.68"/><rect x="1" y="61" width="1" height="2" fill="#fff" fill-opacity="0.53"/><rect x="1930" y="61" width="1" height="1" fill="#fff" fill-opacity="0.54"/><rect x="0" y="62" width="1" height="1" fill="#fff" fill-opacity="0.69"/><rect x="1930" y="65" width="2" height="2" fill="#fff" fill-opacity="0.78"/><rect x="1" y="66" width="2" height="1" fill="#fff" fill-opacity="0.50"/><rect x="1929" y="66" width="2" height="1" fill="#fff" fill-opacity="0.84"/><rect x="1" y="68" width="2" height="2" fill="#fff" fill-opacity="0.71"/><rect x="1" y="71" width="1" height="2" fill="#fff" fill-opacity="0.56"/><rect x="1930" y="71" width="2" height="2" fill="#fff" fill-opacity="0.43"/><rect x="0" y="73" width="1" height="1" fill="#fff" fill-opacity="0.54"/><rect x="1930" y="73" width="2" height="1" fill="#fff" fill-opacity="0.66"/><rect x="1" y="75" width="1" height="1" fill="#fff" fill-opacity="0.41"/><rect x="0" y="77" width="1" height="1" fill="#fff" fill-opacity="0.42"/><rect x="1929" y="77" width="1" height="2" fill="#fff" fill-opacity="0.57"/><rect x="1930" y="80" width="2" height="1" fill="#fff" fill-opacity="0.63"/><rect x="0" y="81" width="1" height="1" fill="#fff" fill-opacity="0.76"/><rect x="0" y="85" width="1" height="2" fill="#fff" fill-opacity="0.89"/><rect x="1" y="90" width="1" height="1" fill="#fff" fill-opacity="0.65"/><rect x="1930" y="90" width="1" height="2" fill="#fff" fill-opacity="0.54"/><rect x="0" y="92" width="1" height="1" fill="#fff" fill-opacity="0.77"/><rect x="1930" y="95" width="1" height="1" fill="#fff" fill-opacity="0.92"/><rect x="0" y="96" width="1" height="2" fill="#fff" fill-opacity="0.70"/><rect x="1" y="98" width="1" height="1" fill="#fff" fill-opacity="0.92"/><rect x="1929" y="98" width="2" height="1" fill="#fff" fill-opacity="0.95"/><rect x="1" y="101" width="1" height="1" fill="#fff" fill-opacity="0.56"/><rect x="1930" y="101" width="1" height="2" fill="#fff" fill-opacity="0.52"/><rect x="0" y="103" width="2" height="1" fill="#fff" fill-opacity="0.99"/><rect x="1930" y="103" width="1" height="1" fill="#fff" fill-opacity="0.90"/><rect x="1" y="106" width="2" height="2" fill="#fff" fill-opacity="0.52"/><rect x="0" y="107" width="2" height="2" fill="#fff" fill-opacity="0.72"/><rect x="1929" y="107" width="2" height="2" fill="#fff" fill-opacity="0.86"/><rect x="1" y="109" width="2" height="1" fill="#fff" fill-opacity="0.44"/><rect x="1929" y="109" width="1" height="1" fill="#fff" fill-opacity="0.73"/><rect x="0" y="111" width="2" height="1" fill="#fff" fill-opacity="0.81"/><rect x="1929" y="115" width="1" height="2" fill="#fff" fill-opacity="0.55"/><rect x="1" y="118" width="2" height="1" fill="#fff" fill-opacity="0.55"/><rect x="0" y="120" width="2" height="1" fill="#fff" fill-opacity="0.64"/><rect x="0" y="123" width="1" height="2" fill="#fff" fill-opacity="0.79"/><rect x="1" y="125" width="1" height="1" fill="#fff" fill-opacity="0.99"/><rect x="1930" y="125" width="2" height="1" fill="#fff" fill-opacity="0.74"/><rect x="0" y="128" width="1" height="2" fill="#fff" fill-opacity="0.50"/><rect x="0" y="131" width="1" height="2" fill="#fff" fill-opacity="0.92"/><rect x="1929" y="131" width="1" height="1" fill="#fff" fill-opacity="0.62"/><rect x="1" y="134" width="2" height="2" fill="#fff" fill-opacity="0.68"/><rect x="1929" y="134" width="1" height="2" fill="#fff" fill-opacity="0.59"/><rect x="0" y="135" width="1" height="1" fill="#fff" fill-opacity="0.58"/><rect x="1929" y="138" width="2" height="2" fill="#fff" fill-opacity="0.49"/><rect x="0" y="141" width="1" height="1" fill="#fff" fill-opacity="0.50"/><rect x="1929" y="141" width="2" height="1" fill="#fff" fill-opacity="0.48"/><rect x="0" y="143" width="2" height="1" fill="#fff" fill-opacity="0.72"/><rect x="1" y="148" width="1" height="2" fill="#fff" fill-opacity="0.55"/><rect x="1930" y="148" width="2" height="1" fill="#fff" fill-opacity="0.41"/><rect x="1" y="149" width="2" height="1" fill="#fff" fill-opacity="0.59"/><rect x="1930" y="149" width="1" height="1" fill="#fff" fill-opacity="0.61"/><rect x="0" y="152" width="2" height="2" fill="#fff" fill-opacity="0.89"/><rect x="1930" y="152" width="1" height="2" fill="#fff" fill-opacity="0.59"/><rect x="1" y="153" width="2" height="2" fill="#fff" fill-opacity="0.92"/><rect x="0" y="156" width="2" height="1" fill="#fff" fill-opacity="0.93"/><rect x="1930" y="161" width="2" height="2" fill="#fff" fill-opacity="0.95"/><rect x="1" y="162" width="1" height="1" fill="#fff" fill-opacity="0.95"/><rect x="1929" y="162" width="2" height="2" fill="#fff" fill-opacity="0.77"/><rect x="0" y="165" width="1" height="1" fill="#fff" fill-opacity="0.41"/><rect x="1929" y="165" width="2" height="2" fill="#fff" fill-opacity="0.93"/><rect x="1" y="166" width="2" height="1" fill="#fff" fill-opacity="0.89"/><rect x="1929" y="166" width="2" height="1" fill="#fff" fill-opacity="0.74"/><rect x="1930" y="168" width="1" height="2" fill="#fff" fill-opacity="0.77"/><rect x="1" y="169" width="2" height="2" fill="#fff" fill-opacity="0.40"/><rect x="1930" y="172" width="1" height="1" fill="#fff" fill-opacity="0.60"/><rect x="1930" y="175" width="1" height="2" fill="#fff" fill-opacity="0.70"/><rect x="0" y="176" width="2" height="1" fill="#fff" fill-opacity="0.54"/><rect x="1" y="179" width="2" height="2" fill="#fff" fill-opacity="0.59"/><rect x="1" y="181" width="1" height="1" fill="#fff" fill-opacity="0.45"/><rect x="1930" y="181" width="1" height="2" fill="#fff" fill-opacity="0.65"/><rect x="0" y="185" width="1" height="1" fill="#fff" fill-opacity="0.56"/><rect x="1930" y="185" width="2" height="1" fill="#fff" fill-opacity="0.95"/><rect x="1" y="188" width="2" height="2" fill="#fff" fill-opacity="0.74"/><rect x="0" y="189" width="2" height="1" fill="#fff" fill-opacity="0.42"/><rect x="1930" y="189" width="2" height="1" fill="#fff" fill-opacity="0.78"/><rect x="1930" y="194" width="1" height="1" fill="#fff" fill-opacity="0.40"/><rect x="1929" y="196" width="2" height="1" fill="#fff" fill-opacity="0.95"/><rect x="1929" y="198" width="1" height="1" fill="#fff" fill-opacity="0.73"/><rect x="0" y="201" width="1" height="1" fill="#fff" fill-opacity="0.62"/><rect x="0" y="204" width="2" height="2" fill="#fff" fill-opacity="0.42"/><rect x="1" y="207" width="2" height="2" fill="#fff" fill-opacity="0.55"/><rect x="0" y="208" width="2" height="1" fill="#fff" fill-opacity="0.41"/><rect x="1929" y="208" width="1" height="2" fill="#fff" fill-opacity="0.83"/><rect x="1" y="211" width="2" height="1" fill="#fff" fill-opacity="0.72"/><rect x="1929" y="211" width="1" height="1" fill="#fff" fill-opacity="0.85"/><rect x="0" y="213" width="1" height="2" fill="#fff" fill-opacity="0.72"/><rect x="1930" y="213" width="2" height="2" fill="#fff" fill-opacity="0.68"/><rect x="1" y="215" width="1" height="1" fill="#fff" fill-opacity="0.92"/><rect x="1930" y="215" width="1" height="1" fill="#fff" fill-opacity="0.88"/><rect x="0" y="217" width="2" height="2" fill="#fff" fill-opacity="0.58"/><rect x="1930" y="217" width="1" height="2" fill="#fff" fill-opacity="0.73"/><rect x="1" y="218" width="1" height="2" fill="#fff" fill-opacity="0.40"/><rect x="1929" y="221" width="2" height="1" fill="#fff" fill-opacity="0.54"/><rect x="0" y="224" width="1" height="1" fill="#fff" fill-opacity="0.78"/><rect x="1929" y="224" width="1" height="1" fill="#fff" fill-opacity="0.66"/><rect x="0" y="225" width="2" height="1" fill="#fff" fill-opacity="0.88"/><rect x="1929" y="225" width="2" height="1" fill="#fff" fill-opacity="0.88"/><rect x="1" y="226" width="1" height="1" fill="#fff" fill-opacity="0.74"/><rect x="1929" y="226" width="1" height="2" fill="#fff" fill-opacity="0.88"/><rect x="1" y="227" width="2" height="1" fill="#fff" fill-opacity="0.99"/><rect x="1929" y="227" width="2" height="1" fill="#fff" fill-opacity="0.51"/><rect x="0" y="229" width="1" height="1" fill="#fff" fill-opacity="0.62"/><rect x="1930" y="229" width="1" height="1" fill="#fff" fill-opacity="0.67"/><rect x="0" y="231" width="2" height="2" fill="#fff" fill-opacity="0.79"/><rect x="0" y="232" width="1" height="1" fill="#fff" fill-opacity="0.58"/><rect x="1930" y="232" width="2" height="2" fill="#fff" fill-opacity="0.98"/><rect x="0" y="235" width="1" height="2" fill="#fff" fill-opacity="0.42"/><rect x="1929" y="235" width="1" height="1" fill="#fff" fill-opacity="0.85"/><rect x="0" y="237" width="2" height="2" fill="#fff" fill-opacity="0.77"/><rect x="1930" y="237" width="1" height="1" fill="#fff" fill-opacity="0.96"/><rect x="0" y="240" width="1" height="2" fill="#fff" fill-opacity="0.82"/><rect x="1930" y="241" width="2" height="2" fill="#fff" fill-opacity="0.66"/><rect x="1" y="245" width="1" height="1" fill="#fff" fill-opacity="0.90"/><rect x="1" y="248" width="2" height="2" fill="#fff" fill-opacity="0.68"/><rect x="1930" y="248" width="1" height="1" fill="#fff" fill-opacity="0.86"/><rect x="0" y="250" width="2" height="1" fill="#fff" fill-opacity="0.88"/><rect x="1929" y="250" width="2" height="1" fill="#fff" fill-opacity="0.93"/><rect x="1929" y="253" width="2" height="1" fill="#fff" fill-opacity="0.47"/><rect x="1" y="258" width="1" height="2" fill="#fff" fill-opacity="0.86"/><rect x="0" y="259" width="1" height="1" fill="#fff" fill-opacity="0.59"/><rect x="1929" y="259" width="2" height="1" fill="#fff" fill-opacity="0.80"/><rect x="1930" y="262" width="2" height="2" fill="#fff" fill-opacity="0.40"/><rect x="0" y="263" width="1" height="2" fill="#fff" fill-opacity="0.67"/><rect x="0" y="264" width="2" height="2" fill="#fff" fill-opacity="0.54"/><rect x="0" y="266" width="1" height="1" fill="#fff" fill-opacity="0.72"/><rect x="1930" y="266" width="1" height="2" fill="#fff" fill-opacity="0.82"/><rect x="1" y="267" width="1" height="2" fill="#fff" fill-opacity="0.72"/><rect x="0" y="269" width="2" height="1" fill="#fff" fill-opacity="0.79"/><rect x="1930" y="269" width="1" height="1" fill="#fff" fill-opacity="0.56"/><rect x="0" y="272" width="1" height="2" fill="#fff" fill-opacity="0.54"/><rect x="1930" y="272" width="2" height="2" fill="#fff" fill-opacity="0.40"/><rect x="1929" y="275" width="1" height="2" fill="#fff" fill-opacity="0.79"/><rect x="1929" y="276" width="1" height="2" fill="#fff" fill-opacity="0.56"/><rect x="1930" y="278" width="1" height="1" fill="#fff" fill-opacity="0.48"/><rect x="0" y="280" width="1" height="1" fill="#fff" fill-opacity="0.70"/><rect x="1930" y="280" width="2" height="2" fill="#fff" fill-opacity="0.40"/><rect x="0" y="281" width="2" height="2" fill="#fff" fill-opacity="0.52"/><rect x="1" y="282" width="2" height="2" fill="#fff" fill-opacity="0.99"/><rect x="1929" y="282" width="1" height="2" fill="#fff" fill-opacity="0.76"/><rect x="1" y="284" width="1" height="1" fill="#fff" fill-opacity="0.90"/><rect x="0" y="286" width="1" height="1" fill="#fff" fill-opacity="0.61"/><rect x="1930" y="286" width="2" height="1" fill="#fff" fill-opacity="0.56"/><rect x="0" y="289" width="1" height="1" fill="#fff" fill-opacity="0.63"/><rect x="1930" y="289" width="1" height="1" fill="#fff" fill-opacity="0.48"/><rect x="1" y="291" width="1" height="2" fill="#fff" fill-opacity="0.87"/><rect x="0" y="292" width="1" height="1" fill="#fff" fill-opacity="0.51"/><rect x="1930" y="292" width="2" height="2" fill="#fff" fill-opacity="0.93"/><rect x="1" y="296" width="1" height="1" fill="#fff" fill-opacity="0.80"/><rect x="1930" y="296" width="1" height="1" fill="#fff" fill-opacity="0.86"/><rect x="1930" y="297" width="2" height="2" fill="#fff" fill-opacity="0.64"/><rect x="1" y="299" width="1" height="2" fill="#fff" fill-opacity="0.72"/><rect x="1930" y="302" width="1" height="1" fill="#fff" fill-opacity="0.50"/><rect x="0" y="304" width="2" height="1" fill="#fff" fill-opacity="0.53"/><rect x="1930" y="306" width="2" height="1" fill="#fff" fill-opacity="0.88"/><rect x="1930" y="311" width="1" height="2" fill="#fff" fill-opacity="0.68"/><rect x="1930" y="314" width="2" height="1" fill="#fff" fill-opacity="0.44"/><rect x="0" y="315" width="2" height="2" fill="#fff" fill-opacity="0.57"/><rect x="1930" y="315" width="1" height="1" fill="#fff" fill-opacity="0.41"/><rect x="0" y="318" width="2" height="1" fill="#fff" fill-opacity="0.61"/><rect x="1930" y="318" width="2" height="1" fill="#fff" fill-opacity="0.76"/><rect x="0" y="319" width="2" height="1" fill="#fff" fill-opacity="0.64"/><rect x="1930" y="319" width="2" height="2" fill="#fff" fill-opacity="0.75"/><rect x="1929" y="320" width="2" height="2" fill="#fff" fill-opacity="0.42"/><rect x="1" y="321" width="1" height="2" fill="#fff" fill-opacity="0.59"/><rect x="1930" y="321" width="2" height="1" fill="#fff" fill-opacity="0.95"/><rect x="1" y="323" width="1" height="1" fill="#fff" fill-opacity="0.69"/><rect x="1930" y="323" width="1" height="1" fill="#fff" fill-opacity="0.68"/><rect x="1930" y="324" width="2" height="1" fill="#fff" fill-opacity="0.47"/><rect x="0" y="325" width="2" height="1" fill="#fff" fill-opacity="0.93"/><rect x="1930" y="325" width="1" height="1" fill="#fff" fill-opacity="0.48"/><rect x="1930" y="326" width="1" height="1" fill="#fff" fill-opacity="0.69"/><rect x="0" y="328" width="2" height="2" fill="#fff" fill-opacity="0.95"/><rect x="1929" y="331" width="2" height="2" fill="#fff" fill-opacity="0.91"/><rect x="1929" y="333" width="1" height="2" fill="#fff" fill-opacity="0.71"/><rect x="1929" y="336" width="1" height="1" fill="#fff" fill-opacity="0.83"/><rect x="0" y="339" width="1" height="1" fill="#fff" fill-opacity="0.99"/><rect x="1930" y="339" width="2" height="1" fill="#fff" fill-opacity="0.49"/><rect x="1929" y="342" width="1" height="1" fill="#fff" fill-opacity="0.50"/><rect x="1" y="344" width="2" height="1" fill="#fff" fill-opacity="0.51"/><rect x="1930" y="344" width="1" height="2" fill="#fff" fill-opacity="0.69"/><rect x="1929" y="345" width="1" height="2" fill="#fff" fill-opacity="0.93"/><rect x="0" y="346" width="1" height="2" fill="#fff" fill-opacity="0.45"/><rect x="1930" y="346" width="2" height="1" fill="#fff" fill-opacity="0.83"/><rect x="1930" y="347" width="1" height="1" fill="#fff" fill-opacity="0.75"/><rect x="1930" y="349" width="1" height="1" fill="#fff" fill-opacity="0.64"/><rect x="0" y="351" width="1" height="1" fill="#fff" fill-opacity="0.92"/><rect x="1930" y="351" width="1" height="2" fill="#fff" fill-opacity="0.69"/><rect x="0" y="352" width="1" height="2" fill="#fff" fill-opacity="0.48"/><rect x="0" y="355" width="1" height="1" fill="#fff" fill-opacity="0.56"/><rect x="1929" y="355" width="1" height="1" fill="#fff" fill-opacity="0.94"/><rect x="0" y="362" width="1" height="1" fill="#fff" fill-opacity="0.51"/><rect x="1930" y="362" width="1" height="1" fill="#fff" fill-opacity="0.55"/><rect x="0" y="364" width="2" height="1" fill="#fff" fill-opacity="0.75"/><rect x="1930" y="364" width="2" height="1" fill="#fff" fill-opacity="0.62"/><rect x="0" y="366" width="2" height="1" fill="#fff" fill-opacity="0.43"/><rect x="1" y="369" width="1" height="1" fill="#fff" fill-opacity="0.92"/><rect x="1930" y="369" width="2" height="1" fill="#fff" fill-opacity="0.95"/><rect x="0" y="370" width="1" height="2" fill="#fff" fill-opacity="0.42"/><rect x="1930" y="372" width="2" height="1" fill="#fff" fill-opacity="0.48"/><rect x="1" y="375" width="1" height="1" fill="#fff" fill-opacity="0.91"/><rect x="1930" y="377" width="1" height="1" fill="#fff" fill-opacity="0.62"/><rect x="1929" y="378" width="1" height="1" fill="#fff" fill-opacity="0.71"/><rect x="1" y="379" width="2" height="1" fill="#fff" fill-opacity="0.73"/><rect x="0" y="381" width="2" height="1" fill="#fff" fill-opacity="0.68"/><rect x="0" y="383" width="2" height="1" fill="#fff" fill-opacity="0.45"/><rect x="1930" y="383" width="2" height="1" fill="#fff" fill-opacity="0.96"/><rect x="0" y="384" width="2" height="2" fill="#fff" fill-opacity="0.63"/><rect x="1930" y="384" width="1" height="1" fill="#fff" fill-opacity="0.63"/><rect x="1" y="388" width="1" height="2" fill="#fff" fill-opacity="0.87"/><rect x="1930" y="388" width="1" height="1" fill="#fff" fill-opacity="0.68"/><rect x="0" y="390" width="1" height="2" fill="#fff" fill-opacity="0.82"/><rect x="1929" y="390" width="2" height="1" fill="#fff" fill-opacity="0.76"/><rect x="0" y="392" width="1" height="1" fill="#fff" fill-opacity="0.83"/><rect x="0" y="395" width="1" height="1" fill="#fff" fill-opacity="0.87"/><rect x="1930" y="395" width="2" height="1" fill="#fff" fill-opacity="0.99"/><rect x="1930" y="397" width="1" height="1" fill="#fff" fill-opacity="0.72"/><rect x="0" y="401" width="2" height="2" fill="#fff" fill-opacity="0.72"/><rect x="1930" y="401" width="2" height="1" fill="#fff" fill-opacity="0.79"/><rect x="1929" y="402" width="2" height="2" fill="#fff" fill-opacity="0.58"/><rect x="0" y="403" width="2" height="1" fill="#fff" fill-opacity="1.00"/><rect x="1" y="405" width="1" height="2" fill="#fff" fill-opacity="0.75"/><rect x="1930" y="405" width="1" height="2" fill="#fff" fill-opacity="0.59"/><rect x="1" y="406" width="2" height="1" fill="#fff" fill-opacity="0.48"/><rect x="0" y="409" width="2" height="1" fill="#fff" fill-opacity="0.55"/><rect x="1929" y="409" width="2" height="1" fill="#fff" fill-opacity="0.69"/><rect x="0" y="410" width="1" height="2" fill="#fff" fill-opacity="0.99"/><rect x="1929" y="412" width="2" height="1" fill="#fff" fill-opacity="0.65"/><rect x="1" y="414" width="2" height="1" fill="#fff" fill-opacity="0.66"/><rect x="1930" y="414" width="1" height="1" fill="#fff" fill-opacity="0.61"/><rect x="0" y="417" width="2" height="2" fill="#fff" fill-opacity="0.56"/><rect x="1930" y="417" width="1" height="1" fill="#fff" fill-opacity="0.41"/><rect x="1929" y="422" width="2" height="1" fill="#fff" fill-opacity="0.44"/><rect x="0" y="425" width="1" height="1" fill="#fff" fill-opacity="0.97"/><rect x="1" y="427" width="1" height="1" fill="#fff" fill-opacity="0.99"/><rect x="1930" y="427" width="2" height="2" fill="#fff" fill-opacity="0.60"/><rect x="1930" y="428" width="1" height="1" fill="#fff" fill-opacity="0.45"/><rect x="0" y="431" width="1" height="1" fill="#fff" fill-opacity="0.75"/><rect x="1930" y="431" width="1" height="1" fill="#fff" fill-opacity="0.86"/><rect x="1930" y="435" width="1" height="1" fill="#fff" fill-opacity="0.44"/><rect x="1" y="439" width="1" height="1" fill="#fff" fill-opacity="0.44"/><rect x="1929" y="439" width="1" height="1" fill="#fff" fill-opacity="1.00"/><rect x="1930" y="441" width="2" height="2" fill="#fff" fill-opacity="0.68"/><rect x="1" y="444" width="2" height="1" fill="#fff" fill-opacity="0.52"/><rect x="1929" y="444" width="2" height="1" fill="#fff" fill-opacity="0.43"/><rect x="1930" y="446" width="1" height="2" fill="#fff" fill-opacity="0.73"/><rect x="0" y="448" width="2" height="1" fill="#fff" fill-opacity="0.83"/><rect x="1930" y="448" width="2" height="1" fill="#fff" fill-opacity="0.97"/><rect x="0" y="451" width="1" height="1" fill="#fff" fill-opacity="0.81"/><rect x="1930" y="451" width="2" height="1" fill="#fff" fill-opacity="0.59"/><rect x="1" y="454" width="2" height="1" fill="#fff" fill-opacity="0.78"/><rect x="1929" y="454" width="2" height="2" fill="#fff" fill-opacity="0.73"/><rect x="0" y="459" width="2" height="1" fill="#fff" fill-opacity="0.61"/><rect x="1929" y="462" width="1" height="1" fill="#fff" fill-opacity="0.68"/><rect x="1930" y="465" width="1" height="1" fill="#fff" fill-opacity="0.81"/><rect x="0" y="470" width="2" height="1" fill="#fff" fill-opacity="0.97"/><rect x="1930" y="470" width="1" height="1" fill="#fff" fill-opacity="0.64"/><rect x="1930" y="471" width="2" height="1" fill="#fff" fill-opacity="0.53"/><rect x="1" y="472" width="1" height="1" fill="#fff" fill-opacity="0.98"/><rect x="1929" y="473" width="1" height="1" fill="#fff" fill-opacity="0.92"/><rect x="0" y="476" width="2" height="1" fill="#fff" fill-opacity="0.65"/><rect x="1930" y="476" width="2" height="1" fill="#fff" fill-opacity="0.52"/><rect x="1930" y="478" width="2" height="1" fill="#fff" fill-opacity="0.90"/><rect x="1930" y="479" width="1" height="1" fill="#fff" fill-opacity="0.49"/><rect x="0" y="484" width="1" height="1" fill="#fff" fill-opacity="0.54"/><rect x="1" y="485" width="2" height="1" fill="#fff" fill-opacity="0.47"/><rect x="1930" y="485" width="1" height="1" fill="#fff" fill-opacity="0.82"/><rect x="1" y="488" width="2" height="1" fill="#fff" fill-opacity="0.57"/><rect x="1930" y="488" width="2" height="2" fill="#fff" fill-opacity="0.43"/><rect x="0" y="491" width="1" height="2" fill="#fff" fill-opacity="0.91"/><rect x="0" y="494" width="1" height="1" fill="#fff" fill-opacity="0.79"/><rect x="1929" y="497" width="2" height="1" fill="#fff" fill-opacity="0.92"/><rect x="0" y="498" width="1" height="1" fill="#fff" fill-opacity="0.47"/><rect x="0" y="501" width="1" height="2" fill="#fff" fill-opacity="0.67"/><rect x="1930" y="501" width="1" height="2" fill="#fff" fill-opacity="0.66"/><rect x="1" y="504" width="1" height="1" fill="#fff" fill-opacity="0.62"/><rect x="1930" y="504" width="1" height="1" fill="#fff" fill-opacity="0.70"/><rect x="0" y="507" width="2" height="2" fill="#fff" fill-opacity="0.88"/><rect x="1930" y="507" width="2" height="1" fill="#fff" fill-opacity="0.79"/><rect x="1929" y="510" width="1" height="1" fill="#fff" fill-opacity="0.76"/><rect x="1930" y="513" width="1" height="1" fill="#fff" fill-opacity="0.48"/><rect x="1" y="517" width="1" height="2" fill="#fff" fill-opacity="0.65"/><rect x="1929" y="517" width="1" height="2" fill="#fff" fill-opacity="0.67"/><rect x="1930" y="520" width="2" height="1" fill="#fff" fill-opacity="0.77"/><rect x="1" y="523" width="1" height="1" fill="#fff" fill-opacity="0.85"/><rect x="0" y="525" width="1" height="1" fill="#fff" fill-opacity="0.60"/><rect x="1930" y="525" width="1" height="1" fill="#fff" fill-opacity="0.65"/><rect x="0" y="527" width="2" height="1" fill="#fff" fill-opacity="0.93"/><rect x="1930" y="527" width="2" height="2" fill="#fff" fill-opacity="0.85"/><rect x="0" y="528" width="2" height="2" fill="#fff" fill-opacity="0.57"/><rect x="1929" y="528" width="1" height="1" fill="#fff" fill-opacity="0.61"/><rect x="0" y="529" width="2" height="2" fill="#fff" fill-opacity="0.59"/><rect x="1929" y="530" width="1" height="1" fill="#fff" fill-opacity="0.80"/><rect x="1930" y="531" width="2" height="1" fill="#fff" fill-opacity="0.73"/><rect x="1" y="534" width="1" height="1" fill="#fff" fill-opacity="0.51"/><rect x="0" y="535" width="1" height="1" fill="#fff" fill-opacity="0.99"/><rect x="1" y="538" width="1" height="2" fill="#fff" fill-opacity="0.57"/><rect x="0" y="540" width="1" height="1" fill="#fff" fill-opacity="0.69"/><rect x="1" y="541" width="2" height="2" fill="#fff" fill-opacity="0.42"/><rect x="1" y="542" width="1" height="1" fill="#fff" fill-opacity="0.52"/><rect x="1930" y="542" width="1" height="1" fill="#fff" fill-opacity="0.61"/><rect x="0" y="543" width="2" height="1" fill="#fff" fill-opacity="0.84"/><rect x="1930" y="543" width="1" height="1" fill="#fff" fill-opacity="0.70"/><rect x="1930" y="544" width="1" height="1" fill="#fff" fill-opacity="0.53"/><rect x="0" y="545" width="2" height="2" fill="#fff" fill-opacity="0.41"/><rect x="1930" y="545" width="2" height="1" fill="#fff" fill-opacity="0.62"/><rect x="1" y="547" width="1" height="2" fill="#fff" fill-opacity="0.96"/><rect x="1930" y="547" width="2" height="1" fill="#fff" fill-opacity="0.53"/><rect x="1" y="548" width="2" height="2" fill="#fff" fill-opacity="0.45"/><rect x="1930" y="548" width="2" height="2" fill="#fff" fill-opacity="0.85"/><rect x="1930" y="549" width="2" height="1" fill="#fff" fill-opacity="0.52"/><rect x="1" y="550" width="2" height="2" fill="#fff" fill-opacity="0.93"/><rect x="0" y="552" width="1" height="2" fill="#fff" fill-opacity="0.71"/><rect x="1930" y="552" width="2" height="2" fill="#fff" fill-opacity="0.95"/><rect x="0" y="555" width="2" height="1" fill="#fff" fill-opacity="0.58"/><rect x="1930" y="557" width="1" height="1" fill="#fff" fill-opacity="0.88"/><rect x="0" y="560" width="2" height="2" fill="#fff" fill-opacity="0.50"/><rect x="1930" y="560" width="2" height="2" fill="#fff" fill-opacity="0.70"/><rect x="1929" y="561" width="2" height="2" fill="#fff" fill-opacity="0.57"/><rect x="1" y="562" width="1" height="2" fill="#fff" fill-opacity="0.71"/><rect x="1930" y="564" width="1" height="1" fill="#fff" fill-opacity="0.57"/><rect x="1930" y="566" width="2" height="1" fill="#fff" fill-opacity="0.55"/><rect x="0" y="568" width="2" height="2" fill="#fff" fill-opacity="0.41"/><rect x="1930" y="568" width="2" height="1" fill="#fff" fill-opacity="0.46"/><rect x="1" y="569" width="1" height="2" fill="#fff" fill-opacity="0.83"/><rect x="1929" y="570" width="1" height="2" fill="#fff" fill-opacity="0.91"/><rect x="0" y="571" width="2" height="2" fill="#fff" fill-opacity="0.51"/><rect x="1930" y="571" width="1" height="1" fill="#fff" fill-opacity="0.73"/><rect x="0" y="572" width="2" height="2" fill="#fff" fill-opacity="0.48"/><rect x="1929" y="574" width="2" height="2" fill="#fff" fill-opacity="0.99"/><rect x="0" y="576" width="2" height="1" fill="#fff" fill-opacity="0.98"/><rect x="1" y="579" width="1" height="1" fill="#fff" fill-opacity="0.76"/><rect x="1930" y="581" width="2" height="2" fill="#fff" fill-opacity="0.76"/><rect x="0" y="583" width="2" height="1" fill="#fff" fill-opacity="0.57"/><rect x="0" y="586" width="1" height="1" fill="#fff" fill-opacity="0.82"/><rect x="1930" y="586" width="2" height="1" fill="#fff" fill-opacity="0.58"/><rect x="1929" y="587" width="2" height="1" fill="#fff" fill-opacity="0.74"/><rect x="1929" y="588" width="1" height="1" fill="#fff" fill-opacity="0.82"/><rect x="0" y="591" width="1" height="2" fill="#fff" fill-opacity="0.77"/><rect x="1930" y="591" width="1" height="1" fill="#fff" fill-opacity="0.43"/><rect x="1" y="593" width="1" height="2" fill="#fff" fill-opacity="0.46"/><rect x="1930" y="594" width="1" height="1" fill="#fff" fill-opacity="0.69"/><rect x="1" y="595" width="1" height="1" fill="#fff" fill-opacity="0.60"/><rect x="1" y="598" width="2" height="2" fill="#fff" fill-opacity="0.85"/><rect x="1930" y="598" width="1" height="2" fill="#fff" fill-opacity="0.88"/><rect x="1" y="600" width="1" height="1" fill="#fff" fill-opacity="0.72"/><rect x="0" y="603" width="2" height="1" fill="#fff" fill-opacity="0.71"/><rect x="1" y="606" width="2" height="1" fill="#fff" fill-opacity="0.59"/><rect x="1930" y="606" width="2" height="1" fill="#fff" fill-opacity="1.00"/><rect x="1" y="609" width="2" height="1" fill="#fff" fill-opacity="0.86"/><rect x="1930" y="609" width="1" height="1" fill="#fff" fill-opacity="0.82"/><rect x="1930" y="611" width="2" height="1" fill="#fff" fill-opacity="0.86"/><rect x="0" y="615" width="1" height="1" fill="#fff" fill-opacity="0.43"/><rect x="1929" y="615" width="2" height="1" fill="#fff" fill-opacity="0.48"/><rect x="1930" y="618" width="1" height="1" fill="#fff" fill-opacity="0.57"/><rect x="1930" y="621" width="1" height="1" fill="#fff" fill-opacity="0.98"/><rect x="0" y="624" width="1" height="1" fill="#fff" fill-opacity="0.57"/><rect x="1930" y="624" width="1" height="2" fill="#fff" fill-opacity="0.76"/><rect x="1930" y="625" width="1" height="1" fill="#fff" fill-opacity="0.55"/><rect x="1" y="626" width="1" height="1" fill="#fff" fill-opacity="0.51"/><rect x="1929" y="626" width="2" height="1" fill="#fff" fill-opacity="0.98"/><rect x="1930" y="627" width="2" height="1" fill="#fff" fill-opacity="0.91"/><rect x="0" y="628" width="1" height="1" fill="#fff" fill-opacity="0.46"/><rect x="0" y="633" width="1" height="1" fill="#fff" fill-opacity="0.48"/><rect x="0" y="636" width="1" height="2" fill="#fff" fill-opacity="0.83"/><rect x="0" y="637" width="2" height="2" fill="#fff" fill-opacity="0.67"/><rect x="1930" y="637" width="2" height="2" fill="#fff" fill-opacity="0.48"/><rect x="0" y="642" width="1" height="1" fill="#fff" fill-opacity="0.73"/><rect x="1930" y="642" width="2" height="1" fill="#fff" fill-opacity="0.53"/><rect x="1930" y="644" width="2" height="1" fill="#fff" fill-opacity="0.91"/><rect x="0" y="645" width="1" height="1" fill="#fff" fill-opacity="0.67"/><rect x="1929" y="650" width="2" height="1" fill="#fff" fill-opacity="0.80"/><rect x="1" y="653" width="1" height="1" fill="#fff" fill-opacity="0.75"/><rect x="1929" y="653" width="1" height="1" fill="#fff" fill-opacity="0.82"/><rect x="1930" y="656" width="2" height="2" fill="#fff" fill-opacity="0.64"/><rect x="0" y="657" width="1" height="2" fill="#fff" fill-opacity="0.59"/><rect x="1" y="659" width="1" height="1" fill="#fff" fill-opacity="0.94"/><rect x="1929" y="659" width="2" height="2" fill="#fff" fill-opacity="0.53"/><rect x="0" y="660" width="1" height="2" fill="#fff" fill-opacity="0.61"/><rect x="1930" y="661" width="1" height="1" fill="#fff" fill-opacity="0.65"/><rect x="0" y="662" width="1" height="1" fill="#fff" fill-opacity="0.74"/><rect x="1929" y="662" width="1" height="2" fill="#fff" fill-opacity="0.47"/><rect x="0" y="665" width="1" height="2" fill="#fff" fill-opacity="0.69"/><rect x="1929" y="665" width="1" height="1" fill="#fff" fill-opacity="0.44"/><rect x="0" y="668" width="2" height="1" fill="#fff" fill-opacity="0.54"/><rect x="1930" y="668" width="1" height="2" fill="#fff" fill-opacity="0.68"/><rect x="1" y="671" width="2" height="1" fill="#fff" fill-opacity="0.74"/><rect x="1930" y="671" width="1" height="1" fill="#fff" fill-opacity="0.64"/><rect x="0" y="674" width="2" height="2" fill="#fff" fill-opacity="0.41"/><rect x="1930" y="674" width="1" height="1" fill="#fff" fill-opacity="0.77"/><rect x="0" y="675" width="2" height="1" fill="#fff" fill-opacity="0.96"/><rect x="1929" y="675" width="1" height="1" fill="#fff" fill-opacity="0.97"/><rect x="1930" y="678" width="2" height="1" fill="#fff" fill-opacity="0.42"/><rect x="0" y="682" width="2" height="2" fill="#fff" fill-opacity="0.71"/><rect x="1930" y="682" width="2" height="1" fill="#fff" fill-opacity="0.55"/><rect x="0" y="689" width="2" height="1" fill="#fff" fill-opacity="0.96"/><rect x="1930" y="689" width="2" height="2" fill="#fff" fill-opacity="0.83"/><rect x="1929" y="692" width="2" height="1" fill="#fff" fill-opacity="0.90"/><rect x="0" y="693" width="2" height="1" fill="#fff" fill-opacity="0.84"/><rect x="1930" y="693" width="2" height="1" fill="#fff" fill-opacity="0.97"/><rect x="1" y="694" width="2" height="1" fill="#fff" fill-opacity="0.97"/><rect x="0" y="699" width="1" height="1" fill="#fff" fill-opacity="0.75"/><rect x="0" y="700" width="1" height="1" fill="#fff" fill-opacity="0.62"/><rect x="0" y="702" width="1" height="2" fill="#fff" fill-opacity="0.59"/><rect x="1930" y="705" width="2" height="1" fill="#fff" fill-opacity="0.41"/><rect x="0" y="707" width="2" height="1" fill="#fff" fill-opacity="1.00"/><rect x="1929" y="707" width="1" height="1" fill="#fff" fill-opacity="0.70"/><rect x="0" y="711" width="2" height="1" fill="#fff" fill-opacity="0.67"/><rect x="0" y="714" width="1" height="1" fill="#fff" fill-opacity="0.82"/><rect x="1930" y="714" width="1" height="2" fill="#fff" fill-opacity="0.93"/><rect x="0" y="715" width="2" height="1" fill="#fff" fill-opacity="1.00"/><rect x="1930" y="715" width="2" height="1" fill="#fff" fill-opacity="0.76"/><rect x="0" y="717" width="1" height="1" fill="#fff" fill-opacity="0.81"/><rect x="1929" y="717" width="1" height="1" fill="#fff" fill-opacity="0.86"/><rect x="0" y="719" width="2" height="1" fill="#fff" fill-opacity="0.65"/><rect x="0" y="722" width="1" height="1" fill="#fff" fill-opacity="0.83"/><rect x="0" y="724" width="2" height="1" fill="#fff" fill-opacity="0.82"/><rect x="1930" y="726" width="1" height="2" fill="#fff" fill-opacity="0.43"/><rect x="1930" y="729" width="1" height="1" fill="#fff" fill-opacity="0.77"/><rect x="0" y="730" width="2" height="1" fill="#fff" fill-opacity="0.75"/><rect x="1930" y="730" width="2" height="1" fill="#fff" fill-opacity="0.56"/><rect x="1" y="732" width="1" height="2" fill="#fff" fill-opacity="0.82"/><rect x="1929" y="732" width="1" height="2" fill="#fff" fill-opacity="0.61"/><rect x="1" y="733" width="2" height="1" fill="#fff" fill-opacity="0.68"/><rect x="1929" y="733" width="2" height="1" fill="#fff" fill-opacity="0.56"/><rect x="0" y="738" width="2" height="1" fill="#fff" fill-opacity="0.61"/><rect x="1" y="740" width="1" height="1" fill="#fff" fill-opacity="0.40"/><rect x="0" y="741" width="2" height="2" fill="#fff" fill-opacity="0.86"/><rect x="0" y="742" width="2" height="1" fill="#fff" fill-opacity="0.79"/><rect x="0" y="743" width="1" height="1" fill="#fff" fill-opacity="0.86"/><rect x="1930" y="743" width="1" height="1" fill="#fff" fill-opacity="0.93"/><rect x="0" y="745" width="1" height="1" fill="#fff" fill-opacity="0.73"/><rect x="1929" y="745" width="2" height="1" fill="#fff" fill-opacity="0.69"/><rect x="1" y="748" width="2" height="2" fill="#fff" fill-opacity="0.54"/><rect x="0" y="750" width="2" height="1" fill="#fff" fill-opacity="0.95"/><rect x="1930" y="753" width="1" height="2" fill="#fff" fill-opacity="0.43"/><rect x="1930" y="756" width="2" height="1" fill="#fff" fill-opacity="0.58"/><rect x="1930" y="759" width="2" height="1" fill="#fff" fill-opacity="0.90"/><rect x="1930" y="761" width="2" height="1" fill="#fff" fill-opacity="0.61"/><rect x="1" y="762" width="1" height="1" fill="#fff" fill-opacity="0.96"/><rect x="1930" y="762" width="1" height="1" fill="#fff" fill-opacity="0.99"/><rect x="1929" y="765" width="1" height="2" fill="#fff" fill-opacity="0.60"/><rect x="0" y="768" width="2" height="1" fill="#fff" fill-opacity="0.56"/><rect x="1930" y="768" width="2" height="2" fill="#fff" fill-opacity="0.48"/><rect x="1930" y="770" width="2" height="2" fill="#fff" fill-opacity="0.86"/><rect x="0" y="772" width="1" height="1" fill="#fff" fill-opacity="0.79"/><rect x="1929" y="772" width="2" height="2" fill="#fff" fill-opacity="0.67"/><rect x="1930" y="774" width="1" height="2" fill="#fff" fill-opacity="0.60"/><rect x="1" y="776" width="2" height="1" fill="#fff" fill-opacity="0.58"/><rect x="1930" y="776" width="1" height="1" fill="#fff" fill-opacity="0.48"/><rect x="1" y="777" width="2" height="1" fill="#fff" fill-opacity="0.75"/><rect x="1929" y="777" width="1" height="1" fill="#fff" fill-opacity="0.47"/><rect x="0" y="779" width="2" height="1" fill="#fff" fill-opacity="0.62"/><rect x="1930" y="782" width="1" height="1" fill="#fff" fill-opacity="0.77"/><rect x="1929" y="783" width="1" height="2" fill="#fff" fill-opacity="0.43"/><rect x="1929" y="784" width="2" height="1" fill="#fff" fill-opacity="0.59"/><rect x="1" y="789" width="2" height="1" fill="#fff" fill-opacity="0.89"/><rect x="1930" y="791" width="2" height="2" fill="#fff" fill-opacity="0.67"/><rect x="1930" y="793" width="1" height="1" fill="#fff" fill-opacity="0.64"/><rect x="1930" y="801" width="2" height="1" fill="#fff" fill-opacity="0.87"/><rect x="1930" y="802" width="1" height="2" fill="#fff" fill-opacity="0.62"/><rect x="1930" y="805" width="2" height="2" fill="#fff" fill-opacity="0.50"/><rect x="0" y="807" width="2" height="2" fill="#fff" fill-opacity="0.84"/><rect x="0" y="809" width="2" height="2" fill="#fff" fill-opacity="0.80"/><rect x="1930" y="809" width="1" height="1" fill="#fff" fill-opacity="0.97"/><rect x="1930" y="811" width="2" height="2" fill="#fff" fill-opacity="0.44"/><rect x="0" y="814" width="2" height="2" fill="#fff" fill-opacity="0.43"/><rect x="1930" y="814" width="1" height="1" fill="#fff" fill-opacity="0.91"/><rect x="1930" y="815" width="2" height="2" fill="#fff" fill-opacity="0.98"/><rect x="1930" y="817" width="1" height="2" fill="#fff" fill-opacity="0.95"/><rect x="0" y="818" width="2" height="2" fill="#fff" fill-opacity="0.76"/><rect x="1930" y="818" width="2" height="1" fill="#fff" fill-opacity="0.76"/><rect x="0" y="819" width="1" height="1" fill="#fff" fill-opacity="0.54"/><rect x="1929" y="819" width="1" height="2" fill="#fff" fill-opacity="0.53"/><rect x="0" y="822" width="2" height="1" fill="#fff" fill-opacity="0.84"/><rect x="1930" y="824" width="1" height="1" fill="#fff" fill-opacity="0.52"/><rect x="0" y="827" width="2" height="1" fill="#fff" fill-opacity="0.92"/><rect x="1930" y="827" width="1" height="1" fill="#fff" fill-opacity="0.47"/><rect x="1930" y="830" width="1" height="1" fill="#fff" fill-opacity="0.85"/><rect x="0" y="833" width="1" height="2" fill="#fff" fill-opacity="0.43"/><rect x="1930" y="836" width="1" height="2" fill="#fff" fill-opacity="0.79"/><rect x="0" y="837" width="2" height="2" fill="#fff" fill-opacity="0.86"/><rect x="0" y="839" width="2" height="1" fill="#fff" fill-opacity="0.94"/><rect x="1" y="842" width="1" height="1" fill="#fff" fill-opacity="1.00"/><rect x="0" y="843" width="2" height="1" fill="#fff" fill-opacity="0.55"/><rect x="1929" y="843" width="2" height="1" fill="#fff" fill-opacity="0.59"/><rect x="0" y="846" width="1" height="1" fill="#fff" fill-opacity="0.45"/><rect x="1930" y="846" width="1" height="1" fill="#fff" fill-opacity="0.43"/><rect x="0" y="849" width="1" height="1" fill="#fff" fill-opacity="0.59"/><rect x="1930" y="849" width="1" height="2" fill="#fff" fill-opacity="0.46"/><rect x="0" y="851" width="1" height="1" fill="#fff" fill-opacity="0.93"/><rect x="1930" y="851" width="2" height="2" fill="#fff" fill-opacity="0.59"/><rect x="1930" y="854" width="2" height="1" fill="#fff" fill-opacity="0.74"/><rect x="1930" y="857" width="2" height="1" fill="#fff" fill-opacity="0.45"/><rect x="0" y="860" width="1" height="1" fill="#fff" fill-opacity="0.47"/><rect x="1929" y="860" width="1" height="2" fill="#fff" fill-opacity="0.69"/><rect x="1" y="861" width="1" height="1" fill="#fff" fill-opacity="0.54"/><rect x="1930" y="861" width="2" height="1" fill="#fff" fill-opacity="0.96"/><rect x="0" y="864" width="2" height="1" fill="#fff" fill-opacity="0.87"/><rect x="1930" y="864" width="2" height="2" fill="#fff" fill-opacity="0.69"/><rect x="1" y="865" width="2" height="2" fill="#fff" fill-opacity="0.70"/><rect x="1" y="867" width="1" height="2" fill="#fff" fill-opacity="0.55"/><rect x="0" y="869" width="2" height="1" fill="#fff" fill-opacity="0.65"/><rect x="1" y="872" width="1" height="1" fill="#fff" fill-opacity="0.92"/><rect x="1930" y="873" width="1" height="2" fill="#fff" fill-opacity="0.80"/><rect x="0" y="874" width="2" height="1" fill="#fff" fill-opacity="0.45"/><rect x="1930" y="874" width="1" height="2" fill="#fff" fill-opacity="0.53"/><rect x="1930" y="877" width="1" height="2" fill="#fff" fill-opacity="0.78"/><rect x="1929" y="878" width="2" height="1" fill="#fff" fill-opacity="0.60"/><rect x="1" y="881" width="2" height="1" fill="#fff" fill-opacity="0.45"/><rect x="1929" y="881" width="2" height="1" fill="#fff" fill-opacity="1.00"/><rect x="1" y="882" width="2" height="2" fill="#fff" fill-opacity="0.44"/><rect x="1" y="883" width="2" height="1" fill="#fff" fill-opacity="0.76"/><rect x="1929" y="883" width="2" height="1" fill="#fff" fill-opacity="0.42"/><rect x="1930" y="885" width="1" height="1" fill="#fff" fill-opacity="0.55"/><rect x="0" y="888" width="2" height="1" fill="#fff" fill-opacity="0.61"/><rect x="1" y="891" width="1" height="2" fill="#fff" fill-opacity="0.62"/><rect x="1929" y="891" width="2" height="2" fill="#fff" fill-opacity="0.56"/><rect x="1930" y="892" width="1" height="2" fill="#fff" fill-opacity="0.43"/><rect x="1930" y="894" width="2" height="1" fill="#fff" fill-opacity="0.96"/><rect x="0" y="896" width="2" height="2" fill="#fff" fill-opacity="0.95"/><rect x="1929" y="898" width="2" height="1" fill="#fff" fill-opacity="0.58"/><rect x="0" y="899" width="2" height="1" fill="#fff" fill-opacity="1.00"/><rect x="0" y="901" width="2" height="2" fill="#fff" fill-opacity="0.59"/><rect x="1930" y="901" width="2" height="2" fill="#fff" fill-opacity="0.42"/><rect x="1930" y="907" width="1" height="1" fill="#fff" fill-opacity="0.50"/><rect x="1" y="910" width="2" height="1" fill="#fff" fill-opacity="0.69"/><rect x="1929" y="910" width="2" height="2" fill="#fff" fill-opacity="0.69"/><rect x="1930" y="916" width="2" height="1" fill="#fff" fill-opacity="0.63"/><rect x="0" y="920" width="1" height="2" fill="#fff" fill-opacity="0.94"/><rect x="1929" y="920" width="2" height="1" fill="#fff" fill-opacity="0.85"/><rect x="1930" y="922" width="2" height="1" fill="#fff" fill-opacity="0.81"/><rect x="0" y="926" width="1" height="1" fill="#fff" fill-opacity="0.45"/><rect x="1" y="927" width="1" height="1" fill="#fff" fill-opacity="0.84"/><rect x="1930" y="927" width="1" height="1" fill="#fff" fill-opacity="0.78"/><rect x="1" y="930" width="2" height="2" fill="#fff" fill-opacity="0.86"/><rect x="1929" y="933" width="2" height="2" fill="#fff" fill-opacity="0.71"/><rect x="1930" y="938" width="2" height="1" fill="#fff" fill-opacity="0.70"/><rect x="0" y="940" width="2" height="1" fill="#fff" fill-opacity="0.87"/><rect x="1930" y="940" width="2" height="1" fill="#fff" fill-opacity="0.71"/><rect x="0" y="943" width="1" height="2" fill="#fff" fill-opacity="0.48"/><rect x="0" y="944" width="1" height="1" fill="#fff" fill-opacity="0.64"/><rect x="1930" y="944" width="2" height="1" fill="#fff" fill-opacity="0.41"/><rect x="1" y="945" width="2" height="1" fill="#fff" fill-opacity="0.82"/><rect x="1930" y="945" width="2" height="1" fill="#fff" fill-opacity="0.49"/><rect x="1930" y="950" width="1" height="2" fill="#fff" fill-opacity="0.66"/><rect x="1930" y="957" width="1" height="1" fill="#fff" fill-opacity="0.84"/><rect x="1930" y="958" width="1" height="2" fill="#fff" fill-opacity="0.93"/><rect x="0" y="961" width="2" height="2" fill="#fff" fill-opacity="0.56"/><rect x="1930" y="962" width="1" height="1" fill="#fff" fill-opacity="0.51"/><rect x="1" y="963" width="2" height="1" fill="#fff" fill-opacity="0.78"/><rect x="1930" y="966" width="1" height="1" fill="#fff" fill-opacity="0.73"/><rect x="1" y="968" width="1" height="1" fill="#fff" fill-opacity="0.61"/><rect x="1929" y="968" width="1" height="1" fill="#fff" fill-opacity="0.61"/><rect x="1930" y="970" width="2" height="1" fill="#fff" fill-opacity="0.55"/><rect x="1930" y="973" width="2" height="2" fill="#fff" fill-opacity="0.64"/><rect x="0" y="976" width="1" height="1" fill="#fff" fill-opacity="0.60"/><rect x="1929" y="976" width="1" height="1" fill="#fff" fill-opacity="0.45"/><rect x="0" y="977" width="1" height="1" fill="#fff" fill-opacity="0.41"/><rect x="1930" y="977" width="2" height="1" fill="#fff" fill-opacity="0.50"/><rect x="1930" y="980" width="2" height="2" fill="#fff" fill-opacity="0.83"/><rect x="1" y="982" width="1" height="1" fill="#fff" fill-opacity="0.51"/><rect x="0" y="983" width="2" height="2" fill="#fff" fill-opacity="0.42"/><rect x="1930" y="983" width="1" height="1" fill="#fff" fill-opacity="0.56"/><rect x="1" y="984" width="1" height="1" fill="#fff" fill-opacity="0.89"/><rect x="1930" y="984" width="2" height="1" fill="#fff" fill-opacity="0.59"/><rect x="1930" y="985" width="2" height="1" fill="#fff" fill-opacity="0.59"/><rect x="1930" y="988" width="1" height="1" fill="#fff" fill-opacity="0.61"/><rect x="1930" y="994" width="2" height="1" fill="#fff" fill-opacity="0.82"/><rect x="0" y="996" width="2" height="2" fill="#fff" fill-opacity="0.83"/><rect x="0" y="998" width="2" height="1" fill="#fff" fill-opacity="0.55"/><rect x="0" y="1000" width="1" height="1" fill="#fff" fill-opacity="0.85"/><rect x="1930" y="1000" width="1" height="1" fill="#fff" fill-opacity="0.64"/><rect x="0" y="1003" width="1" height="1" fill="#fff" fill-opacity="0.46"/><rect x="0" y="1006" width="2" height="1" fill="#fff" fill-opacity="0.50"/><rect x="1930" y="1009" width="1" height="1" fill="#fff" fill-opacity="0.41"/><rect x="0" y="1010" width="2" height="1" fill="#fff" fill-opacity="0.46"/><rect x="1930" y="1010" width="2" height="1" fill="#fff" fill-opacity="0.67"/></svg>
</body></html>
